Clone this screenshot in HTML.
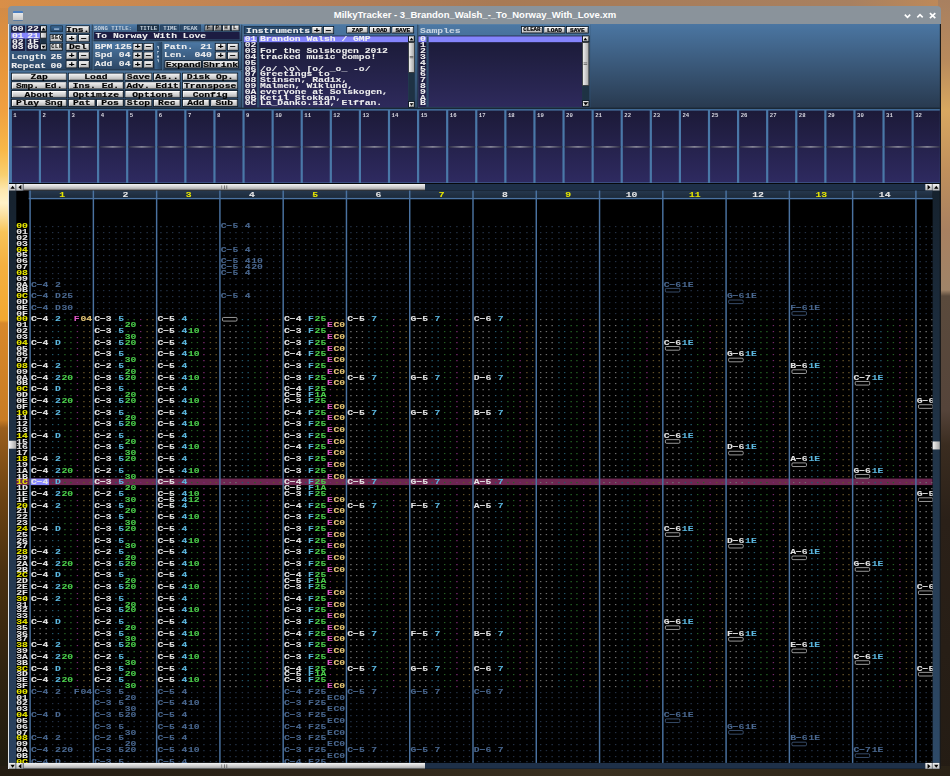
<!DOCTYPE html><html><head><meta charset="utf-8"><style>
*{margin:0;padding:0;box-sizing:border-box}
html,body{width:950px;height:776px;overflow:hidden;background:#2a2118}
#bg{position:absolute;left:0;top:0;width:950px;height:776px}
#app{filter:opacity(0.999);position:absolute;left:9.3px;top:23.5px;width:1280px;height:1024px;transform:scale(0.7272727272727273);transform-origin:0 0;overflow:hidden;background:#000}
.a{position:absolute}
.t{position:absolute;white-space:pre;font-family:"Liberation Mono",monospace;font-weight:bold;font-size:11px;line-height:8px;transform-origin:0 0;transform:scaleX(1.2121);-webkit-text-stroke-width:0.1px}
.sm{position:absolute;white-space:pre;font-family:"Liberation Mono",monospace;font-weight:bold;font-size:6.6px;line-height:6px;transform-origin:0 0;transform:scaleX(1.2)}
.btn{position:absolute;background:linear-gradient(#f4f4f4,#d8d8d8 45%,#b4b4b4);border:1px solid #0c141c;box-shadow:inset 1px 1px 0 #fff, inset -1px -1px 0 #8a8a8a}
.bt{position:absolute;left:0;right:0;text-align:center;white-space:pre;font-family:"Liberation Mono",monospace;font-weight:bold;font-size:11px;line-height:10px;color:#000;-webkit-text-stroke-width:0.25px;transform:scaleX(1.2121)}
.cn{color:#e6e6e6}.ci{color:#5cb8e0}.cv{color:#4cd04c}.ct{color:#e058c8}.cp{color:#e8c878}
i{font-style:normal}
.pn{color:#4a6890}
.cn,.ci,.cv,.ct,.cp,.pn{position:relative;left:-0.7px}
.dn,.di,.dv,.dt,.dp,.dx{-webkit-text-stroke-width:0;position:relative;top:0.9px}
.dn{color:#707070}.di{color:#24586c}.dv{color:#246224}.dt{color:#7a2870}.dp{color:#64522a}
.dx{color:#243246}
.ko{position:absolute;border:1.6px solid #d0d0d0;border-radius:2px}
.kx{border-color:#4a6890}
</style></head><body>
<div id="bg">
<div class="a" style="left:0px;top:0px;width:10px;height:776px;background:linear-gradient(#cf8a4a 0px,#e49238 50px,#f0a040 110px,#f8b848 150px,#f8d070 175px,#fde8b0 190px,#fff2c8 203px,#fbe0a0 215px,#f8c458 232px,#f4b040 265px,#f2a830 320px,#d8882a 323px,#c87c24 420px,#9a5e1c 428px,#6a4212 500px,#4a3010 570px,#2e2210 680px,#1e1a10 776px)"></div>
<div class="a" style="left:0px;top:0px;width:950px;height:8px;background:linear-gradient(90deg,#d98f48 0px,#b88058 300px,#a87a55 500px,#a88060 850px,#c08a58 950px)"></div>
<div class="a" style="left:938px;top:0px;width:12px;height:776px;background:linear-gradient(#a88060 0px,#b88a5c 60px,#d8a860 110px,#c0905c 170px,#a88060 230px,#a08468 290px,#5a4a3c 296px,#55443a 410px,#3a2c20 445px,#2a2018 520px,#241c14 776px)"></div>
<div class="a" style="left:0px;top:766px;width:950px;height:10px;background:linear-gradient(90deg,#241c12,#2c2418 300px,#3a3020 600px,#2a2216 950px)"></div>
</div>
<div class="a" style="left:8px;top:6px;width:932.5px;height:18px;background:#8a939b;border-radius:4px 4px 0 0"></div>
<div class="a" style="left:13px;top:11px;width:10px;height:9.5px;border-radius:1px;background:linear-gradient(#4a7ec0 0,#4a7ec0 22%,#e8e8e8 22%,#c8c8c8 90%,#5a7aa0 90%)"></div>
<div class="a" style="left:0;width:950px;top:7.5px;text-align:center;font-family:'Liberation Sans', sans-serif;font-weight:bold;font-size:9.5px;line-height:14px;color:#fff;letter-spacing:0px">MilkyTracker - 3_Brandon_Walsh_-_To_Norway_With_Love.xm</div>
<svg class="a" style="left:895px;top:4px" width="50" height="20" viewBox="0 0 50 20"><path d="M9.8 10.6 L12.5 13.4 L15.2 10.6" stroke="#fff" stroke-width="1.6" fill="none"/><path d="M22.3 13.4 L25 10.6 L27.7 13.4" stroke="#fff" stroke-width="1.6" fill="none"/><path d="M34.9 9.2 L40.3 14.2 M40.3 9.2 L34.9 14.2" stroke="#fff" stroke-width="1.7" fill="none"/></svg>
<div class="a" style="left:8.3px;top:23.5px;width:1.3px;height:745px;background:#dfe4ea"></div>
<div class="a" style="left:939.9px;top:23.5px;width:0.8px;height:745px;background:#1a1a1a"></div>
<div id="app">
<div class="a" style="left:0px;top:0px;width:1280px;height:118px;background:#1c2c3c"></div>
<div class="a" style="left:0px;top:0px;width:115px;height:64px;background:linear-gradient(#4c78a4,#2c4664);border-top:1px solid #6a98c4;border-left:1px solid #6a98c4;border-right:1px solid #14202c;border-bottom:1px solid #14202c"></div>
<div class="a" style="left:115px;top:0px;width:206px;height:24px;background:linear-gradient(#4c78a4,#2c4664);border-top:1px solid #6a98c4;border-left:1px solid #6a98c4;border-right:1px solid #14202c;border-bottom:1px solid #14202c"></div>
<div class="a" style="left:115px;top:24px;width:96px;height:40px;background:linear-gradient(#4c78a4,#2c4664);border-top:1px solid #6a98c4;border-left:1px solid #6a98c4;border-right:1px solid #14202c;border-bottom:1px solid #14202c"></div>
<div class="a" style="left:211px;top:24px;width:110px;height:40px;background:linear-gradient(#4c78a4,#2c4664);border-top:1px solid #6a98c4;border-left:1px solid #6a98c4;border-right:1px solid #14202c;border-bottom:1px solid #14202c"></div>
<div class="a" style="left:0px;top:64px;width:321px;height:54px;background:linear-gradient(#4c78a4,#2c4664);border-top:1px solid #6a98c4;border-left:1px solid #6a98c4;border-right:1px solid #14202c;border-bottom:1px solid #14202c"></div>
<div class="a" style="left:321px;top:0px;width:242px;height:117px;background:linear-gradient(#4c78a4,#2c4664);border-top:1px solid #6a98c4;border-left:1px solid #6a98c4;border-right:1px solid #14202c;border-bottom:1px solid #14202c"></div>
<div class="a" style="left:563px;top:0px;width:237px;height:117px;background:linear-gradient(#4c78a4,#2c4664);border-top:1px solid #6a98c4;border-left:1px solid #6a98c4;border-bottom:1px solid #14202c"></div>
<div class="a" style="left:800px;top:0px;width:480px;height:117px;background:linear-gradient(#4b76a2,#28394e)"></div>
<div class="a" style="left:3px;top:2px;width:19px;height:34.5px;background:#1c1c3e"></div>
<div class="a" style="left:24px;top:2px;width:19px;height:34.5px;background:#1c1c3e"></div>
<div class="a" style="left:3px;top:11.6px;width:40px;height:8.3px;background:#8484fc"></div>
<div class="t" style="left:3.5px;top:3.3px;color:#f0f0f0;">00</div>
<div class="t" style="left:25px;top:3.3px;color:#f0f0f0;">22</div>
<div class="t" style="left:3.5px;top:11.600000000000001px;color:#f0f0f0;">01</div>
<div class="t" style="left:25px;top:11.600000000000001px;color:#f0f0f0;">21</div>
<div class="t" style="left:3.5px;top:19.900000000000002px;color:#f0f0f0;">02</div>
<div class="t" style="left:25px;top:19.900000000000002px;color:#f0f0f0;">1F</div>
<div class="t" style="left:3.5px;top:28.200000000000003px;color:#f0f0f0;">03</div>
<div class="t" style="left:25px;top:28.200000000000003px;color:#f0f0f0;">00</div>
<div class="a" style="left:43px;top:2px;width:9px;height:34.5px;background:#1e3244"></div>
<div class="btn" style="left:43px;top:2px;width:9px;height:9.3px;">
<div class="bt" style="top:-0.8499999999999996px;"></div></div>
<svg class="a" style="left:43px;top:2px" width="9" height="9"><path d="M1.8 6.8 L4.5 2.8 L7.2 6.8 Z" fill="#000"/></svg>
<div class="a" style="left:43px;top:11.3px;width:9px;height:8.6px;background:linear-gradient(90deg,#f0f0f0,#b0b0b0);border:1px solid #333"></div>
<div class="btn" style="left:43px;top:27.3px;width:9px;height:9.2px;">
<div class="bt" style="top:-0.9000000000000004px;"></div></div>
<svg class="a" style="left:43px;top:27.3px" width="9" height="9"><path d="M1.8 2.8 L4.5 6.8 L7.2 2.8 Z" fill="#000"/></svg>
<div class="a" style="left:57px;top:2px;width:17px;height:9px;background:linear-gradient(#3a6a98,#24466a);border:1px solid #14283a"></div>
<div class="a" style="left:62px;top:5.5px;width:7px;height:2px;background:#9ab8d8"></div>
<div class="btn" style="left:56px;top:13.5px;width:18px;height:11px;">
<div class="bt" style="top:0.0px;"></div></div>
<div class="sm" style="left:58px;top:16.5px;color:#181818;font-size:6.2px;transform:scaleX(1.15);letter-spacing:0.9px;-webkit-text-stroke-width:0.2px">SEQ</div>
<div class="btn" style="left:56px;top:25.5px;width:18px;height:11.5px;">
<div class="bt" style="top:0.25px;"></div></div>
<div class="sm" style="left:58px;top:28.5px;color:#181818;font-size:6.2px;transform:scaleX(1.15);letter-spacing:0.9px;-webkit-text-stroke-width:0.2px">CLN</div>
<div class="btn" style="left:78px;top:2px;width:33px;height:11px;">
<div class="bt" style="top:0.0px;">Ins.</div></div>
<div class="btn" style="left:78px;top:14px;width:16px;height:11px;">
<div class="bt" style="top:0.0px;">+</div></div>
<div class="btn" style="left:95px;top:14px;width:16px;height:11px;">
<div class="bt" style="top:0.0px;">−</div></div>
<div class="btn" style="left:78px;top:26px;width:33px;height:11px;">
<div class="bt" style="top:0.0px;">Del</div></div>
<div class="t" style="left:3px;top:40.5px;color:#f0f0f0;">Length</div>
<div class="t" style="left:57px;top:40.5px;color:#f0f0f0;">25</div>
<div class="btn" style="left:78px;top:38px;width:16px;height:11px;">
<div class="bt" style="top:0.0px;">+</div></div>
<div class="btn" style="left:95px;top:38px;width:16px;height:11px;">
<div class="bt" style="top:0.0px;">−</div></div>
<div class="t" style="left:3px;top:52.5px;color:#f0f0f0;">Repeat</div>
<div class="t" style="left:57px;top:52.5px;color:#f0f0f0;">00</div>
<div class="btn" style="left:78px;top:50px;width:16px;height:11px;">
<div class="bt" style="top:0.0px;">+</div></div>
<div class="btn" style="left:95px;top:50px;width:16px;height:11px;">
<div class="bt" style="top:0.0px;">−</div></div>
<div class="sm" style="left:117px;top:3.5px;color:#c8d4e0;">SONG TITLE:</div>
<div class="a" style="left:175.5px;top:1px;width:30px;height:9px;background:#22384e;border:1px solid #1a2a3a"></div>
<div class="sm" style="left:179.5px;top:3.5px;color:#c8d4e0;">TITLE</div>
<div class="a" style="left:208px;top:1px;width:26px;height:9px;background:#2c4a6a;border:1px solid #24405c"></div>
<div class="sm" style="left:212px;top:3.5px;color:#c8d4e0;">TIME</div>
<div class="a" style="left:235px;top:1px;width:29px;height:9px;background:#2c4a6a;border:1px solid #24405c"></div>
<div class="sm" style="left:240px;top:3.5px;color:#c8d4e0;">PEAK</div>
<div class="btn" style="left:269px;top:1px;width:11.5px;height:8.5px;background:linear-gradient(#a0a0a0,#6c6c6c)">
<div class="bt" style="top:-1.25px;"></div></div>
<div class="sm" style="left:272.3px;top:3.3px;color:#101010;">F</div>
<div class="btn" style="left:281px;top:1px;width:11.5px;height:8.5px;background:linear-gradient(#a0a0a0,#6c6c6c)">
<div class="bt" style="top:-1.25px;"></div></div>
<div class="sm" style="left:284.3px;top:3.3px;color:#101010;">P</div>
<div class="btn" style="left:293px;top:1px;width:11.5px;height:8.5px;background:linear-gradient(#ececec,#b4b4b4)">
<div class="bt" style="top:-1.25px;"></div></div>
<div class="sm" style="left:296.3px;top:3.3px;color:#101010;">H</div>
<div class="btn" style="left:305px;top:1px;width:11.5px;height:8.5px;background:linear-gradient(#ececec,#b4b4b4)">
<div class="bt" style="top:-1.25px;"></div></div>
<div class="sm" style="left:308.3px;top:3.3px;color:#101010;">L</div>
<div class="a" style="left:117px;top:11px;width:200px;height:10px;background:#1c1c42"></div>
<div class="t" style="left:119px;top:12px;color:#f0f0f0;">To Norway With Love</div>
<div class="t" style="left:118px;top:27px;color:#f0f0f0;">BPM</div>
<div class="t" style="left:145px;top:27px;color:#f0f0f0;">125</div>
<div class="t" style="left:118px;top:39px;color:#f0f0f0;">Spd</div>
<div class="t" style="left:150.5px;top:39px;color:#f0f0f0;">04</div>
<div class="t" style="left:118px;top:51px;color:#f0f0f0;">Add</div>
<div class="t" style="left:150.5px;top:51px;color:#f0f0f0;">04</div>
<div class="btn" style="left:170px;top:26px;width:14px;height:11px;">
<div class="bt" style="top:0.0px;">+</div></div>
<div class="btn" style="left:185px;top:26px;width:14px;height:11px;">
<div class="bt" style="top:0.0px;">−</div></div>
<div class="btn" style="left:170px;top:38px;width:14px;height:11px;">
<div class="bt" style="top:0.0px;">+</div></div>
<div class="btn" style="left:185px;top:38px;width:14px;height:11px;">
<div class="bt" style="top:0.0px;">−</div></div>
<div class="btn" style="left:170px;top:50px;width:14px;height:11px;">
<div class="bt" style="top:0.0px;">+</div></div>
<div class="btn" style="left:185px;top:50px;width:14px;height:11px;">
<div class="bt" style="top:0.0px;">−</div></div>
<div class="a" style="left:201px;top:25px;width:9px;height:37px;background:linear-gradient(90deg,#3e6a94,#24405e)"></div>
<div class="sm" style="left:207.5px;top:30px;color:#c8d8e8;font-size:6px;transform:rotate(90deg) scaleX(1.45);letter-spacing:0.6px;-webkit-text-stroke-width:0">FLIP</div>
<div class="t" style="left:213px;top:27px;color:#f0f0f0;">Patn.</div>
<div class="t" style="left:262.5px;top:27px;color:#f0f0f0;">21</div>
<div class="t" style="left:213px;top:39px;color:#f0f0f0;">Len.</div>
<div class="t" style="left:254.5px;top:39px;color:#f0f0f0;">040</div>
<div class="btn" style="left:283px;top:26px;width:16px;height:11px;">
<div class="bt" style="top:0.0px;">+</div></div>
<div class="btn" style="left:300px;top:26px;width:16px;height:11px;">
<div class="bt" style="top:0.0px;">−</div></div>
<div class="btn" style="left:283px;top:38px;width:16px;height:11px;">
<div class="bt" style="top:0.0px;">+</div></div>
<div class="btn" style="left:300px;top:38px;width:16px;height:11px;">
<div class="bt" style="top:0.0px;">−</div></div>
<div class="btn" style="left:214px;top:50px;width:51px;height:11px;">
<div class="bt" style="top:0.0px;">Expand</div></div>
<div class="btn" style="left:266px;top:50px;width:50px;height:11px;">
<div class="bt" style="top:0.0px;">Shrink</div></div>
<div class="btn" style="left:3px;top:67px;width:77px;height:11px;">
<div class="bt" style="top:0.0px;">Zap</div></div>
<div class="btn" style="left:81px;top:67px;width:77px;height:11px;">
<div class="bt" style="top:0.0px;">Load</div></div>
<div class="btn" style="left:159px;top:67px;width:38px;height:11px;">
<div class="bt" style="top:0.0px;">Save</div></div>
<div class="btn" style="left:198px;top:67px;width:38px;height:11px;">
<div class="bt" style="top:0.0px;">As..</div></div>
<div class="btn" style="left:238px;top:67px;width:77px;height:11px;">
<div class="bt" style="top:0.0px;">Disk Op.</div></div>
<div class="btn" style="left:3px;top:79px;width:77px;height:11px;">
<div class="bt" style="top:0.0px;">Smp. Ed.</div></div>
<div class="btn" style="left:81px;top:79px;width:77px;height:11px;">
<div class="bt" style="top:0.0px;">Ins. Ed.</div></div>
<div class="btn" style="left:159px;top:79px;width:77px;height:11px;">
<div class="bt" style="top:0.0px;">Adv. Edit</div></div>
<div class="btn" style="left:238px;top:79px;width:77px;height:11px;">
<div class="bt" style="top:0.0px;">Transpose</div></div>
<div class="btn" style="left:3px;top:91px;width:77px;height:11px;">
<div class="bt" style="top:0.0px;">About</div></div>
<div class="btn" style="left:81px;top:91px;width:77px;height:11px;">
<div class="bt" style="top:0.0px;">Optimize</div></div>
<div class="btn" style="left:159px;top:91px;width:77px;height:11px;">
<div class="bt" style="top:0.0px;">Options</div></div>
<div class="btn" style="left:238px;top:91px;width:77px;height:11px;">
<div class="bt" style="top:0.0px;">Config</div></div>
<div class="btn" style="left:3px;top:103px;width:77px;height:11px;">
<div class="bt" style="top:0.0px;">Play Sng</div></div>
<div class="btn" style="left:81px;top:103px;width:38px;height:11px;">
<div class="bt" style="top:0.0px;">Pat</div></div>
<div class="btn" style="left:120px;top:103px;width:38px;height:11px;">
<div class="bt" style="top:0.0px;">Pos</div></div>
<div class="btn" style="left:159px;top:103px;width:38px;height:11px;">
<div class="bt" style="top:0.0px;">Stop</div></div>
<div class="btn" style="left:198px;top:103px;width:38px;height:11px;">
<div class="bt" style="top:0.0px;">Rec</div></div>
<div class="btn" style="left:238px;top:103px;width:38px;height:11px;">
<div class="bt" style="top:0.0px;">Add</div></div>
<div class="btn" style="left:277px;top:103px;width:38px;height:11px;">
<div class="bt" style="top:0.0px;">Sub</div></div>
<div class="a" style="left:323px;top:3px;width:92px;height:11px;background:#2a4a6c;border:1px solid #1c3048"></div>
<div class="t" style="left:326px;top:5px;color:#f0f0f0;">Instruments</div>
<div class="btn" style="left:416px;top:3px;width:15px;height:11px;">
<div class="bt" style="top:0.0px;">+</div></div>
<div class="btn" style="left:432px;top:3px;width:15px;height:11px;">
<div class="bt" style="top:0.0px;">−</div></div>
<div class="btn" style="left:464px;top:3px;width:30px;height:10px;">
<div class="bt" style="top:-0.5px;font-size:7px;">ZAP</div></div>
<div class="btn" style="left:495px;top:3px;width:30px;height:10px;">
<div class="bt" style="top:-0.5px;font-size:7px;">LOAD</div></div>
<div class="btn" style="left:526px;top:3px;width:31px;height:10px;">
<div class="bt" style="top:-0.5px;font-size:7px;">SAVE</div></div>
<div class="a" style="left:323px;top:16px;width:226px;height:99px;background:linear-gradient(#1a1a36,#2e2a5c)"></div>
<div class="a" style="left:323px;top:16px;width:18px;height:99px;background:linear-gradient(#181834,#26244e)"></div>
<div class="a" style="left:341px;top:16px;width:3px;height:99px;background:#2c4c6c"></div>
<div class="a" style="left:323px;top:17px;width:226px;height:8px;background:#8484fc"></div>
<div class="a" style="left:341px;top:17px;width:3px;height:8px;background:#2c4c6c"></div>
<div class="t" style="left:324px;top:16.6px;color:#f0f0f0;">01</div>
<div class="t" style="left:345px;top:16.6px;color:#f0f0f0;">Brandon Walsh / GMP</div>
<div class="t" style="left:324px;top:24.6px;color:#f0f0f0;">02</div>
<div class="t" style="left:345px;top:24.6px;color:#f0f0f0;"></div>
<div class="t" style="left:324px;top:32.6px;color:#f0f0f0;">03</div>
<div class="t" style="left:345px;top:32.6px;color:#f0f0f0;">For the Solskogen 2012</div>
<div class="t" style="left:324px;top:40.6px;color:#f0f0f0;">04</div>
<div class="t" style="left:345px;top:40.6px;color:#f0f0f0;">tracked music compo!</div>
<div class="t" style="left:324px;top:48.6px;color:#f0f0f0;">05</div>
<div class="t" style="left:345px;top:48.6px;color:#f0f0f0;"></div>
<div class="t" style="left:324px;top:56.6px;color:#f0f0f0;">06</div>
<div class="t" style="left:345px;top:56.6px;color:#f0f0f0;">/o/ \o\ [o/ _o_ -o/</div>
<div class="t" style="left:324px;top:64.6px;color:#f0f0f0;">07</div>
<div class="t" style="left:345px;top:64.6px;color:#f0f0f0;">Greetings to</div>
<div class="t" style="left:324px;top:72.6px;color:#f0f0f0;">08</div>
<div class="t" style="left:345px;top:72.6px;color:#f0f0f0;">Stinsen, Radix,</div>
<div class="t" style="left:324px;top:80.6px;color:#f0f0f0;">09</div>
<div class="t" style="left:345px;top:80.6px;color:#f0f0f0;">Malmen, Wiklund,</div>
<div class="t" style="left:324px;top:88.6px;color:#f0f0f0;">0A</div>
<div class="t" style="left:345px;top:88.6px;color:#f0f0f0;">everyone at Solskogen,</div>
<div class="t" style="left:324px;top:96.6px;color:#f0f0f0;">0B</div>
<div class="t" style="left:345px;top:96.6px;color:#f0f0f0;">Ketil Stokkan,</div>
<div class="t" style="left:324px;top:104.6px;color:#f0f0f0;">0C</div>
<div class="t" style="left:345px;top:104.6px;color:#f0f0f0;">La_Danko.sid, Elffan.</div>
<div class="a" style="left:549px;top:16px;width:9px;height:99px;background:#1e3244"></div>
<div class="btn" style="left:549px;top:16px;width:9px;height:9px;">
<div class="bt" style="top:-1.0px;"></div></div>
<svg class="a" style="left:549px;top:16px" width="9" height="9"><path d="M2 6.5 L4.5 3 L7 6.5 Z" fill="#000"/></svg>
<div class="a" style="left:549px;top:25px;width:9px;height:42px;background:linear-gradient(90deg,#f0f0f0,#a8a8a8);border:1px solid #444"></div>
<div class="a" style="left:551px;top:44px;width:5px;height:1px;background:#555"></div>
<div class="a" style="left:551px;top:46px;width:5px;height:1px;background:#555"></div>
<div class="btn" style="left:549px;top:106px;width:9px;height:9px;">
<div class="bt" style="top:-1.0px;"></div></div>
<svg class="a" style="left:549px;top:106px" width="9" height="9"><path d="M2 3 L4.5 6.5 L7 3 Z" fill="#000"/></svg>
<div class="t" style="left:565px;top:5px;color:#c8d4e0;">Samples</div>
<div class="btn" style="left:704px;top:3px;width:30px;height:10px;">
<div class="bt" style="top:-0.5px;font-size:6.5px;">CLEAR</div></div>
<div class="btn" style="left:735px;top:3px;width:30px;height:10px;">
<div class="bt" style="top:-0.5px;font-size:7px;">LOAD</div></div>
<div class="btn" style="left:766px;top:3px;width:31px;height:10px;">
<div class="bt" style="top:-0.5px;font-size:7px;">SAVE</div></div>
<div class="a" style="left:563px;top:16px;width:224.5px;height:98px;background:linear-gradient(#1a1a36,#2e2a5c)"></div>
<div class="a" style="left:563px;top:16px;width:11px;height:98px;background:linear-gradient(#181834,#26244e)"></div>
<div class="a" style="left:574px;top:16px;width:3px;height:98px;background:#2c4c6c"></div>
<div class="a" style="left:563px;top:17px;width:225px;height:8px;background:#8484fc"></div>
<div class="a" style="left:574px;top:17px;width:3px;height:8px;background:#2c4c6c"></div>
<div class="t" style="left:564.5px;top:16.6px;color:#f0f0f0;">0</div>
<div class="t" style="left:564.5px;top:24.6px;color:#f0f0f0;">1</div>
<div class="t" style="left:564.5px;top:32.6px;color:#f0f0f0;">2</div>
<div class="t" style="left:564.5px;top:40.6px;color:#f0f0f0;">3</div>
<div class="t" style="left:564.5px;top:48.6px;color:#f0f0f0;">4</div>
<div class="t" style="left:564.5px;top:56.6px;color:#f0f0f0;">5</div>
<div class="t" style="left:564.5px;top:64.6px;color:#f0f0f0;">6</div>
<div class="t" style="left:564.5px;top:72.6px;color:#f0f0f0;">7</div>
<div class="t" style="left:564.5px;top:80.6px;color:#f0f0f0;">8</div>
<div class="t" style="left:564.5px;top:88.6px;color:#f0f0f0;">9</div>
<div class="t" style="left:564.5px;top:96.6px;color:#f0f0f0;">A</div>
<div class="t" style="left:564.5px;top:104.6px;color:#f0f0f0;">B</div>
<div class="a" style="left:787.5px;top:16px;width:10.5px;height:98px;background:#1e3244"></div>
<div class="btn" style="left:787.5px;top:16px;width:10.5px;height:9px;">
<div class="bt" style="top:-1.0px;"></div></div>
<svg class="a" style="left:788px;top:16px" width="9" height="9"><path d="M2 6.5 L4.5 3 L7 6.5 Z" fill="#000"/></svg>
<div class="a" style="left:787.5px;top:25px;width:10.5px;height:60px;background:linear-gradient(90deg,#f0f0f0,#a8a8a8);border:1px solid #444"></div>
<div class="a" style="left:790px;top:53px;width:5px;height:1px;background:#555"></div>
<div class="a" style="left:790px;top:55px;width:5px;height:1px;background:#555"></div>
<div class="btn" style="left:787.5px;top:104.5px;width:10.5px;height:9.5px;">
<div class="bt" style="top:-0.75px;"></div></div>
<svg class="a" style="left:788px;top:105px" width="9" height="9"><path d="M1.5 2.5 L5 6.8 L8.5 2.5 Z" fill="#000"/></svg>
<div class="a" style="left:0px;top:116.5px;width:1280px;height:102.5px;background:#4a78a8"></div>
<div class="a" style="left:0px;top:115px;width:1280px;height:1.5px;background:#1a2836"></div>
<div class="a" style="left:3.5px;top:119px;width:37.6px;height:98.5px;background:linear-gradient(#1c1a38,#2e2a60)"></div>
<div class="a" style="left:3.5px;top:167.5px;width:37.6px;height:2px;background:linear-gradient(90deg,#2a2a40,#9a9aa6 50%,#2a2a40)"></div>
<div class="sm" style="left:5.5px;top:124px;color:#d8d8e0;font-size:6.5px">1</div>
<div class="a" style="left:43.5px;top:119px;width:37.6px;height:98.5px;background:linear-gradient(#1c1a38,#2e2a60)"></div>
<div class="a" style="left:43.5px;top:167.5px;width:37.6px;height:2px;background:linear-gradient(90deg,#2a2a40,#9a9aa6 50%,#2a2a40)"></div>
<div class="sm" style="left:45.5px;top:124px;color:#d8d8e0;font-size:6.5px">2</div>
<div class="a" style="left:83.5px;top:119px;width:37.6px;height:98.5px;background:linear-gradient(#1c1a38,#2e2a60)"></div>
<div class="a" style="left:83.5px;top:167.5px;width:37.6px;height:2px;background:linear-gradient(90deg,#2a2a40,#9a9aa6 50%,#2a2a40)"></div>
<div class="sm" style="left:85.5px;top:124px;color:#d8d8e0;font-size:6.5px">3</div>
<div class="a" style="left:123.5px;top:119px;width:37.6px;height:98.5px;background:linear-gradient(#1c1a38,#2e2a60)"></div>
<div class="a" style="left:123.5px;top:167.5px;width:37.6px;height:2px;background:linear-gradient(90deg,#2a2a40,#9a9aa6 50%,#2a2a40)"></div>
<div class="sm" style="left:125.5px;top:124px;color:#d8d8e0;font-size:6.5px">4</div>
<div class="a" style="left:163.5px;top:119px;width:37.6px;height:98.5px;background:linear-gradient(#1c1a38,#2e2a60)"></div>
<div class="a" style="left:163.5px;top:167.5px;width:37.6px;height:2px;background:linear-gradient(90deg,#2a2a40,#9a9aa6 50%,#2a2a40)"></div>
<div class="sm" style="left:165.5px;top:124px;color:#d8d8e0;font-size:6.5px">5</div>
<div class="a" style="left:203.5px;top:119px;width:37.6px;height:98.5px;background:linear-gradient(#1c1a38,#2e2a60)"></div>
<div class="a" style="left:203.5px;top:167.5px;width:37.6px;height:2px;background:linear-gradient(90deg,#2a2a40,#9a9aa6 50%,#2a2a40)"></div>
<div class="sm" style="left:205.5px;top:124px;color:#d8d8e0;font-size:6.5px">6</div>
<div class="a" style="left:243.5px;top:119px;width:37.6px;height:98.5px;background:linear-gradient(#1c1a38,#2e2a60)"></div>
<div class="a" style="left:243.5px;top:167.5px;width:37.6px;height:2px;background:linear-gradient(90deg,#2a2a40,#9a9aa6 50%,#2a2a40)"></div>
<div class="sm" style="left:245.5px;top:124px;color:#d8d8e0;font-size:6.5px">7</div>
<div class="a" style="left:283.5px;top:119px;width:37.6px;height:98.5px;background:linear-gradient(#1c1a38,#2e2a60)"></div>
<div class="a" style="left:283.5px;top:167.5px;width:37.6px;height:2px;background:linear-gradient(90deg,#2a2a40,#9a9aa6 50%,#2a2a40)"></div>
<div class="sm" style="left:285.5px;top:124px;color:#d8d8e0;font-size:6.5px">8</div>
<div class="a" style="left:323.5px;top:119px;width:37.6px;height:98.5px;background:linear-gradient(#1c1a38,#2e2a60)"></div>
<div class="a" style="left:323.5px;top:167.5px;width:37.6px;height:2px;background:linear-gradient(90deg,#2a2a40,#9a9aa6 50%,#2a2a40)"></div>
<div class="sm" style="left:325.5px;top:124px;color:#d8d8e0;font-size:6.5px">9</div>
<div class="a" style="left:363.5px;top:119px;width:37.6px;height:98.5px;background:linear-gradient(#1c1a38,#2e2a60)"></div>
<div class="a" style="left:363.5px;top:167.5px;width:37.6px;height:2px;background:linear-gradient(90deg,#2a2a40,#9a9aa6 50%,#2a2a40)"></div>
<div class="sm" style="left:365.5px;top:124px;color:#d8d8e0;font-size:6.5px">10</div>
<div class="a" style="left:403.5px;top:119px;width:37.6px;height:98.5px;background:linear-gradient(#1c1a38,#2e2a60)"></div>
<div class="a" style="left:403.5px;top:167.5px;width:37.6px;height:2px;background:linear-gradient(90deg,#2a2a40,#9a9aa6 50%,#2a2a40)"></div>
<div class="sm" style="left:405.5px;top:124px;color:#d8d8e0;font-size:6.5px">11</div>
<div class="a" style="left:443.5px;top:119px;width:37.6px;height:98.5px;background:linear-gradient(#1c1a38,#2e2a60)"></div>
<div class="a" style="left:443.5px;top:167.5px;width:37.6px;height:2px;background:linear-gradient(90deg,#2a2a40,#9a9aa6 50%,#2a2a40)"></div>
<div class="sm" style="left:445.5px;top:124px;color:#d8d8e0;font-size:6.5px">12</div>
<div class="a" style="left:483.5px;top:119px;width:37.6px;height:98.5px;background:linear-gradient(#1c1a38,#2e2a60)"></div>
<div class="a" style="left:483.5px;top:167.5px;width:37.6px;height:2px;background:linear-gradient(90deg,#2a2a40,#9a9aa6 50%,#2a2a40)"></div>
<div class="sm" style="left:485.5px;top:124px;color:#d8d8e0;font-size:6.5px">13</div>
<div class="a" style="left:523.5px;top:119px;width:37.6px;height:98.5px;background:linear-gradient(#1c1a38,#2e2a60)"></div>
<div class="a" style="left:523.5px;top:167.5px;width:37.6px;height:2px;background:linear-gradient(90deg,#2a2a40,#9a9aa6 50%,#2a2a40)"></div>
<div class="sm" style="left:525.5px;top:124px;color:#d8d8e0;font-size:6.5px">14</div>
<div class="a" style="left:563.5px;top:119px;width:37.6px;height:98.5px;background:linear-gradient(#1c1a38,#2e2a60)"></div>
<div class="a" style="left:563.5px;top:167.5px;width:37.6px;height:2px;background:linear-gradient(90deg,#2a2a40,#9a9aa6 50%,#2a2a40)"></div>
<div class="sm" style="left:565.5px;top:124px;color:#d8d8e0;font-size:6.5px">15</div>
<div class="a" style="left:603.5px;top:119px;width:37.6px;height:98.5px;background:linear-gradient(#1c1a38,#2e2a60)"></div>
<div class="a" style="left:603.5px;top:167.5px;width:37.6px;height:2px;background:linear-gradient(90deg,#2a2a40,#9a9aa6 50%,#2a2a40)"></div>
<div class="sm" style="left:605.5px;top:124px;color:#d8d8e0;font-size:6.5px">16</div>
<div class="a" style="left:643.5px;top:119px;width:37.6px;height:98.5px;background:linear-gradient(#1c1a38,#2e2a60)"></div>
<div class="a" style="left:643.5px;top:167.5px;width:37.6px;height:2px;background:linear-gradient(90deg,#2a2a40,#9a9aa6 50%,#2a2a40)"></div>
<div class="sm" style="left:645.5px;top:124px;color:#d8d8e0;font-size:6.5px">17</div>
<div class="a" style="left:683.5px;top:119px;width:37.6px;height:98.5px;background:linear-gradient(#1c1a38,#2e2a60)"></div>
<div class="a" style="left:683.5px;top:167.5px;width:37.6px;height:2px;background:linear-gradient(90deg,#2a2a40,#9a9aa6 50%,#2a2a40)"></div>
<div class="sm" style="left:685.5px;top:124px;color:#d8d8e0;font-size:6.5px">18</div>
<div class="a" style="left:723.5px;top:119px;width:37.6px;height:98.5px;background:linear-gradient(#1c1a38,#2e2a60)"></div>
<div class="a" style="left:723.5px;top:167.5px;width:37.6px;height:2px;background:linear-gradient(90deg,#2a2a40,#9a9aa6 50%,#2a2a40)"></div>
<div class="sm" style="left:725.5px;top:124px;color:#d8d8e0;font-size:6.5px">19</div>
<div class="a" style="left:763.5px;top:119px;width:37.6px;height:98.5px;background:linear-gradient(#1c1a38,#2e2a60)"></div>
<div class="a" style="left:763.5px;top:167.5px;width:37.6px;height:2px;background:linear-gradient(90deg,#2a2a40,#9a9aa6 50%,#2a2a40)"></div>
<div class="sm" style="left:765.5px;top:124px;color:#d8d8e0;font-size:6.5px">20</div>
<div class="a" style="left:803.5px;top:119px;width:37.6px;height:98.5px;background:linear-gradient(#1c1a38,#2e2a60)"></div>
<div class="a" style="left:803.5px;top:167.5px;width:37.6px;height:2px;background:linear-gradient(90deg,#2a2a40,#9a9aa6 50%,#2a2a40)"></div>
<div class="sm" style="left:805.5px;top:124px;color:#d8d8e0;font-size:6.5px">21</div>
<div class="a" style="left:843.5px;top:119px;width:37.6px;height:98.5px;background:linear-gradient(#1c1a38,#2e2a60)"></div>
<div class="a" style="left:843.5px;top:167.5px;width:37.6px;height:2px;background:linear-gradient(90deg,#2a2a40,#9a9aa6 50%,#2a2a40)"></div>
<div class="sm" style="left:845.5px;top:124px;color:#d8d8e0;font-size:6.5px">22</div>
<div class="a" style="left:883.5px;top:119px;width:37.6px;height:98.5px;background:linear-gradient(#1c1a38,#2e2a60)"></div>
<div class="a" style="left:883.5px;top:167.5px;width:37.6px;height:2px;background:linear-gradient(90deg,#2a2a40,#9a9aa6 50%,#2a2a40)"></div>
<div class="sm" style="left:885.5px;top:124px;color:#d8d8e0;font-size:6.5px">23</div>
<div class="a" style="left:923.5px;top:119px;width:37.6px;height:98.5px;background:linear-gradient(#1c1a38,#2e2a60)"></div>
<div class="a" style="left:923.5px;top:167.5px;width:37.6px;height:2px;background:linear-gradient(90deg,#2a2a40,#9a9aa6 50%,#2a2a40)"></div>
<div class="sm" style="left:925.5px;top:124px;color:#d8d8e0;font-size:6.5px">24</div>
<div class="a" style="left:963.5px;top:119px;width:37.6px;height:98.5px;background:linear-gradient(#1c1a38,#2e2a60)"></div>
<div class="a" style="left:963.5px;top:167.5px;width:37.6px;height:2px;background:linear-gradient(90deg,#2a2a40,#9a9aa6 50%,#2a2a40)"></div>
<div class="sm" style="left:965.5px;top:124px;color:#d8d8e0;font-size:6.5px">25</div>
<div class="a" style="left:1003.5px;top:119px;width:37.6px;height:98.5px;background:linear-gradient(#1c1a38,#2e2a60)"></div>
<div class="a" style="left:1003.5px;top:167.5px;width:37.6px;height:2px;background:linear-gradient(90deg,#2a2a40,#9a9aa6 50%,#2a2a40)"></div>
<div class="sm" style="left:1005.5px;top:124px;color:#d8d8e0;font-size:6.5px">26</div>
<div class="a" style="left:1043.5px;top:119px;width:37.6px;height:98.5px;background:linear-gradient(#1c1a38,#2e2a60)"></div>
<div class="a" style="left:1043.5px;top:167.5px;width:37.6px;height:2px;background:linear-gradient(90deg,#2a2a40,#9a9aa6 50%,#2a2a40)"></div>
<div class="sm" style="left:1045.5px;top:124px;color:#d8d8e0;font-size:6.5px">27</div>
<div class="a" style="left:1083.5px;top:119px;width:37.6px;height:98.5px;background:linear-gradient(#1c1a38,#2e2a60)"></div>
<div class="a" style="left:1083.5px;top:167.5px;width:37.6px;height:2px;background:linear-gradient(90deg,#2a2a40,#9a9aa6 50%,#2a2a40)"></div>
<div class="sm" style="left:1085.5px;top:124px;color:#d8d8e0;font-size:6.5px">28</div>
<div class="a" style="left:1123.5px;top:119px;width:37.6px;height:98.5px;background:linear-gradient(#1c1a38,#2e2a60)"></div>
<div class="a" style="left:1123.5px;top:167.5px;width:37.6px;height:2px;background:linear-gradient(90deg,#2a2a40,#9a9aa6 50%,#2a2a40)"></div>
<div class="sm" style="left:1125.5px;top:124px;color:#d8d8e0;font-size:6.5px">29</div>
<div class="a" style="left:1163.5px;top:119px;width:37.6px;height:98.5px;background:linear-gradient(#1c1a38,#2e2a60)"></div>
<div class="a" style="left:1163.5px;top:167.5px;width:37.6px;height:2px;background:linear-gradient(90deg,#2a2a40,#9a9aa6 50%,#2a2a40)"></div>
<div class="sm" style="left:1165.5px;top:124px;color:#d8d8e0;font-size:6.5px">30</div>
<div class="a" style="left:1203.5px;top:119px;width:37.6px;height:98.5px;background:linear-gradient(#1c1a38,#2e2a60)"></div>
<div class="a" style="left:1203.5px;top:167.5px;width:37.6px;height:2px;background:linear-gradient(90deg,#2a2a40,#9a9aa6 50%,#2a2a40)"></div>
<div class="sm" style="left:1205.5px;top:124px;color:#d8d8e0;font-size:6.5px">31</div>
<div class="a" style="left:1243.5px;top:119px;width:37.6px;height:98.5px;background:linear-gradient(#1c1a38,#2e2a60)"></div>
<div class="a" style="left:1243.5px;top:167.5px;width:37.6px;height:2px;background:linear-gradient(90deg,#2a2a40,#9a9aa6 50%,#2a2a40)"></div>
<div class="sm" style="left:1245.5px;top:124px;color:#d8d8e0;font-size:6.5px">32</div>
<div class="a" style="left:0px;top:219px;width:1280px;height:805px;background:#000"></div>
<div class="a" style="left:0px;top:229px;width:10px;height:787px;background:linear-gradient(#16222e,#2a4260)"></div>
<div class="a" style="left:1270px;top:229px;width:10px;height:787px;background:linear-gradient(#16222e,#2e4a68)"></div>
<div class="a" style="left:0px;top:573px;width:10px;height:11px;background:linear-gradient(90deg,#f4f4f4,#a8a8a8)"></div>
<div class="a" style="left:1270px;top:574px;width:10px;height:11px;background:linear-gradient(90deg,#f4f4f4,#a8a8a8)"></div>
<div class="a" style="left:0px;top:220px;width:1280px;height:9px;background:#1e3048"></div>
<div class="a" style="left:20px;top:220px;width:552px;height:9px;background:linear-gradient(#f4f4f4,#d0d0d0 50%,#a0a0a0);border-bottom:1px solid #504030"></div>
<div class="a" style="left:292px;top:222px;width:1.3px;height:5px;background:#777"></div>
<div class="a" style="left:295.5px;top:222px;width:1.3px;height:5px;background:#555"></div>
<div class="a" style="left:299px;top:222px;width:1.3px;height:5px;background:#555"></div>
<div class="a" style="left:0px;top:1016px;width:1280px;height:9px;background:#1e3048"></div>
<div class="a" style="left:20px;top:1016px;width:552px;height:9px;background:linear-gradient(#f4f4f4,#d0d0d0 50%,#a0a0a0);border-bottom:1px solid #504030"></div>
<div class="a" style="left:292px;top:1018px;width:1.3px;height:5px;background:#777"></div>
<div class="a" style="left:295.5px;top:1018px;width:1.3px;height:5px;background:#555"></div>
<div class="a" style="left:299px;top:1018px;width:1.3px;height:5px;background:#555"></div>
<div class="a" style="left:0px;top:220px;width:10px;height:9px;background:linear-gradient(#f4f4f4,#b8b8b8);border-right:1px solid #888"></div>
<svg class="a" style="left:0px;top:220px" width="10" height="9"><path d="M2 6.5 L5 2.5 L8 6.5 Z" fill="#000"/></svg>
<div class="a" style="left:10px;top:220px;width:10px;height:9px;background:linear-gradient(#f4f4f4,#b8b8b8);border-right:1px solid #888"></div>
<svg class="a" style="left:10px;top:220px" width="10" height="9"><path d="M3 4.5 L7 1 L7 8 Z" fill="#000"/></svg>
<div class="a" style="left:1260px;top:220px;width:10px;height:9px;background:linear-gradient(#f4f4f4,#b8b8b8);border-right:1px solid #888"></div>
<svg class="a" style="left:1260px;top:220px" width="10" height="9"><path d="M3 1 L7 4.5 L3 8 Z" fill="#000"/></svg>
<div class="a" style="left:1270px;top:220px;width:10px;height:9px;background:linear-gradient(#f4f4f4,#b8b8b8);border-right:1px solid #888"></div>
<svg class="a" style="left:1270px;top:220px" width="10" height="9"><path d="M2 6.5 L5 2.5 L8 6.5 Z" fill="#000"/></svg>
<div class="a" style="left:0px;top:1016px;width:10px;height:9px;background:linear-gradient(#f4f4f4,#b8b8b8);border-right:1px solid #888"></div>
<svg class="a" style="left:0px;top:1016px" width="10" height="9"><path d="M2 2.5 L5 6.5 L8 2.5 Z" fill="#000"/></svg>
<div class="a" style="left:10px;top:1016px;width:10px;height:9px;background:linear-gradient(#f4f4f4,#b8b8b8);border-right:1px solid #888"></div>
<svg class="a" style="left:10px;top:1016px" width="10" height="9"><path d="M3 4.5 L7 1 L7 8 Z" fill="#000"/></svg>
<div class="a" style="left:1260px;top:1016px;width:10px;height:9px;background:linear-gradient(#f4f4f4,#b8b8b8);border-right:1px solid #888"></div>
<svg class="a" style="left:1260px;top:1016px" width="10" height="9"><path d="M3 1 L7 4.5 L3 8 Z" fill="#000"/></svg>
<div class="a" style="left:1270px;top:1016px;width:10px;height:9px;background:linear-gradient(#f4f4f4,#b8b8b8);border-right:1px solid #888"></div>
<svg class="a" style="left:1270px;top:1016px" width="10" height="9"><path d="M2 2.5 L5 6.5 L8 2.5 Z" fill="#000"/></svg>
<div class="a" style="left:27px;top:229px;width:1243px;height:9.5px;background:linear-gradient(#26384e,#1c2a3a)"></div>
<div class="a" style="left:27px;top:238.5px;width:1243px;height:2.5px;background:#4a72a0"></div>
<div class="t" style="left:68.5px;top:230.5px;color:#e8e800">1</div>
<div class="t" style="left:155.5px;top:230.5px;color:#e8e8e8">2</div>
<div class="t" style="left:242.5px;top:230.5px;color:#e8e800">3</div>
<div class="t" style="left:329.5px;top:230.5px;color:#e8e8e8">4</div>
<div class="t" style="left:416.5px;top:230.5px;color:#e8e800">5</div>
<div class="t" style="left:503.5px;top:230.5px;color:#e8e8e8">6</div>
<div class="t" style="left:590.5px;top:230.5px;color:#e8e800">7</div>
<div class="t" style="left:677.5px;top:230.5px;color:#e8e8e8">8</div>
<div class="t" style="left:764.5px;top:230.5px;color:#e8e800">9</div>
<div class="t" style="left:847.5px;top:230.5px;color:#e8e8e8">10</div>
<div class="t" style="left:934.5px;top:230.5px;color:#e8e800">11</div>
<div class="t" style="left:1021.5px;top:230.5px;color:#e8e8e8">12</div>
<div class="t" style="left:1108.5px;top:230.5px;color:#e8e800">13</div>
<div class="t" style="left:1195.5px;top:230.5px;color:#e8e8e8">14</div>
<div class="a" style="left:0;top:0;width:1270px;height:1016px;overflow:hidden">
<div class="a" style="left:10px;top:625.0px;width:1260px;height:9px;background:#6c2650"></div>
<div class="t" style="left:10px;top:242.1px;color:#e8e8e8">



<span style="color:#e8e800">00</span>
01
02
03
<span style="color:#e8e800">04</span>
05
06
07
<span style="color:#e8e800">08</span>
09
0A
0B
<span style="color:#e8e800">0C</span>
0D
0E
0F
<span style="color:#e8e800">00</span>
01
02
03
<span style="color:#e8e800">04</span>
05
06
07
<span style="color:#e8e800">08</span>
09
0A
0B
<span style="color:#e8e800">0C</span>
0D
0E
0F
<span style="color:#e8e800">10</span>
11
12
13
<span style="color:#e8e800">14</span>
15
16
17
<span style="color:#e8e800">18</span>
19
1A
1B
<span style="color:#e8e800">1C</span>
1D
1E
1F
<span style="color:#e8e800">20</span>
21
22
23
<span style="color:#e8e800">24</span>
25
26
27
<span style="color:#e8e800">28</span>
29
2A
2B
<span style="color:#e8e800">2C</span>
2D
2E
2F
<span style="color:#e8e800">30</span>
31
32
33
<span style="color:#e8e800">34</span>
35
36
37
<span style="color:#e8e800">38</span>
39
3A
3B
<span style="color:#e8e800">3C</span>
3D
3E
3F
<span style="color:#e8e800">00</span>
01
02
03
<span style="color:#e8e800">04</span>
05
06
07
<span style="color:#e8e800">08</span>
09
0A
0B
<span style="color:#e8e800">0C</span></div>
<div class="a" style="left:30px;top:625.0px;width:25px;height:9px;background:#8888ff"></div>
<div class="t" style="left:30.5px;top:242.1px">



<i class="dx">···</i>
<i class="dx">···</i>
<i class="dx">···</i>
<i class="dx">···</i>
<i class="dx">···</i>
<i class="dx">···</i>
<i class="dx">···</i>
<i class="dx">···</i>
<i class="dx">···</i>
<i class="dx">···</i>
<i class="pn">C−4</i>
<i class="dx">···</i>
<i class="pn">C−4</i>
<i class="dx">···</i>
<i class="pn">C−4</i>
<i class="dx">···</i>
<i class="cn">C−4</i>
<i class="dn">···</i>
<i class="dn">···</i>
<i class="dn">···</i>
<i class="cn">C−4</i>
<i class="dn">···</i>
<i class="dn">···</i>
<i class="dn">···</i>
<i class="cn">C−4</i>
<i class="dn">···</i>
<i class="cn">C−4</i>
<i class="dn">···</i>
<i class="cn">C−4</i>
<i class="dn">···</i>
<i class="cn">C−4</i>
<i class="dn">···</i>
<i class="cn">C−4</i>
<i class="dn">···</i>
<i class="dn">···</i>
<i class="dn">···</i>
<i class="cn">C−4</i>
<i class="dn">···</i>
<i class="dn">···</i>
<i class="dn">···</i>
<i class="cn">C−4</i>
<i class="dn">···</i>
<i class="cn">C−4</i>
<i class="dn">···</i>
<i class="cn">C−4</i>
<i class="dn">···</i>
<i class="cn">C−4</i>
<i class="dn">···</i>
<i class="cn">C−4</i>
<i class="dn">···</i>
<i class="dn">···</i>
<i class="dn">···</i>
<i class="cn">C−4</i>
<i class="dn">···</i>
<i class="dn">···</i>
<i class="dn">···</i>
<i class="cn">C−4</i>
<i class="dn">···</i>
<i class="cn">C−4</i>
<i class="dn">···</i>
<i class="cn">C−4</i>
<i class="dn">···</i>
<i class="cn">C−4</i>
<i class="dn">···</i>
<i class="cn">C−4</i>
<i class="dn">···</i>
<i class="dn">···</i>
<i class="dn">···</i>
<i class="cn">C−4</i>
<i class="dn">···</i>
<i class="dn">···</i>
<i class="dn">···</i>
<i class="cn">C−4</i>
<i class="dn">···</i>
<i class="cn">C−4</i>
<i class="dn">···</i>
<i class="cn">C−4</i>
<i class="dn">···</i>
<i class="cn">C−4</i>
<i class="dn">···</i>
<i class="pn">C−4</i>
<i class="dx">···</i>
<i class="dx">···</i>
<i class="dx">···</i>
<i class="pn">C−4</i>
<i class="dx">···</i>
<i class="dx">···</i>
<i class="dx">···</i>
<i class="pn">C−4</i>
<i class="dx">···</i>
<i class="pn">C−4</i>
<i class="dx">···</i>
<i class="pn">C−4</i></div>
<div class="t" style="left:55.5px;top:242.1px">



<i class="dx">··</i>
<i class="dx">··</i>
<i class="dx">··</i>
<i class="dx">··</i>
<i class="dx">··</i>
<i class="dx">··</i>
<i class="dx">··</i>
<i class="dx">··</i>
<i class="dx">··</i>
<i class="dx">··</i>
<i class="dx">·</i><i class="pn">2</i>
<i class="dx">··</i>
<i class="dx">·</i><i class="pn">D</i>
<i class="dx">··</i>
<i class="dx">·</i><i class="pn">D</i>
<i class="dx">··</i>
<i class="di">·</i><i class="ci">2</i>
<i class="di">··</i>
<i class="di">··</i>
<i class="di">··</i>
<i class="di">·</i><i class="ci">D</i>
<i class="di">··</i>
<i class="di">··</i>
<i class="di">··</i>
<i class="di">·</i><i class="ci">2</i>
<i class="di">··</i>
<i class="di">·</i><i class="ci">2</i>
<i class="di">··</i>
<i class="di">·</i><i class="ci">D</i>
<i class="di">··</i>
<i class="di">·</i><i class="ci">2</i>
<i class="di">··</i>
<i class="di">·</i><i class="ci">2</i>
<i class="di">··</i>
<i class="di">··</i>
<i class="di">··</i>
<i class="di">·</i><i class="ci">D</i>
<i class="di">··</i>
<i class="di">··</i>
<i class="di">··</i>
<i class="di">·</i><i class="ci">2</i>
<i class="di">··</i>
<i class="di">·</i><i class="ci">2</i>
<i class="di">··</i>
<i class="di">·</i><i class="ci">D</i>
<i class="di">··</i>
<i class="di">·</i><i class="ci">2</i>
<i class="di">··</i>
<i class="di">·</i><i class="ci">2</i>
<i class="di">··</i>
<i class="di">··</i>
<i class="di">··</i>
<i class="di">·</i><i class="ci">D</i>
<i class="di">··</i>
<i class="di">··</i>
<i class="di">··</i>
<i class="di">·</i><i class="ci">2</i>
<i class="di">··</i>
<i class="di">·</i><i class="ci">2</i>
<i class="di">··</i>
<i class="di">·</i><i class="ci">D</i>
<i class="di">··</i>
<i class="di">·</i><i class="ci">2</i>
<i class="di">··</i>
<i class="di">·</i><i class="ci">2</i>
<i class="di">··</i>
<i class="di">··</i>
<i class="di">··</i>
<i class="di">·</i><i class="ci">D</i>
<i class="di">··</i>
<i class="di">··</i>
<i class="di">··</i>
<i class="di">·</i><i class="ci">2</i>
<i class="di">··</i>
<i class="di">·</i><i class="ci">2</i>
<i class="di">··</i>
<i class="di">·</i><i class="ci">D</i>
<i class="di">··</i>
<i class="di">·</i><i class="ci">2</i>
<i class="di">··</i>
<i class="dx">·</i><i class="pn">2</i>
<i class="dx">··</i>
<i class="dx">··</i>
<i class="dx">··</i>
<i class="dx">·</i><i class="pn">D</i>
<i class="dx">··</i>
<i class="dx">··</i>
<i class="dx">··</i>
<i class="dx">·</i><i class="pn">2</i>
<i class="dx">··</i>
<i class="dx">·</i><i class="pn">2</i>
<i class="dx">··</i>
<i class="dx">·</i><i class="pn">D</i></div>
<div class="t" style="left:72.5px;top:242.1px">



<i class="dx">··</i>
<i class="dx">··</i>
<i class="dx">··</i>
<i class="dx">··</i>
<i class="dx">··</i>
<i class="dx">··</i>
<i class="dx">··</i>
<i class="dx">··</i>
<i class="dx">··</i>
<i class="dx">··</i>
<i class="dx">··</i>
<i class="dx">··</i>
<i class="pn">25</i>
<i class="dx">··</i>
<i class="pn">30</i>
<i class="dx">··</i>
<i class="dv">··</i>
<i class="dv">··</i>
<i class="dv">··</i>
<i class="dv">··</i>
<i class="dv">··</i>
<i class="dv">··</i>
<i class="dv">··</i>
<i class="dv">··</i>
<i class="dv">··</i>
<i class="dv">··</i>
<i class="cv">20</i>
<i class="dv">··</i>
<i class="dv">··</i>
<i class="dv">··</i>
<i class="cv">20</i>
<i class="dv">··</i>
<i class="dv">··</i>
<i class="dv">··</i>
<i class="dv">··</i>
<i class="dv">··</i>
<i class="dv">··</i>
<i class="dv">··</i>
<i class="dv">··</i>
<i class="dv">··</i>
<i class="dv">··</i>
<i class="dv">··</i>
<i class="cv">20</i>
<i class="dv">··</i>
<i class="dv">··</i>
<i class="dv">··</i>
<i class="cv">20</i>
<i class="dv">··</i>
<i class="dv">··</i>
<i class="dv">··</i>
<i class="dv">··</i>
<i class="dv">··</i>
<i class="dv">··</i>
<i class="dv">··</i>
<i class="dv">··</i>
<i class="dv">··</i>
<i class="dv">··</i>
<i class="dv">··</i>
<i class="cv">20</i>
<i class="dv">··</i>
<i class="dv">··</i>
<i class="dv">··</i>
<i class="cv">20</i>
<i class="dv">··</i>
<i class="dv">··</i>
<i class="dv">··</i>
<i class="dv">··</i>
<i class="dv">··</i>
<i class="dv">··</i>
<i class="dv">··</i>
<i class="dv">··</i>
<i class="dv">··</i>
<i class="dv">··</i>
<i class="dv">··</i>
<i class="cv">20</i>
<i class="dv">··</i>
<i class="dv">··</i>
<i class="dv">··</i>
<i class="cv">20</i>
<i class="dv">··</i>
<i class="dx">··</i>
<i class="dx">··</i>
<i class="dx">··</i>
<i class="dx">··</i>
<i class="dx">··</i>
<i class="dx">··</i>
<i class="dx">··</i>
<i class="dx">··</i>
<i class="dx">··</i>
<i class="dx">··</i>
<i class="pn">20</i>
<i class="dx">··</i>
<i class="dx">··</i></div>
<div class="t" style="left:89.5px;top:242.1px">



<i class="dx">·</i>
<i class="dx">·</i>
<i class="dx">·</i>
<i class="dx">·</i>
<i class="dx">·</i>
<i class="dx">·</i>
<i class="dx">·</i>
<i class="dx">·</i>
<i class="dx">·</i>
<i class="dx">·</i>
<i class="dx">·</i>
<i class="dx">·</i>
<i class="dx">·</i>
<i class="dx">·</i>
<i class="dx">·</i>
<i class="dx">·</i>
<i class="ct">F</i>
<i class="dt">·</i>
<i class="dt">·</i>
<i class="dt">·</i>
<i class="dt">·</i>
<i class="dt">·</i>
<i class="dt">·</i>
<i class="dt">·</i>
<i class="dt">·</i>
<i class="dt">·</i>
<i class="dt">·</i>
<i class="dt">·</i>
<i class="dt">·</i>
<i class="dt">·</i>
<i class="dt">·</i>
<i class="dt">·</i>
<i class="dt">·</i>
<i class="dt">·</i>
<i class="dt">·</i>
<i class="dt">·</i>
<i class="dt">·</i>
<i class="dt">·</i>
<i class="dt">·</i>
<i class="dt">·</i>
<i class="dt">·</i>
<i class="dt">·</i>
<i class="dt">·</i>
<i class="dt">·</i>
<i class="dt">·</i>
<i class="dt">·</i>
<i class="dt">·</i>
<i class="dt">·</i>
<i class="dt">·</i>
<i class="dt">·</i>
<i class="dt">·</i>
<i class="dt">·</i>
<i class="dt">·</i>
<i class="dt">·</i>
<i class="dt">·</i>
<i class="dt">·</i>
<i class="dt">·</i>
<i class="dt">·</i>
<i class="dt">·</i>
<i class="dt">·</i>
<i class="dt">·</i>
<i class="dt">·</i>
<i class="dt">·</i>
<i class="dt">·</i>
<i class="dt">·</i>
<i class="dt">·</i>
<i class="dt">·</i>
<i class="dt">·</i>
<i class="dt">·</i>
<i class="dt">·</i>
<i class="dt">·</i>
<i class="dt">·</i>
<i class="dt">·</i>
<i class="dt">·</i>
<i class="dt">·</i>
<i class="dt">·</i>
<i class="dt">·</i>
<i class="dt">·</i>
<i class="dt">·</i>
<i class="dt">·</i>
<i class="pn">F</i>
<i class="dx">·</i>
<i class="dx">·</i>
<i class="dx">·</i>
<i class="dx">·</i>
<i class="dx">·</i>
<i class="dx">·</i>
<i class="dx">·</i>
<i class="dx">·</i>
<i class="dx">·</i>
<i class="dx">·</i>
<i class="dx">·</i>
<i class="dx">·</i></div>
<div class="t" style="left:98.7px;top:242.1px">



<i class="dx">··</i>
<i class="dx">··</i>
<i class="dx">··</i>
<i class="dx">··</i>
<i class="dx">··</i>
<i class="dx">··</i>
<i class="dx">··</i>
<i class="dx">··</i>
<i class="dx">··</i>
<i class="dx">··</i>
<i class="dx">··</i>
<i class="dx">··</i>
<i class="dx">··</i>
<i class="dx">··</i>
<i class="dx">··</i>
<i class="dx">··</i>
<i class="cp">04</i>
<i class="dp">··</i>
<i class="dp">··</i>
<i class="dp">··</i>
<i class="dp">··</i>
<i class="dp">··</i>
<i class="dp">··</i>
<i class="dp">··</i>
<i class="dp">··</i>
<i class="dp">··</i>
<i class="dp">··</i>
<i class="dp">··</i>
<i class="dp">··</i>
<i class="dp">··</i>
<i class="dp">··</i>
<i class="dp">··</i>
<i class="dp">··</i>
<i class="dp">··</i>
<i class="dp">··</i>
<i class="dp">··</i>
<i class="dp">··</i>
<i class="dp">··</i>
<i class="dp">··</i>
<i class="dp">··</i>
<i class="dp">··</i>
<i class="dp">··</i>
<i class="dp">··</i>
<i class="dp">··</i>
<i class="dp">··</i>
<i class="dp">··</i>
<i class="dp">··</i>
<i class="dp">··</i>
<i class="dp">··</i>
<i class="dp">··</i>
<i class="dp">··</i>
<i class="dp">··</i>
<i class="dp">··</i>
<i class="dp">··</i>
<i class="dp">··</i>
<i class="dp">··</i>
<i class="dp">··</i>
<i class="dp">··</i>
<i class="dp">··</i>
<i class="dp">··</i>
<i class="dp">··</i>
<i class="dp">··</i>
<i class="dp">··</i>
<i class="dp">··</i>
<i class="dp">··</i>
<i class="dp">··</i>
<i class="dp">··</i>
<i class="dp">··</i>
<i class="dp">··</i>
<i class="dp">··</i>
<i class="dp">··</i>
<i class="dp">··</i>
<i class="dp">··</i>
<i class="dp">··</i>
<i class="dp">··</i>
<i class="dp">··</i>
<i class="dp">··</i>
<i class="dp">··</i>
<i class="dp">··</i>
<i class="dp">··</i>
<i class="pn">04</i>
<i class="dx">··</i>
<i class="dx">··</i>
<i class="dx">··</i>
<i class="dx">··</i>
<i class="dx">··</i>
<i class="dx">··</i>
<i class="dx">··</i>
<i class="dx">··</i>
<i class="dx">··</i>
<i class="dx">··</i>
<i class="dx">··</i>
<i class="dx">··</i></div>
<div class="t" style="left:117.5px;top:242.1px">



<i class="dx">···</i>
<i class="dx">···</i>
<i class="dx">···</i>
<i class="dx">···</i>
<i class="dx">···</i>
<i class="dx">···</i>
<i class="dx">···</i>
<i class="dx">···</i>
<i class="dx">···</i>
<i class="dx">···</i>
<i class="dx">···</i>
<i class="dx">···</i>
<i class="dx">···</i>
<i class="dx">···</i>
<i class="dx">···</i>
<i class="dx">···</i>
<i class="cn">C−3</i>
<i class="dn">···</i>
<i class="cn">C−3</i>
<i class="dn">···</i>
<i class="cn">C−3</i>
<i class="dn">···</i>
<i class="cn">C−3</i>
<i class="dn">···</i>
<i class="cn">C−2</i>
<i class="dn">···</i>
<i class="cn">C−3</i>
<i class="dn">···</i>
<i class="cn">C−3</i>
<i class="dn">···</i>
<i class="cn">C−3</i>
<i class="dn">···</i>
<i class="cn">C−3</i>
<i class="dn">···</i>
<i class="cn">C−3</i>
<i class="dn">···</i>
<i class="cn">C−2</i>
<i class="dn">···</i>
<i class="cn">C−3</i>
<i class="dn">···</i>
<i class="cn">C−3</i>
<i class="dn">···</i>
<i class="cn">C−2</i>
<i class="dn">···</i>
<i class="cn">C−3</i>
<i class="dn">···</i>
<i class="cn">C−2</i>
<i class="dn">···</i>
<i class="cn">C−3</i>
<i class="dn">···</i>
<i class="cn">C−3</i>
<i class="dn">···</i>
<i class="cn">C−3</i>
<i class="dn">···</i>
<i class="cn">C−3</i>
<i class="dn">···</i>
<i class="cn">C−2</i>
<i class="dn">···</i>
<i class="cn">C−3</i>
<i class="dn">···</i>
<i class="cn">C−3</i>
<i class="dn">···</i>
<i class="cn">C−3</i>
<i class="dn">···</i>
<i class="cn">C−3</i>
<i class="dn">···</i>
<i class="cn">C−3</i>
<i class="dn">···</i>
<i class="cn">C−2</i>
<i class="dn">···</i>
<i class="cn">C−3</i>
<i class="dn">···</i>
<i class="cn">C−3</i>
<i class="dn">···</i>
<i class="cn">C−2</i>
<i class="dn">···</i>
<i class="cn">C−3</i>
<i class="dn">···</i>
<i class="cn">C−2</i>
<i class="dn">···</i>
<i class="pn">C−3</i>
<i class="dx">···</i>
<i class="pn">C−3</i>
<i class="dx">···</i>
<i class="pn">C−3</i>
<i class="dx">···</i>
<i class="pn">C−3</i>
<i class="dx">···</i>
<i class="pn">C−2</i>
<i class="dx">···</i>
<i class="pn">C−3</i>
<i class="dx">···</i>
<i class="pn">C−3</i></div>
<div class="t" style="left:142.5px;top:242.1px">



<i class="dx">··</i>
<i class="dx">··</i>
<i class="dx">··</i>
<i class="dx">··</i>
<i class="dx">··</i>
<i class="dx">··</i>
<i class="dx">··</i>
<i class="dx">··</i>
<i class="dx">··</i>
<i class="dx">··</i>
<i class="dx">··</i>
<i class="dx">··</i>
<i class="dx">··</i>
<i class="dx">··</i>
<i class="dx">··</i>
<i class="dx">··</i>
<i class="di">·</i><i class="ci">5</i>
<i class="di">··</i>
<i class="di">·</i><i class="ci">5</i>
<i class="di">··</i>
<i class="di">·</i><i class="ci">5</i>
<i class="di">··</i>
<i class="di">·</i><i class="ci">5</i>
<i class="di">··</i>
<i class="di">·</i><i class="ci">5</i>
<i class="di">··</i>
<i class="di">·</i><i class="ci">5</i>
<i class="di">··</i>
<i class="di">·</i><i class="ci">5</i>
<i class="di">··</i>
<i class="di">·</i><i class="ci">5</i>
<i class="di">··</i>
<i class="di">·</i><i class="ci">5</i>
<i class="di">··</i>
<i class="di">·</i><i class="ci">5</i>
<i class="di">··</i>
<i class="di">·</i><i class="ci">5</i>
<i class="di">··</i>
<i class="di">·</i><i class="ci">5</i>
<i class="di">··</i>
<i class="di">·</i><i class="ci">5</i>
<i class="di">··</i>
<i class="di">·</i><i class="ci">5</i>
<i class="di">··</i>
<i class="di">·</i><i class="ci">5</i>
<i class="di">··</i>
<i class="di">·</i><i class="ci">5</i>
<i class="di">··</i>
<i class="di">·</i><i class="ci">5</i>
<i class="di">··</i>
<i class="di">·</i><i class="ci">5</i>
<i class="di">··</i>
<i class="di">·</i><i class="ci">5</i>
<i class="di">··</i>
<i class="di">·</i><i class="ci">5</i>
<i class="di">··</i>
<i class="di">·</i><i class="ci">5</i>
<i class="di">··</i>
<i class="di">·</i><i class="ci">5</i>
<i class="di">··</i>
<i class="di">·</i><i class="ci">5</i>
<i class="di">··</i>
<i class="di">·</i><i class="ci">5</i>
<i class="di">··</i>
<i class="di">·</i><i class="ci">5</i>
<i class="di">··</i>
<i class="di">·</i><i class="ci">5</i>
<i class="di">··</i>
<i class="di">·</i><i class="ci">5</i>
<i class="di">··</i>
<i class="di">·</i><i class="ci">5</i>
<i class="di">··</i>
<i class="di">·</i><i class="ci">5</i>
<i class="di">··</i>
<i class="di">·</i><i class="ci">5</i>
<i class="di">··</i>
<i class="di">·</i><i class="ci">5</i>
<i class="di">··</i>
<i class="di">·</i><i class="ci">5</i>
<i class="di">··</i>
<i class="dx">·</i><i class="pn">5</i>
<i class="dx">··</i>
<i class="dx">·</i><i class="pn">5</i>
<i class="dx">··</i>
<i class="dx">·</i><i class="pn">5</i>
<i class="dx">··</i>
<i class="dx">·</i><i class="pn">5</i>
<i class="dx">··</i>
<i class="dx">·</i><i class="pn">5</i>
<i class="dx">··</i>
<i class="dx">·</i><i class="pn">5</i>
<i class="dx">··</i>
<i class="dx">·</i><i class="pn">5</i></div>
<div class="t" style="left:159.5px;top:242.1px">



<i class="dx">··</i>
<i class="dx">··</i>
<i class="dx">··</i>
<i class="dx">··</i>
<i class="dx">··</i>
<i class="dx">··</i>
<i class="dx">··</i>
<i class="dx">··</i>
<i class="dx">··</i>
<i class="dx">··</i>
<i class="dx">··</i>
<i class="dx">··</i>
<i class="dx">··</i>
<i class="dx">··</i>
<i class="dx">··</i>
<i class="dx">··</i>
<i class="dv">··</i>
<i class="cv">20</i>
<i class="dv">··</i>
<i class="cv">30</i>
<i class="cv">20</i>
<i class="dv">··</i>
<i class="dv">··</i>
<i class="cv">30</i>
<i class="dv">··</i>
<i class="cv">20</i>
<i class="cv">20</i>
<i class="dv">··</i>
<i class="dv">··</i>
<i class="cv">20</i>
<i class="cv">20</i>
<i class="dv">··</i>
<i class="dv">··</i>
<i class="cv">20</i>
<i class="cv">20</i>
<i class="dv">··</i>
<i class="dv">··</i>
<i class="cv">20</i>
<i class="dv">··</i>
<i class="cv">30</i>
<i class="cv">20</i>
<i class="dv">··</i>
<i class="dv">··</i>
<i class="cv">30</i>
<i class="dv">··</i>
<i class="cv">20</i>
<i class="dv">··</i>
<i class="cv">30</i>
<i class="dv">··</i>
<i class="cv">20</i>
<i class="dv">··</i>
<i class="cv">30</i>
<i class="cv">20</i>
<i class="dv">··</i>
<i class="dv">··</i>
<i class="cv">30</i>
<i class="dv">··</i>
<i class="cv">20</i>
<i class="cv">20</i>
<i class="dv">··</i>
<i class="dv">··</i>
<i class="cv">20</i>
<i class="cv">20</i>
<i class="dv">··</i>
<i class="dv">··</i>
<i class="cv">20</i>
<i class="cv">20</i>
<i class="dv">··</i>
<i class="dv">··</i>
<i class="cv">20</i>
<i class="dv">··</i>
<i class="cv">30</i>
<i class="cv">20</i>
<i class="dv">··</i>
<i class="dv">··</i>
<i class="cv">30</i>
<i class="dv">··</i>
<i class="cv">20</i>
<i class="dv">··</i>
<i class="cv">30</i>
<i class="dx">··</i>
<i class="pn">20</i>
<i class="dx">··</i>
<i class="pn">30</i>
<i class="pn">20</i>
<i class="dx">··</i>
<i class="dx">··</i>
<i class="pn">30</i>
<i class="dx">··</i>
<i class="pn">20</i>
<i class="pn">20</i>
<i class="dx">··</i>
<i class="dx">··</i></div>
<div class="t" style="left:176.5px;top:242.1px">



<i class="dx">·</i>
<i class="dx">·</i>
<i class="dx">·</i>
<i class="dx">·</i>
<i class="dx">·</i>
<i class="dx">·</i>
<i class="dx">·</i>
<i class="dx">·</i>
<i class="dx">·</i>
<i class="dx">·</i>
<i class="dx">·</i>
<i class="dx">·</i>
<i class="dx">·</i>
<i class="dx">·</i>
<i class="dx">·</i>
<i class="dx">·</i>
<i class="dt">·</i>
<i class="dt">·</i>
<i class="dt">·</i>
<i class="dt">·</i>
<i class="dt">·</i>
<i class="dt">·</i>
<i class="dt">·</i>
<i class="dt">·</i>
<i class="dt">·</i>
<i class="dt">·</i>
<i class="dt">·</i>
<i class="dt">·</i>
<i class="dt">·</i>
<i class="dt">·</i>
<i class="dt">·</i>
<i class="dt">·</i>
<i class="dt">·</i>
<i class="dt">·</i>
<i class="dt">·</i>
<i class="dt">·</i>
<i class="dt">·</i>
<i class="dt">·</i>
<i class="dt">·</i>
<i class="dt">·</i>
<i class="dt">·</i>
<i class="dt">·</i>
<i class="dt">·</i>
<i class="dt">·</i>
<i class="dt">·</i>
<i class="dt">·</i>
<i class="dt">·</i>
<i class="dt">·</i>
<i class="dt">·</i>
<i class="dt">·</i>
<i class="dt">·</i>
<i class="dt">·</i>
<i class="dt">·</i>
<i class="dt">·</i>
<i class="dt">·</i>
<i class="dt">·</i>
<i class="dt">·</i>
<i class="dt">·</i>
<i class="dt">·</i>
<i class="dt">·</i>
<i class="dt">·</i>
<i class="dt">·</i>
<i class="dt">·</i>
<i class="dt">·</i>
<i class="dt">·</i>
<i class="dt">·</i>
<i class="dt">·</i>
<i class="dt">·</i>
<i class="dt">·</i>
<i class="dt">·</i>
<i class="dt">·</i>
<i class="dt">·</i>
<i class="dt">·</i>
<i class="dt">·</i>
<i class="dt">·</i>
<i class="dt">·</i>
<i class="dt">·</i>
<i class="dt">·</i>
<i class="dt">·</i>
<i class="dt">·</i>
<i class="dx">·</i>
<i class="dx">·</i>
<i class="dx">·</i>
<i class="dx">·</i>
<i class="dx">·</i>
<i class="dx">·</i>
<i class="dx">·</i>
<i class="dx">·</i>
<i class="dx">·</i>
<i class="dx">·</i>
<i class="dx">·</i>
<i class="dx">·</i>
<i class="dx">·</i></div>
<div class="t" style="left:185.7px;top:242.1px">



<i class="dx">··</i>
<i class="dx">··</i>
<i class="dx">··</i>
<i class="dx">··</i>
<i class="dx">··</i>
<i class="dx">··</i>
<i class="dx">··</i>
<i class="dx">··</i>
<i class="dx">··</i>
<i class="dx">··</i>
<i class="dx">··</i>
<i class="dx">··</i>
<i class="dx">··</i>
<i class="dx">··</i>
<i class="dx">··</i>
<i class="dx">··</i>
<i class="dp">··</i>
<i class="dp">··</i>
<i class="dp">··</i>
<i class="dp">··</i>
<i class="dp">··</i>
<i class="dp">··</i>
<i class="dp">··</i>
<i class="dp">··</i>
<i class="dp">··</i>
<i class="dp">··</i>
<i class="dp">··</i>
<i class="dp">··</i>
<i class="dp">··</i>
<i class="dp">··</i>
<i class="dp">··</i>
<i class="dp">··</i>
<i class="dp">··</i>
<i class="dp">··</i>
<i class="dp">··</i>
<i class="dp">··</i>
<i class="dp">··</i>
<i class="dp">··</i>
<i class="dp">··</i>
<i class="dp">··</i>
<i class="dp">··</i>
<i class="dp">··</i>
<i class="dp">··</i>
<i class="dp">··</i>
<i class="dp">··</i>
<i class="dp">··</i>
<i class="dp">··</i>
<i class="dp">··</i>
<i class="dp">··</i>
<i class="dp">··</i>
<i class="dp">··</i>
<i class="dp">··</i>
<i class="dp">··</i>
<i class="dp">··</i>
<i class="dp">··</i>
<i class="dp">··</i>
<i class="dp">··</i>
<i class="dp">··</i>
<i class="dp">··</i>
<i class="dp">··</i>
<i class="dp">··</i>
<i class="dp">··</i>
<i class="dp">··</i>
<i class="dp">··</i>
<i class="dp">··</i>
<i class="dp">··</i>
<i class="dp">··</i>
<i class="dp">··</i>
<i class="dp">··</i>
<i class="dp">··</i>
<i class="dp">··</i>
<i class="dp">··</i>
<i class="dp">··</i>
<i class="dp">··</i>
<i class="dp">··</i>
<i class="dp">··</i>
<i class="dp">··</i>
<i class="dp">··</i>
<i class="dp">··</i>
<i class="dp">··</i>
<i class="dx">··</i>
<i class="dx">··</i>
<i class="dx">··</i>
<i class="dx">··</i>
<i class="dx">··</i>
<i class="dx">··</i>
<i class="dx">··</i>
<i class="dx">··</i>
<i class="dx">··</i>
<i class="dx">··</i>
<i class="dx">··</i>
<i class="dx">··</i>
<i class="dx">··</i></div>
<div class="t" style="left:204.5px;top:242.1px">



<i class="dx">···</i>
<i class="dx">···</i>
<i class="dx">···</i>
<i class="dx">···</i>
<i class="dx">···</i>
<i class="dx">···</i>
<i class="dx">···</i>
<i class="dx">···</i>
<i class="dx">···</i>
<i class="dx">···</i>
<i class="dx">···</i>
<i class="dx">···</i>
<i class="dx">···</i>
<i class="dx">···</i>
<i class="dx">···</i>
<i class="dx">···</i>
<i class="cn">C−5</i>
<i class="dn">···</i>
<i class="cn">C−5</i>
<i class="dn">···</i>
<i class="cn">C−5</i>
<i class="dn">···</i>
<i class="cn">C−5</i>
<i class="dn">···</i>
<i class="cn">C−5</i>
<i class="dn">···</i>
<i class="cn">C−5</i>
<i class="dn">···</i>
<i class="cn">C−5</i>
<i class="dn">···</i>
<i class="cn">C−5</i>
<i class="dn">···</i>
<i class="cn">C−5</i>
<i class="dn">···</i>
<i class="cn">C−5</i>
<i class="dn">···</i>
<i class="cn">C−5</i>
<i class="dn">···</i>
<i class="cn">C−5</i>
<i class="dn">···</i>
<i class="cn">C−5</i>
<i class="dn">···</i>
<i class="cn">C−5</i>
<i class="dn">···</i>
<i class="cn">C−5</i>
<i class="dn">···</i>
<i class="cn">C−5</i>
<i class="cn">C−5</i>
<i class="cn">C−5</i>
<i class="dn">···</i>
<i class="cn">C−5</i>
<i class="dn">···</i>
<i class="cn">C−5</i>
<i class="dn">···</i>
<i class="cn">C−5</i>
<i class="dn">···</i>
<i class="cn">C−5</i>
<i class="dn">···</i>
<i class="cn">C−5</i>
<i class="dn">···</i>
<i class="cn">C−5</i>
<i class="dn">···</i>
<i class="cn">C−5</i>
<i class="dn">···</i>
<i class="cn">C−5</i>
<i class="dn">···</i>
<i class="cn">C−5</i>
<i class="dn">···</i>
<i class="cn">C−5</i>
<i class="dn">···</i>
<i class="cn">C−5</i>
<i class="dn">···</i>
<i class="cn">C−5</i>
<i class="dn">···</i>
<i class="cn">C−5</i>
<i class="dn">···</i>
<i class="cn">C−5</i>
<i class="dn">···</i>
<i class="cn">C−5</i>
<i class="dn">···</i>
<i class="pn">C−5</i>
<i class="dx">···</i>
<i class="pn">C−5</i>
<i class="dx">···</i>
<i class="pn">C−5</i>
<i class="dx">···</i>
<i class="pn">C−5</i>
<i class="dx">···</i>
<i class="pn">C−5</i>
<i class="dx">···</i>
<i class="pn">C−5</i>
<i class="dx">···</i>
<i class="pn">C−5</i></div>
<div class="t" style="left:229.5px;top:242.1px">



<i class="dx">··</i>
<i class="dx">··</i>
<i class="dx">··</i>
<i class="dx">··</i>
<i class="dx">··</i>
<i class="dx">··</i>
<i class="dx">··</i>
<i class="dx">··</i>
<i class="dx">··</i>
<i class="dx">··</i>
<i class="dx">··</i>
<i class="dx">··</i>
<i class="dx">··</i>
<i class="dx">··</i>
<i class="dx">··</i>
<i class="dx">··</i>
<i class="di">·</i><i class="ci">4</i>
<i class="di">··</i>
<i class="di">·</i><i class="ci">4</i>
<i class="di">··</i>
<i class="di">·</i><i class="ci">4</i>
<i class="di">··</i>
<i class="di">·</i><i class="ci">4</i>
<i class="di">··</i>
<i class="di">·</i><i class="ci">4</i>
<i class="di">··</i>
<i class="di">·</i><i class="ci">4</i>
<i class="di">··</i>
<i class="di">·</i><i class="ci">4</i>
<i class="di">··</i>
<i class="di">·</i><i class="ci">4</i>
<i class="di">··</i>
<i class="di">·</i><i class="ci">4</i>
<i class="di">··</i>
<i class="di">·</i><i class="ci">4</i>
<i class="di">··</i>
<i class="di">·</i><i class="ci">4</i>
<i class="di">··</i>
<i class="di">·</i><i class="ci">4</i>
<i class="di">··</i>
<i class="di">·</i><i class="ci">4</i>
<i class="di">··</i>
<i class="di">·</i><i class="ci">4</i>
<i class="di">··</i>
<i class="di">·</i><i class="ci">4</i>
<i class="di">··</i>
<i class="di">·</i><i class="ci">4</i>
<i class="di">·</i><i class="ci">4</i>
<i class="di">·</i><i class="ci">4</i>
<i class="di">··</i>
<i class="di">·</i><i class="ci">4</i>
<i class="di">··</i>
<i class="di">·</i><i class="ci">4</i>
<i class="di">··</i>
<i class="di">·</i><i class="ci">4</i>
<i class="di">··</i>
<i class="di">·</i><i class="ci">4</i>
<i class="di">··</i>
<i class="di">·</i><i class="ci">4</i>
<i class="di">··</i>
<i class="di">·</i><i class="ci">4</i>
<i class="di">··</i>
<i class="di">·</i><i class="ci">4</i>
<i class="di">··</i>
<i class="di">·</i><i class="ci">4</i>
<i class="di">··</i>
<i class="di">·</i><i class="ci">4</i>
<i class="di">··</i>
<i class="di">·</i><i class="ci">4</i>
<i class="di">··</i>
<i class="di">·</i><i class="ci">4</i>
<i class="di">··</i>
<i class="di">·</i><i class="ci">4</i>
<i class="di">··</i>
<i class="di">·</i><i class="ci">4</i>
<i class="di">··</i>
<i class="di">·</i><i class="ci">4</i>
<i class="di">··</i>
<i class="di">·</i><i class="ci">4</i>
<i class="di">··</i>
<i class="dx">·</i><i class="pn">4</i>
<i class="dx">··</i>
<i class="dx">·</i><i class="pn">4</i>
<i class="dx">··</i>
<i class="dx">·</i><i class="pn">4</i>
<i class="dx">··</i>
<i class="dx">·</i><i class="pn">4</i>
<i class="dx">··</i>
<i class="dx">·</i><i class="pn">4</i>
<i class="dx">··</i>
<i class="dx">·</i><i class="pn">4</i>
<i class="dx">··</i>
<i class="dx">·</i><i class="pn">4</i></div>
<div class="t" style="left:246.5px;top:242.1px">



<i class="dx">··</i>
<i class="dx">··</i>
<i class="dx">··</i>
<i class="dx">··</i>
<i class="dx">··</i>
<i class="dx">··</i>
<i class="dx">··</i>
<i class="dx">··</i>
<i class="dx">··</i>
<i class="dx">··</i>
<i class="dx">··</i>
<i class="dx">··</i>
<i class="dx">··</i>
<i class="dx">··</i>
<i class="dx">··</i>
<i class="dx">··</i>
<i class="dv">··</i>
<i class="dv">··</i>
<i class="cv">10</i>
<i class="dv">··</i>
<i class="dv">··</i>
<i class="dv">··</i>
<i class="cv">10</i>
<i class="dv">··</i>
<i class="dv">··</i>
<i class="dv">··</i>
<i class="cv">10</i>
<i class="dv">··</i>
<i class="dv">··</i>
<i class="dv">··</i>
<i class="cv">10</i>
<i class="dv">··</i>
<i class="dv">··</i>
<i class="dv">··</i>
<i class="cv">10</i>
<i class="dv">··</i>
<i class="dv">··</i>
<i class="dv">··</i>
<i class="cv">10</i>
<i class="dv">··</i>
<i class="dv">··</i>
<i class="dv">··</i>
<i class="cv">10</i>
<i class="dv">··</i>
<i class="dv">··</i>
<i class="dv">··</i>
<i class="cv">10</i>
<i class="cv">12</i>
<i class="dv">··</i>
<i class="dv">··</i>
<i class="cv">10</i>
<i class="dv">··</i>
<i class="dv">··</i>
<i class="dv">··</i>
<i class="cv">10</i>
<i class="dv">··</i>
<i class="dv">··</i>
<i class="dv">··</i>
<i class="cv">10</i>
<i class="dv">··</i>
<i class="dv">··</i>
<i class="dv">··</i>
<i class="cv">10</i>
<i class="dv">··</i>
<i class="dv">··</i>
<i class="dv">··</i>
<i class="cv">10</i>
<i class="dv">··</i>
<i class="dv">··</i>
<i class="dv">··</i>
<i class="cv">10</i>
<i class="dv">··</i>
<i class="dv">··</i>
<i class="dv">··</i>
<i class="cv">10</i>
<i class="dv">··</i>
<i class="dv">··</i>
<i class="dv">··</i>
<i class="cv">10</i>
<i class="dv">··</i>
<i class="dx">··</i>
<i class="dx">··</i>
<i class="pn">10</i>
<i class="dx">··</i>
<i class="dx">··</i>
<i class="dx">··</i>
<i class="pn">10</i>
<i class="dx">··</i>
<i class="dx">··</i>
<i class="dx">··</i>
<i class="pn">10</i>
<i class="dx">··</i>
<i class="dx">··</i></div>
<div class="t" style="left:263.5px;top:242.1px">



<i class="dx">·</i>
<i class="dx">·</i>
<i class="dx">·</i>
<i class="dx">·</i>
<i class="dx">·</i>
<i class="dx">·</i>
<i class="dx">·</i>
<i class="dx">·</i>
<i class="dx">·</i>
<i class="dx">·</i>
<i class="dx">·</i>
<i class="dx">·</i>
<i class="dx">·</i>
<i class="dx">·</i>
<i class="dx">·</i>
<i class="dx">·</i>
<i class="dt">·</i>
<i class="dt">·</i>
<i class="dt">·</i>
<i class="dt">·</i>
<i class="dt">·</i>
<i class="dt">·</i>
<i class="dt">·</i>
<i class="dt">·</i>
<i class="dt">·</i>
<i class="dt">·</i>
<i class="dt">·</i>
<i class="dt">·</i>
<i class="dt">·</i>
<i class="dt">·</i>
<i class="dt">·</i>
<i class="dt">·</i>
<i class="dt">·</i>
<i class="dt">·</i>
<i class="dt">·</i>
<i class="dt">·</i>
<i class="dt">·</i>
<i class="dt">·</i>
<i class="dt">·</i>
<i class="dt">·</i>
<i class="dt">·</i>
<i class="dt">·</i>
<i class="dt">·</i>
<i class="dt">·</i>
<i class="dt">·</i>
<i class="dt">·</i>
<i class="dt">·</i>
<i class="dt">·</i>
<i class="dt">·</i>
<i class="dt">·</i>
<i class="dt">·</i>
<i class="dt">·</i>
<i class="dt">·</i>
<i class="dt">·</i>
<i class="dt">·</i>
<i class="dt">·</i>
<i class="dt">·</i>
<i class="dt">·</i>
<i class="dt">·</i>
<i class="dt">·</i>
<i class="dt">·</i>
<i class="dt">·</i>
<i class="dt">·</i>
<i class="dt">·</i>
<i class="dt">·</i>
<i class="dt">·</i>
<i class="dt">·</i>
<i class="dt">·</i>
<i class="dt">·</i>
<i class="dt">·</i>
<i class="dt">·</i>
<i class="dt">·</i>
<i class="dt">·</i>
<i class="dt">·</i>
<i class="dt">·</i>
<i class="dt">·</i>
<i class="dt">·</i>
<i class="dt">·</i>
<i class="dt">·</i>
<i class="dt">·</i>
<i class="dx">·</i>
<i class="dx">·</i>
<i class="dx">·</i>
<i class="dx">·</i>
<i class="dx">·</i>
<i class="dx">·</i>
<i class="dx">·</i>
<i class="dx">·</i>
<i class="dx">·</i>
<i class="dx">·</i>
<i class="dx">·</i>
<i class="dx">·</i>
<i class="dx">·</i></div>
<div class="t" style="left:272.7px;top:242.1px">



<i class="dx">··</i>
<i class="dx">··</i>
<i class="dx">··</i>
<i class="dx">··</i>
<i class="dx">··</i>
<i class="dx">··</i>
<i class="dx">··</i>
<i class="dx">··</i>
<i class="dx">··</i>
<i class="dx">··</i>
<i class="dx">··</i>
<i class="dx">··</i>
<i class="dx">··</i>
<i class="dx">··</i>
<i class="dx">··</i>
<i class="dx">··</i>
<i class="dp">··</i>
<i class="dp">··</i>
<i class="dp">··</i>
<i class="dp">··</i>
<i class="dp">··</i>
<i class="dp">··</i>
<i class="dp">··</i>
<i class="dp">··</i>
<i class="dp">··</i>
<i class="dp">··</i>
<i class="dp">··</i>
<i class="dp">··</i>
<i class="dp">··</i>
<i class="dp">··</i>
<i class="dp">··</i>
<i class="dp">··</i>
<i class="dp">··</i>
<i class="dp">··</i>
<i class="dp">··</i>
<i class="dp">··</i>
<i class="dp">··</i>
<i class="dp">··</i>
<i class="dp">··</i>
<i class="dp">··</i>
<i class="dp">··</i>
<i class="dp">··</i>
<i class="dp">··</i>
<i class="dp">··</i>
<i class="dp">··</i>
<i class="dp">··</i>
<i class="dp">··</i>
<i class="dp">··</i>
<i class="dp">··</i>
<i class="dp">··</i>
<i class="dp">··</i>
<i class="dp">··</i>
<i class="dp">··</i>
<i class="dp">··</i>
<i class="dp">··</i>
<i class="dp">··</i>
<i class="dp">··</i>
<i class="dp">··</i>
<i class="dp">··</i>
<i class="dp">··</i>
<i class="dp">··</i>
<i class="dp">··</i>
<i class="dp">··</i>
<i class="dp">··</i>
<i class="dp">··</i>
<i class="dp">··</i>
<i class="dp">··</i>
<i class="dp">··</i>
<i class="dp">··</i>
<i class="dp">··</i>
<i class="dp">··</i>
<i class="dp">··</i>
<i class="dp">··</i>
<i class="dp">··</i>
<i class="dp">··</i>
<i class="dp">··</i>
<i class="dp">··</i>
<i class="dp">··</i>
<i class="dp">··</i>
<i class="dp">··</i>
<i class="dx">··</i>
<i class="dx">··</i>
<i class="dx">··</i>
<i class="dx">··</i>
<i class="dx">··</i>
<i class="dx">··</i>
<i class="dx">··</i>
<i class="dx">··</i>
<i class="dx">··</i>
<i class="dx">··</i>
<i class="dx">··</i>
<i class="dx">··</i>
<i class="dx">··</i></div>
<div class="t" style="left:291.5px;top:242.1px">



<i class="pn">C−5</i>
<i class="dx">···</i>
<i class="dx">···</i>
<i class="dx">···</i>
<i class="pn">C−5</i>
<i class="dx">···</i>
<i class="pn">C−5</i>
<i class="pn">C−5</i>
<i class="pn">C−5</i>
<i class="dx">···</i>
<i class="dx">···</i>
<i class="dx">···</i>
<i class="pn">C−5</i>
<i class="dx">···</i>
<i class="dx">···</i>
<i class="dx">···</i>

<i class="dn">···</i>
<i class="dn">···</i>
<i class="dn">···</i>
<i class="dn">···</i>
<i class="dn">···</i>
<i class="dn">···</i>
<i class="dn">···</i>
<i class="dn">···</i>
<i class="dn">···</i>
<i class="dn">···</i>
<i class="dn">···</i>
<i class="dn">···</i>
<i class="dn">···</i>
<i class="dn">···</i>
<i class="dn">···</i>
<i class="dn">···</i>
<i class="dn">···</i>
<i class="dn">···</i>
<i class="dn">···</i>
<i class="dn">···</i>
<i class="dn">···</i>
<i class="dn">···</i>
<i class="dn">···</i>
<i class="dn">···</i>
<i class="dn">···</i>
<i class="dn">···</i>
<i class="dn">···</i>
<i class="dn">···</i>
<i class="dn">···</i>
<i class="dn">···</i>
<i class="dn">···</i>
<i class="dn">···</i>
<i class="dn">···</i>
<i class="dn">···</i>
<i class="dn">···</i>
<i class="dn">···</i>
<i class="dn">···</i>
<i class="dn">···</i>
<i class="dn">···</i>
<i class="dn">···</i>
<i class="dn">···</i>
<i class="dn">···</i>
<i class="dn">···</i>
<i class="dn">···</i>
<i class="dn">···</i>
<i class="dn">···</i>
<i class="dn">···</i>
<i class="dn">···</i>
<i class="dn">···</i>
<i class="dn">···</i>
<i class="dn">···</i>
<i class="dn">···</i>
<i class="dn">···</i>
<i class="dn">···</i>
<i class="dn">···</i>
<i class="dn">···</i>
<i class="dn">···</i>
<i class="dn">···</i>
<i class="dn">···</i>
<i class="dn">···</i>
<i class="dn">···</i>
<i class="dn">···</i>
<i class="dn">···</i>
<i class="dx">···</i>
<i class="dx">···</i>
<i class="dx">···</i>
<i class="dx">···</i>
<i class="dx">···</i>
<i class="dx">···</i>
<i class="dx">···</i>
<i class="dx">···</i>
<i class="dx">···</i>
<i class="dx">···</i>
<i class="dx">···</i>
<i class="dx">···</i>
<i class="dx">···</i></div>
<div class="t" style="left:316.5px;top:242.1px">



<i class="dx">·</i><i class="pn">4</i>
<i class="dx">··</i>
<i class="dx">··</i>
<i class="dx">··</i>
<i class="dx">·</i><i class="pn">4</i>
<i class="dx">··</i>
<i class="dx">·</i><i class="pn">4</i>
<i class="dx">·</i><i class="pn">4</i>
<i class="dx">·</i><i class="pn">4</i>
<i class="dx">··</i>
<i class="dx">··</i>
<i class="dx">··</i>
<i class="dx">·</i><i class="pn">4</i>
<i class="dx">··</i>
<i class="dx">··</i>
<i class="dx">··</i>
<i class="di">··</i>
<i class="di">··</i>
<i class="di">··</i>
<i class="di">··</i>
<i class="di">··</i>
<i class="di">··</i>
<i class="di">··</i>
<i class="di">··</i>
<i class="di">··</i>
<i class="di">··</i>
<i class="di">··</i>
<i class="di">··</i>
<i class="di">··</i>
<i class="di">··</i>
<i class="di">··</i>
<i class="di">··</i>
<i class="di">··</i>
<i class="di">··</i>
<i class="di">··</i>
<i class="di">··</i>
<i class="di">··</i>
<i class="di">··</i>
<i class="di">··</i>
<i class="di">··</i>
<i class="di">··</i>
<i class="di">··</i>
<i class="di">··</i>
<i class="di">··</i>
<i class="di">··</i>
<i class="di">··</i>
<i class="di">··</i>
<i class="di">··</i>
<i class="di">··</i>
<i class="di">··</i>
<i class="di">··</i>
<i class="di">··</i>
<i class="di">··</i>
<i class="di">··</i>
<i class="di">··</i>
<i class="di">··</i>
<i class="di">··</i>
<i class="di">··</i>
<i class="di">··</i>
<i class="di">··</i>
<i class="di">··</i>
<i class="di">··</i>
<i class="di">··</i>
<i class="di">··</i>
<i class="di">··</i>
<i class="di">··</i>
<i class="di">··</i>
<i class="di">··</i>
<i class="di">··</i>
<i class="di">··</i>
<i class="di">··</i>
<i class="di">··</i>
<i class="di">··</i>
<i class="di">··</i>
<i class="di">··</i>
<i class="di">··</i>
<i class="di">··</i>
<i class="di">··</i>
<i class="di">··</i>
<i class="di">··</i>
<i class="dx">··</i>
<i class="dx">··</i>
<i class="dx">··</i>
<i class="dx">··</i>
<i class="dx">··</i>
<i class="dx">··</i>
<i class="dx">··</i>
<i class="dx">··</i>
<i class="dx">··</i>
<i class="dx">··</i>
<i class="dx">··</i>
<i class="dx">··</i>
<i class="dx">··</i></div>
<div class="t" style="left:333.5px;top:242.1px">



<i class="dx">··</i>
<i class="dx">··</i>
<i class="dx">··</i>
<i class="dx">··</i>
<i class="dx">··</i>
<i class="dx">··</i>
<i class="pn">10</i>
<i class="pn">20</i>
<i class="dx">··</i>
<i class="dx">··</i>
<i class="dx">··</i>
<i class="dx">··</i>
<i class="dx">··</i>
<i class="dx">··</i>
<i class="dx">··</i>
<i class="dx">··</i>
<i class="dv">··</i>
<i class="dv">··</i>
<i class="dv">··</i>
<i class="dv">··</i>
<i class="dv">··</i>
<i class="dv">··</i>
<i class="dv">··</i>
<i class="dv">··</i>
<i class="dv">··</i>
<i class="dv">··</i>
<i class="dv">··</i>
<i class="dv">··</i>
<i class="dv">··</i>
<i class="dv">··</i>
<i class="dv">··</i>
<i class="dv">··</i>
<i class="dv">··</i>
<i class="dv">··</i>
<i class="dv">··</i>
<i class="dv">··</i>
<i class="dv">··</i>
<i class="dv">··</i>
<i class="dv">··</i>
<i class="dv">··</i>
<i class="dv">··</i>
<i class="dv">··</i>
<i class="dv">··</i>
<i class="dv">··</i>
<i class="dv">··</i>
<i class="dv">··</i>
<i class="dv">··</i>
<i class="dv">··</i>
<i class="dv">··</i>
<i class="dv">··</i>
<i class="dv">··</i>
<i class="dv">··</i>
<i class="dv">··</i>
<i class="dv">··</i>
<i class="dv">··</i>
<i class="dv">··</i>
<i class="dv">··</i>
<i class="dv">··</i>
<i class="dv">··</i>
<i class="dv">··</i>
<i class="dv">··</i>
<i class="dv">··</i>
<i class="dv">··</i>
<i class="dv">··</i>
<i class="dv">··</i>
<i class="dv">··</i>
<i class="dv">··</i>
<i class="dv">··</i>
<i class="dv">··</i>
<i class="dv">··</i>
<i class="dv">··</i>
<i class="dv">··</i>
<i class="dv">··</i>
<i class="dv">··</i>
<i class="dv">··</i>
<i class="dv">··</i>
<i class="dv">··</i>
<i class="dv">··</i>
<i class="dv">··</i>
<i class="dv">··</i>
<i class="dx">··</i>
<i class="dx">··</i>
<i class="dx">··</i>
<i class="dx">··</i>
<i class="dx">··</i>
<i class="dx">··</i>
<i class="dx">··</i>
<i class="dx">··</i>
<i class="dx">··</i>
<i class="dx">··</i>
<i class="dx">··</i>
<i class="dx">··</i>
<i class="dx">··</i></div>
<div class="t" style="left:350.5px;top:242.1px">



<i class="dx">·</i>
<i class="dx">·</i>
<i class="dx">·</i>
<i class="dx">·</i>
<i class="dx">·</i>
<i class="dx">·</i>
<i class="dx">·</i>
<i class="dx">·</i>
<i class="dx">·</i>
<i class="dx">·</i>
<i class="dx">·</i>
<i class="dx">·</i>
<i class="dx">·</i>
<i class="dx">·</i>
<i class="dx">·</i>
<i class="dx">·</i>
<i class="dt">·</i>
<i class="dt">·</i>
<i class="dt">·</i>
<i class="dt">·</i>
<i class="dt">·</i>
<i class="dt">·</i>
<i class="dt">·</i>
<i class="dt">·</i>
<i class="dt">·</i>
<i class="dt">·</i>
<i class="dt">·</i>
<i class="dt">·</i>
<i class="dt">·</i>
<i class="dt">·</i>
<i class="dt">·</i>
<i class="dt">·</i>
<i class="dt">·</i>
<i class="dt">·</i>
<i class="dt">·</i>
<i class="dt">·</i>
<i class="dt">·</i>
<i class="dt">·</i>
<i class="dt">·</i>
<i class="dt">·</i>
<i class="dt">·</i>
<i class="dt">·</i>
<i class="dt">·</i>
<i class="dt">·</i>
<i class="dt">·</i>
<i class="dt">·</i>
<i class="dt">·</i>
<i class="dt">·</i>
<i class="dt">·</i>
<i class="dt">·</i>
<i class="dt">·</i>
<i class="dt">·</i>
<i class="dt">·</i>
<i class="dt">·</i>
<i class="dt">·</i>
<i class="dt">·</i>
<i class="dt">·</i>
<i class="dt">·</i>
<i class="dt">·</i>
<i class="dt">·</i>
<i class="dt">·</i>
<i class="dt">·</i>
<i class="dt">·</i>
<i class="dt">·</i>
<i class="dt">·</i>
<i class="dt">·</i>
<i class="dt">·</i>
<i class="dt">·</i>
<i class="dt">·</i>
<i class="dt">·</i>
<i class="dt">·</i>
<i class="dt">·</i>
<i class="dt">·</i>
<i class="dt">·</i>
<i class="dt">·</i>
<i class="dt">·</i>
<i class="dt">·</i>
<i class="dt">·</i>
<i class="dt">·</i>
<i class="dt">·</i>
<i class="dx">·</i>
<i class="dx">·</i>
<i class="dx">·</i>
<i class="dx">·</i>
<i class="dx">·</i>
<i class="dx">·</i>
<i class="dx">·</i>
<i class="dx">·</i>
<i class="dx">·</i>
<i class="dx">·</i>
<i class="dx">·</i>
<i class="dx">·</i>
<i class="dx">·</i></div>
<div class="t" style="left:359.7px;top:242.1px">



<i class="dx">··</i>
<i class="dx">··</i>
<i class="dx">··</i>
<i class="dx">··</i>
<i class="dx">··</i>
<i class="dx">··</i>
<i class="dx">··</i>
<i class="dx">··</i>
<i class="dx">··</i>
<i class="dx">··</i>
<i class="dx">··</i>
<i class="dx">··</i>
<i class="dx">··</i>
<i class="dx">··</i>
<i class="dx">··</i>
<i class="dx">··</i>
<i class="dp">··</i>
<i class="dp">··</i>
<i class="dp">··</i>
<i class="dp">··</i>
<i class="dp">··</i>
<i class="dp">··</i>
<i class="dp">··</i>
<i class="dp">··</i>
<i class="dp">··</i>
<i class="dp">··</i>
<i class="dp">··</i>
<i class="dp">··</i>
<i class="dp">··</i>
<i class="dp">··</i>
<i class="dp">··</i>
<i class="dp">··</i>
<i class="dp">··</i>
<i class="dp">··</i>
<i class="dp">··</i>
<i class="dp">··</i>
<i class="dp">··</i>
<i class="dp">··</i>
<i class="dp">··</i>
<i class="dp">··</i>
<i class="dp">··</i>
<i class="dp">··</i>
<i class="dp">··</i>
<i class="dp">··</i>
<i class="dp">··</i>
<i class="dp">··</i>
<i class="dp">··</i>
<i class="dp">··</i>
<i class="dp">··</i>
<i class="dp">··</i>
<i class="dp">··</i>
<i class="dp">··</i>
<i class="dp">··</i>
<i class="dp">··</i>
<i class="dp">··</i>
<i class="dp">··</i>
<i class="dp">··</i>
<i class="dp">··</i>
<i class="dp">··</i>
<i class="dp">··</i>
<i class="dp">··</i>
<i class="dp">··</i>
<i class="dp">··</i>
<i class="dp">··</i>
<i class="dp">··</i>
<i class="dp">··</i>
<i class="dp">··</i>
<i class="dp">··</i>
<i class="dp">··</i>
<i class="dp">··</i>
<i class="dp">··</i>
<i class="dp">··</i>
<i class="dp">··</i>
<i class="dp">··</i>
<i class="dp">··</i>
<i class="dp">··</i>
<i class="dp">··</i>
<i class="dp">··</i>
<i class="dp">··</i>
<i class="dp">··</i>
<i class="dx">··</i>
<i class="dx">··</i>
<i class="dx">··</i>
<i class="dx">··</i>
<i class="dx">··</i>
<i class="dx">··</i>
<i class="dx">··</i>
<i class="dx">··</i>
<i class="dx">··</i>
<i class="dx">··</i>
<i class="dx">··</i>
<i class="dx">··</i>
<i class="dx">··</i></div>
<div class="t" style="left:378.5px;top:242.1px">



<i class="dx">···</i>
<i class="dx">···</i>
<i class="dx">···</i>
<i class="dx">···</i>
<i class="dx">···</i>
<i class="dx">···</i>
<i class="dx">···</i>
<i class="dx">···</i>
<i class="dx">···</i>
<i class="dx">···</i>
<i class="dx">···</i>
<i class="dx">···</i>
<i class="dx">···</i>
<i class="dx">···</i>
<i class="dx">···</i>
<i class="dx">···</i>
<i class="cn">C−4</i>
<i class="dn">···</i>
<i class="cn">C−3</i>
<i class="dn">···</i>
<i class="cn">C−3</i>
<i class="dn">···</i>
<i class="cn">C−4</i>
<i class="dn">···</i>
<i class="cn">C−3</i>
<i class="dn">···</i>
<i class="cn">C−3</i>
<i class="dn">···</i>
<i class="cn">C−4</i>
<i class="cn">C−5</i>
<i class="cn">C−3</i>
<i class="dn">···</i>
<i class="cn">C−4</i>
<i class="dn">···</i>
<i class="cn">C−3</i>
<i class="dn">···</i>
<i class="cn">C−3</i>
<i class="dn">···</i>
<i class="cn">C−4</i>
<i class="dn">···</i>
<i class="cn">C−3</i>
<i class="dn">···</i>
<i class="cn">C−3</i>
<i class="dn">···</i>
<i class="cn">C−4</i>
<i class="cn">C−5</i>
<i class="cn">C−3</i>
<i class="dn">···</i>
<i class="cn">C−4</i>
<i class="dn">···</i>
<i class="cn">C−3</i>
<i class="dn">···</i>
<i class="cn">C−3</i>
<i class="dn">···</i>
<i class="cn">C−4</i>
<i class="dn">···</i>
<i class="cn">C−3</i>
<i class="dn">···</i>
<i class="cn">C−3</i>
<i class="dn">···</i>
<i class="cn">C−4</i>
<i class="cn">C−5</i>
<i class="cn">C−3</i>
<i class="dn">···</i>
<i class="cn">C−4</i>
<i class="dn">···</i>
<i class="cn">C−3</i>
<i class="dn">···</i>
<i class="cn">C−3</i>
<i class="dn">···</i>
<i class="cn">C−4</i>
<i class="dn">···</i>
<i class="cn">C−3</i>
<i class="dn">···</i>
<i class="cn">C−3</i>
<i class="dn">···</i>
<i class="cn">C−4</i>
<i class="cn">C−5</i>
<i class="cn">C−3</i>
<i class="dn">···</i>
<i class="pn">C−4</i>
<i class="dx">···</i>
<i class="pn">C−3</i>
<i class="dx">···</i>
<i class="pn">C−3</i>
<i class="dx">···</i>
<i class="pn">C−4</i>
<i class="dx">···</i>
<i class="pn">C−3</i>
<i class="dx">···</i>
<i class="pn">C−3</i>
<i class="dx">···</i>
<i class="pn">C−4</i></div>
<div class="t" style="left:403.5px;top:242.1px">



<i class="dx">··</i>
<i class="dx">··</i>
<i class="dx">··</i>
<i class="dx">··</i>
<i class="dx">··</i>
<i class="dx">··</i>
<i class="dx">··</i>
<i class="dx">··</i>
<i class="dx">··</i>
<i class="dx">··</i>
<i class="dx">··</i>
<i class="dx">··</i>
<i class="dx">··</i>
<i class="dx">··</i>
<i class="dx">··</i>
<i class="dx">··</i>
<i class="di">·</i><i class="ci">F</i>
<i class="di">··</i>
<i class="di">·</i><i class="ci">F</i>
<i class="di">··</i>
<i class="di">·</i><i class="ci">F</i>
<i class="di">··</i>
<i class="di">·</i><i class="ci">F</i>
<i class="di">··</i>
<i class="di">·</i><i class="ci">F</i>
<i class="di">··</i>
<i class="di">·</i><i class="ci">F</i>
<i class="di">··</i>
<i class="di">·</i><i class="ci">F</i>
<i class="di">·</i><i class="ci">F</i>
<i class="di">·</i><i class="ci">F</i>
<i class="di">··</i>
<i class="di">·</i><i class="ci">F</i>
<i class="di">··</i>
<i class="di">·</i><i class="ci">F</i>
<i class="di">··</i>
<i class="di">·</i><i class="ci">F</i>
<i class="di">··</i>
<i class="di">·</i><i class="ci">F</i>
<i class="di">··</i>
<i class="di">·</i><i class="ci">F</i>
<i class="di">··</i>
<i class="di">·</i><i class="ci">F</i>
<i class="di">··</i>
<i class="di">·</i><i class="ci">F</i>
<i class="di">·</i><i class="ci">F</i>
<i class="di">·</i><i class="ci">F</i>
<i class="di">··</i>
<i class="di">·</i><i class="ci">F</i>
<i class="di">··</i>
<i class="di">·</i><i class="ci">F</i>
<i class="di">··</i>
<i class="di">·</i><i class="ci">F</i>
<i class="di">··</i>
<i class="di">·</i><i class="ci">F</i>
<i class="di">··</i>
<i class="di">·</i><i class="ci">F</i>
<i class="di">··</i>
<i class="di">·</i><i class="ci">F</i>
<i class="di">··</i>
<i class="di">·</i><i class="ci">F</i>
<i class="di">·</i><i class="ci">F</i>
<i class="di">·</i><i class="ci">F</i>
<i class="di">··</i>
<i class="di">·</i><i class="ci">F</i>
<i class="di">··</i>
<i class="di">·</i><i class="ci">F</i>
<i class="di">··</i>
<i class="di">·</i><i class="ci">F</i>
<i class="di">··</i>
<i class="di">·</i><i class="ci">F</i>
<i class="di">··</i>
<i class="di">·</i><i class="ci">F</i>
<i class="di">··</i>
<i class="di">·</i><i class="ci">F</i>
<i class="di">··</i>
<i class="di">·</i><i class="ci">F</i>
<i class="di">·</i><i class="ci">F</i>
<i class="di">·</i><i class="ci">F</i>
<i class="di">··</i>
<i class="dx">·</i><i class="pn">F</i>
<i class="dx">··</i>
<i class="dx">·</i><i class="pn">F</i>
<i class="dx">··</i>
<i class="dx">·</i><i class="pn">F</i>
<i class="dx">··</i>
<i class="dx">·</i><i class="pn">F</i>
<i class="dx">··</i>
<i class="dx">·</i><i class="pn">F</i>
<i class="dx">··</i>
<i class="dx">·</i><i class="pn">F</i>
<i class="dx">··</i>
<i class="dx">·</i><i class="pn">F</i></div>
<div class="t" style="left:420.5px;top:242.1px">



<i class="dx">··</i>
<i class="dx">··</i>
<i class="dx">··</i>
<i class="dx">··</i>
<i class="dx">··</i>
<i class="dx">··</i>
<i class="dx">··</i>
<i class="dx">··</i>
<i class="dx">··</i>
<i class="dx">··</i>
<i class="dx">··</i>
<i class="dx">··</i>
<i class="dx">··</i>
<i class="dx">··</i>
<i class="dx">··</i>
<i class="dx">··</i>
<i class="cv">25</i>
<i class="dv">··</i>
<i class="cv">25</i>
<i class="dv">··</i>
<i class="cv">25</i>
<i class="dv">··</i>
<i class="cv">25</i>
<i class="dv">··</i>
<i class="cv">25</i>
<i class="dv">··</i>
<i class="cv">25</i>
<i class="dv">··</i>
<i class="cv">25</i>
<i class="cv">1A</i>
<i class="cv">25</i>
<i class="dv">··</i>
<i class="cv">25</i>
<i class="dv">··</i>
<i class="cv">25</i>
<i class="dv">··</i>
<i class="cv">25</i>
<i class="dv">··</i>
<i class="cv">25</i>
<i class="dv">··</i>
<i class="cv">25</i>
<i class="dv">··</i>
<i class="cv">25</i>
<i class="dv">··</i>
<i class="cv">25</i>
<i class="cv">1A</i>
<i class="cv">25</i>
<i class="dv">··</i>
<i class="cv">25</i>
<i class="dv">··</i>
<i class="cv">25</i>
<i class="dv">··</i>
<i class="cv">25</i>
<i class="dv">··</i>
<i class="cv">25</i>
<i class="dv">··</i>
<i class="cv">25</i>
<i class="dv">··</i>
<i class="cv">25</i>
<i class="dv">··</i>
<i class="cv">25</i>
<i class="cv">1A</i>
<i class="cv">25</i>
<i class="dv">··</i>
<i class="cv">25</i>
<i class="dv">··</i>
<i class="cv">25</i>
<i class="dv">··</i>
<i class="cv">25</i>
<i class="dv">··</i>
<i class="cv">25</i>
<i class="dv">··</i>
<i class="cv">25</i>
<i class="dv">··</i>
<i class="cv">25</i>
<i class="dv">··</i>
<i class="cv">25</i>
<i class="cv">1A</i>
<i class="cv">25</i>
<i class="dv">··</i>
<i class="pn">25</i>
<i class="dx">··</i>
<i class="pn">25</i>
<i class="dx">··</i>
<i class="pn">25</i>
<i class="dx">··</i>
<i class="pn">25</i>
<i class="dx">··</i>
<i class="pn">25</i>
<i class="dx">··</i>
<i class="pn">25</i>
<i class="dx">··</i>
<i class="pn">25</i></div>
<div class="t" style="left:437.5px;top:242.1px">



<i class="dx">·</i>
<i class="dx">·</i>
<i class="dx">·</i>
<i class="dx">·</i>
<i class="dx">·</i>
<i class="dx">·</i>
<i class="dx">·</i>
<i class="dx">·</i>
<i class="dx">·</i>
<i class="dx">·</i>
<i class="dx">·</i>
<i class="dx">·</i>
<i class="dx">·</i>
<i class="dx">·</i>
<i class="dx">·</i>
<i class="dx">·</i>
<i class="dt">·</i>
<i class="ct">E</i>
<i class="dt">·</i>
<i class="ct">E</i>
<i class="dt">·</i>
<i class="ct">E</i>
<i class="dt">·</i>
<i class="ct">E</i>
<i class="dt">·</i>
<i class="ct">E</i>
<i class="dt">·</i>
<i class="ct">E</i>
<i class="dt">·</i>
<i class="dt">·</i>
<i class="dt">·</i>
<i class="ct">E</i>
<i class="dt">·</i>
<i class="ct">E</i>
<i class="dt">·</i>
<i class="ct">E</i>
<i class="dt">·</i>
<i class="ct">E</i>
<i class="dt">·</i>
<i class="ct">E</i>
<i class="dt">·</i>
<i class="ct">E</i>
<i class="dt">·</i>
<i class="ct">E</i>
<i class="dt">·</i>
<i class="dt">·</i>
<i class="dt">·</i>
<i class="ct">E</i>
<i class="dt">·</i>
<i class="ct">E</i>
<i class="dt">·</i>
<i class="ct">E</i>
<i class="dt">·</i>
<i class="ct">E</i>
<i class="dt">·</i>
<i class="ct">E</i>
<i class="dt">·</i>
<i class="ct">E</i>
<i class="dt">·</i>
<i class="ct">E</i>
<i class="dt">·</i>
<i class="dt">·</i>
<i class="dt">·</i>
<i class="ct">E</i>
<i class="dt">·</i>
<i class="ct">E</i>
<i class="dt">·</i>
<i class="ct">E</i>
<i class="dt">·</i>
<i class="ct">E</i>
<i class="dt">·</i>
<i class="ct">E</i>
<i class="dt">·</i>
<i class="ct">E</i>
<i class="dt">·</i>
<i class="ct">E</i>
<i class="dt">·</i>
<i class="dt">·</i>
<i class="dt">·</i>
<i class="ct">E</i>
<i class="dx">·</i>
<i class="pn">E</i>
<i class="dx">·</i>
<i class="pn">E</i>
<i class="dx">·</i>
<i class="pn">E</i>
<i class="dx">·</i>
<i class="pn">E</i>
<i class="dx">·</i>
<i class="pn">E</i>
<i class="dx">·</i>
<i class="pn">E</i>
<i class="dx">·</i></div>
<div class="t" style="left:446.7px;top:242.1px">



<i class="dx">··</i>
<i class="dx">··</i>
<i class="dx">··</i>
<i class="dx">··</i>
<i class="dx">··</i>
<i class="dx">··</i>
<i class="dx">··</i>
<i class="dx">··</i>
<i class="dx">··</i>
<i class="dx">··</i>
<i class="dx">··</i>
<i class="dx">··</i>
<i class="dx">··</i>
<i class="dx">··</i>
<i class="dx">··</i>
<i class="dx">··</i>
<i class="dp">··</i>
<i class="cp">C0</i>
<i class="dp">··</i>
<i class="cp">C0</i>
<i class="dp">··</i>
<i class="cp">C0</i>
<i class="dp">··</i>
<i class="cp">C0</i>
<i class="dp">··</i>
<i class="cp">C0</i>
<i class="dp">··</i>
<i class="cp">C0</i>
<i class="dp">··</i>
<i class="dp">··</i>
<i class="dp">··</i>
<i class="cp">C0</i>
<i class="dp">··</i>
<i class="cp">C0</i>
<i class="dp">··</i>
<i class="cp">C0</i>
<i class="dp">··</i>
<i class="cp">C0</i>
<i class="dp">··</i>
<i class="cp">C0</i>
<i class="dp">··</i>
<i class="cp">C0</i>
<i class="dp">··</i>
<i class="cp">C0</i>
<i class="dp">··</i>
<i class="dp">··</i>
<i class="dp">··</i>
<i class="cp">C0</i>
<i class="dp">··</i>
<i class="cp">C0</i>
<i class="dp">··</i>
<i class="cp">C0</i>
<i class="dp">··</i>
<i class="cp">C0</i>
<i class="dp">··</i>
<i class="cp">C0</i>
<i class="dp">··</i>
<i class="cp">C0</i>
<i class="dp">··</i>
<i class="cp">C0</i>
<i class="dp">··</i>
<i class="dp">··</i>
<i class="dp">··</i>
<i class="cp">C0</i>
<i class="dp">··</i>
<i class="cp">C0</i>
<i class="dp">··</i>
<i class="cp">C0</i>
<i class="dp">··</i>
<i class="cp">C0</i>
<i class="dp">··</i>
<i class="cp">C0</i>
<i class="dp">··</i>
<i class="cp">C0</i>
<i class="dp">··</i>
<i class="cp">C0</i>
<i class="dp">··</i>
<i class="dp">··</i>
<i class="dp">··</i>
<i class="cp">C0</i>
<i class="dx">··</i>
<i class="pn">C0</i>
<i class="dx">··</i>
<i class="pn">C0</i>
<i class="dx">··</i>
<i class="pn">C0</i>
<i class="dx">··</i>
<i class="pn">C0</i>
<i class="dx">··</i>
<i class="pn">C0</i>
<i class="dx">··</i>
<i class="pn">C0</i>
<i class="dx">··</i></div>
<div class="t" style="left:465.5px;top:242.1px">



<i class="dx">···</i>
<i class="dx">···</i>
<i class="dx">···</i>
<i class="dx">···</i>
<i class="dx">···</i>
<i class="dx">···</i>
<i class="dx">···</i>
<i class="dx">···</i>
<i class="dx">···</i>
<i class="dx">···</i>
<i class="dx">···</i>
<i class="dx">···</i>
<i class="dx">···</i>
<i class="dx">···</i>
<i class="dx">···</i>
<i class="dx">···</i>
<i class="cn">C−5</i>
<i class="dn">···</i>
<i class="dn">···</i>
<i class="dn">···</i>
<i class="dn">···</i>
<i class="dn">···</i>
<i class="dn">···</i>
<i class="dn">···</i>
<i class="dn">···</i>
<i class="dn">···</i>
<i class="cn">C−5</i>
<i class="dn">···</i>
<i class="dn">···</i>
<i class="dn">···</i>
<i class="dn">···</i>
<i class="dn">···</i>
<i class="cn">C−5</i>
<i class="dn">···</i>
<i class="dn">···</i>
<i class="dn">···</i>
<i class="dn">···</i>
<i class="dn">···</i>
<i class="dn">···</i>
<i class="dn">···</i>
<i class="dn">···</i>
<i class="dn">···</i>
<i class="dn">···</i>
<i class="dn">···</i>
<i class="cn">C−5</i>
<i class="dn">···</i>
<i class="dn">···</i>
<i class="dn">···</i>
<i class="cn">C−5</i>
<i class="dn">···</i>
<i class="dn">···</i>
<i class="dn">···</i>
<i class="dn">···</i>
<i class="dn">···</i>
<i class="dn">···</i>
<i class="dn">···</i>
<i class="dn">···</i>
<i class="dn">···</i>
<i class="dn">···</i>
<i class="dn">···</i>
<i class="dn">···</i>
<i class="dn">···</i>
<i class="dn">···</i>
<i class="dn">···</i>
<i class="dn">···</i>
<i class="dn">···</i>
<i class="dn">···</i>
<i class="dn">···</i>
<i class="dn">···</i>
<i class="dn">···</i>
<i class="cn">C−5</i>
<i class="dn">···</i>
<i class="dn">···</i>
<i class="dn">···</i>
<i class="dn">···</i>
<i class="dn">···</i>
<i class="cn">C−5</i>
<i class="dn">···</i>
<i class="dn">···</i>
<i class="dn">···</i>
<i class="pn">C−5</i>
<i class="dx">···</i>
<i class="dx">···</i>
<i class="dx">···</i>
<i class="dx">···</i>
<i class="dx">···</i>
<i class="dx">···</i>
<i class="dx">···</i>
<i class="dx">···</i>
<i class="dx">···</i>
<i class="pn">C−5</i>
<i class="dx">···</i>
<i class="dx">···</i></div>
<div class="t" style="left:490.5px;top:242.1px">



<i class="dx">··</i>
<i class="dx">··</i>
<i class="dx">··</i>
<i class="dx">··</i>
<i class="dx">··</i>
<i class="dx">··</i>
<i class="dx">··</i>
<i class="dx">··</i>
<i class="dx">··</i>
<i class="dx">··</i>
<i class="dx">··</i>
<i class="dx">··</i>
<i class="dx">··</i>
<i class="dx">··</i>
<i class="dx">··</i>
<i class="dx">··</i>
<i class="di">·</i><i class="ci">7</i>
<i class="di">··</i>
<i class="di">··</i>
<i class="di">··</i>
<i class="di">··</i>
<i class="di">··</i>
<i class="di">··</i>
<i class="di">··</i>
<i class="di">··</i>
<i class="di">··</i>
<i class="di">·</i><i class="ci">7</i>
<i class="di">··</i>
<i class="di">··</i>
<i class="di">··</i>
<i class="di">··</i>
<i class="di">··</i>
<i class="di">·</i><i class="ci">7</i>
<i class="di">··</i>
<i class="di">··</i>
<i class="di">··</i>
<i class="di">··</i>
<i class="di">··</i>
<i class="di">··</i>
<i class="di">··</i>
<i class="di">··</i>
<i class="di">··</i>
<i class="di">··</i>
<i class="di">··</i>
<i class="di">·</i><i class="ci">7</i>
<i class="di">··</i>
<i class="di">··</i>
<i class="di">··</i>
<i class="di">·</i><i class="ci">7</i>
<i class="di">··</i>
<i class="di">··</i>
<i class="di">··</i>
<i class="di">··</i>
<i class="di">··</i>
<i class="di">··</i>
<i class="di">··</i>
<i class="di">··</i>
<i class="di">··</i>
<i class="di">··</i>
<i class="di">··</i>
<i class="di">··</i>
<i class="di">··</i>
<i class="di">··</i>
<i class="di">··</i>
<i class="di">··</i>
<i class="di">··</i>
<i class="di">··</i>
<i class="di">··</i>
<i class="di">··</i>
<i class="di">··</i>
<i class="di">·</i><i class="ci">7</i>
<i class="di">··</i>
<i class="di">··</i>
<i class="di">··</i>
<i class="di">··</i>
<i class="di">··</i>
<i class="di">·</i><i class="ci">7</i>
<i class="di">··</i>
<i class="di">··</i>
<i class="di">··</i>
<i class="dx">·</i><i class="pn">7</i>
<i class="dx">··</i>
<i class="dx">··</i>
<i class="dx">··</i>
<i class="dx">··</i>
<i class="dx">··</i>
<i class="dx">··</i>
<i class="dx">··</i>
<i class="dx">··</i>
<i class="dx">··</i>
<i class="dx">·</i><i class="pn">7</i>
<i class="dx">··</i>
<i class="dx">··</i></div>
<div class="t" style="left:507.5px;top:242.1px">



<i class="dx">··</i>
<i class="dx">··</i>
<i class="dx">··</i>
<i class="dx">··</i>
<i class="dx">··</i>
<i class="dx">··</i>
<i class="dx">··</i>
<i class="dx">··</i>
<i class="dx">··</i>
<i class="dx">··</i>
<i class="dx">··</i>
<i class="dx">··</i>
<i class="dx">··</i>
<i class="dx">··</i>
<i class="dx">··</i>
<i class="dx">··</i>
<i class="dv">··</i>
<i class="dv">··</i>
<i class="dv">··</i>
<i class="dv">··</i>
<i class="dv">··</i>
<i class="dv">··</i>
<i class="dv">··</i>
<i class="dv">··</i>
<i class="dv">··</i>
<i class="dv">··</i>
<i class="dv">··</i>
<i class="dv">··</i>
<i class="dv">··</i>
<i class="dv">··</i>
<i class="dv">··</i>
<i class="dv">··</i>
<i class="dv">··</i>
<i class="dv">··</i>
<i class="dv">··</i>
<i class="dv">··</i>
<i class="dv">··</i>
<i class="dv">··</i>
<i class="dv">··</i>
<i class="dv">··</i>
<i class="dv">··</i>
<i class="dv">··</i>
<i class="dv">··</i>
<i class="dv">··</i>
<i class="dv">··</i>
<i class="dv">··</i>
<i class="dv">··</i>
<i class="dv">··</i>
<i class="dv">··</i>
<i class="dv">··</i>
<i class="dv">··</i>
<i class="dv">··</i>
<i class="dv">··</i>
<i class="dv">··</i>
<i class="dv">··</i>
<i class="dv">··</i>
<i class="dv">··</i>
<i class="dv">··</i>
<i class="dv">··</i>
<i class="dv">··</i>
<i class="dv">··</i>
<i class="dv">··</i>
<i class="dv">··</i>
<i class="dv">··</i>
<i class="dv">··</i>
<i class="dv">··</i>
<i class="dv">··</i>
<i class="dv">··</i>
<i class="dv">··</i>
<i class="dv">··</i>
<i class="dv">··</i>
<i class="dv">··</i>
<i class="dv">··</i>
<i class="dv">··</i>
<i class="dv">··</i>
<i class="dv">··</i>
<i class="dv">··</i>
<i class="dv">··</i>
<i class="dv">··</i>
<i class="dv">··</i>
<i class="dx">··</i>
<i class="dx">··</i>
<i class="dx">··</i>
<i class="dx">··</i>
<i class="dx">··</i>
<i class="dx">··</i>
<i class="dx">··</i>
<i class="dx">··</i>
<i class="dx">··</i>
<i class="dx">··</i>
<i class="dx">··</i>
<i class="dx">··</i>
<i class="dx">··</i></div>
<div class="t" style="left:524.5px;top:242.1px">



<i class="dx">·</i>
<i class="dx">·</i>
<i class="dx">·</i>
<i class="dx">·</i>
<i class="dx">·</i>
<i class="dx">·</i>
<i class="dx">·</i>
<i class="dx">·</i>
<i class="dx">·</i>
<i class="dx">·</i>
<i class="dx">·</i>
<i class="dx">·</i>
<i class="dx">·</i>
<i class="dx">·</i>
<i class="dx">·</i>
<i class="dx">·</i>
<i class="dt">·</i>
<i class="dt">·</i>
<i class="dt">·</i>
<i class="dt">·</i>
<i class="dt">·</i>
<i class="dt">·</i>
<i class="dt">·</i>
<i class="dt">·</i>
<i class="dt">·</i>
<i class="dt">·</i>
<i class="dt">·</i>
<i class="dt">·</i>
<i class="dt">·</i>
<i class="dt">·</i>
<i class="dt">·</i>
<i class="dt">·</i>
<i class="dt">·</i>
<i class="dt">·</i>
<i class="dt">·</i>
<i class="dt">·</i>
<i class="dt">·</i>
<i class="dt">·</i>
<i class="dt">·</i>
<i class="dt">·</i>
<i class="dt">·</i>
<i class="dt">·</i>
<i class="dt">·</i>
<i class="dt">·</i>
<i class="dt">·</i>
<i class="dt">·</i>
<i class="dt">·</i>
<i class="dt">·</i>
<i class="dt">·</i>
<i class="dt">·</i>
<i class="dt">·</i>
<i class="dt">·</i>
<i class="dt">·</i>
<i class="dt">·</i>
<i class="dt">·</i>
<i class="dt">·</i>
<i class="dt">·</i>
<i class="dt">·</i>
<i class="dt">·</i>
<i class="dt">·</i>
<i class="dt">·</i>
<i class="dt">·</i>
<i class="dt">·</i>
<i class="dt">·</i>
<i class="dt">·</i>
<i class="dt">·</i>
<i class="dt">·</i>
<i class="dt">·</i>
<i class="dt">·</i>
<i class="dt">·</i>
<i class="dt">·</i>
<i class="dt">·</i>
<i class="dt">·</i>
<i class="dt">·</i>
<i class="dt">·</i>
<i class="dt">·</i>
<i class="dt">·</i>
<i class="dt">·</i>
<i class="dt">·</i>
<i class="dt">·</i>
<i class="dx">·</i>
<i class="dx">·</i>
<i class="dx">·</i>
<i class="dx">·</i>
<i class="dx">·</i>
<i class="dx">·</i>
<i class="dx">·</i>
<i class="dx">·</i>
<i class="dx">·</i>
<i class="dx">·</i>
<i class="dx">·</i>
<i class="dx">·</i>
<i class="dx">·</i></div>
<div class="t" style="left:533.7px;top:242.1px">



<i class="dx">··</i>
<i class="dx">··</i>
<i class="dx">··</i>
<i class="dx">··</i>
<i class="dx">··</i>
<i class="dx">··</i>
<i class="dx">··</i>
<i class="dx">··</i>
<i class="dx">··</i>
<i class="dx">··</i>
<i class="dx">··</i>
<i class="dx">··</i>
<i class="dx">··</i>
<i class="dx">··</i>
<i class="dx">··</i>
<i class="dx">··</i>
<i class="dp">··</i>
<i class="dp">··</i>
<i class="dp">··</i>
<i class="dp">··</i>
<i class="dp">··</i>
<i class="dp">··</i>
<i class="dp">··</i>
<i class="dp">··</i>
<i class="dp">··</i>
<i class="dp">··</i>
<i class="dp">··</i>
<i class="dp">··</i>
<i class="dp">··</i>
<i class="dp">··</i>
<i class="dp">··</i>
<i class="dp">··</i>
<i class="dp">··</i>
<i class="dp">··</i>
<i class="dp">··</i>
<i class="dp">··</i>
<i class="dp">··</i>
<i class="dp">··</i>
<i class="dp">··</i>
<i class="dp">··</i>
<i class="dp">··</i>
<i class="dp">··</i>
<i class="dp">··</i>
<i class="dp">··</i>
<i class="dp">··</i>
<i class="dp">··</i>
<i class="dp">··</i>
<i class="dp">··</i>
<i class="dp">··</i>
<i class="dp">··</i>
<i class="dp">··</i>
<i class="dp">··</i>
<i class="dp">··</i>
<i class="dp">··</i>
<i class="dp">··</i>
<i class="dp">··</i>
<i class="dp">··</i>
<i class="dp">··</i>
<i class="dp">··</i>
<i class="dp">··</i>
<i class="dp">··</i>
<i class="dp">··</i>
<i class="dp">··</i>
<i class="dp">··</i>
<i class="dp">··</i>
<i class="dp">··</i>
<i class="dp">··</i>
<i class="dp">··</i>
<i class="dp">··</i>
<i class="dp">··</i>
<i class="dp">··</i>
<i class="dp">··</i>
<i class="dp">··</i>
<i class="dp">··</i>
<i class="dp">··</i>
<i class="dp">··</i>
<i class="dp">··</i>
<i class="dp">··</i>
<i class="dp">··</i>
<i class="dp">··</i>
<i class="dx">··</i>
<i class="dx">··</i>
<i class="dx">··</i>
<i class="dx">··</i>
<i class="dx">··</i>
<i class="dx">··</i>
<i class="dx">··</i>
<i class="dx">··</i>
<i class="dx">··</i>
<i class="dx">··</i>
<i class="dx">··</i>
<i class="dx">··</i>
<i class="dx">··</i></div>
<div class="t" style="left:552.5px;top:242.1px">



<i class="dx">···</i>
<i class="dx">···</i>
<i class="dx">···</i>
<i class="dx">···</i>
<i class="dx">···</i>
<i class="dx">···</i>
<i class="dx">···</i>
<i class="dx">···</i>
<i class="dx">···</i>
<i class="dx">···</i>
<i class="dx">···</i>
<i class="dx">···</i>
<i class="dx">···</i>
<i class="dx">···</i>
<i class="dx">···</i>
<i class="dx">···</i>
<i class="cn">G−5</i>
<i class="dn">···</i>
<i class="dn">···</i>
<i class="dn">···</i>
<i class="dn">···</i>
<i class="dn">···</i>
<i class="dn">···</i>
<i class="dn">···</i>
<i class="dn">···</i>
<i class="dn">···</i>
<i class="cn">G−5</i>
<i class="dn">···</i>
<i class="dn">···</i>
<i class="dn">···</i>
<i class="dn">···</i>
<i class="dn">···</i>
<i class="cn">G−5</i>
<i class="dn">···</i>
<i class="dn">···</i>
<i class="dn">···</i>
<i class="dn">···</i>
<i class="dn">···</i>
<i class="dn">···</i>
<i class="dn">···</i>
<i class="dn">···</i>
<i class="dn">···</i>
<i class="dn">···</i>
<i class="dn">···</i>
<i class="cn">G−5</i>
<i class="dn">···</i>
<i class="dn">···</i>
<i class="dn">···</i>
<i class="cn">F−5</i>
<i class="dn">···</i>
<i class="dn">···</i>
<i class="dn">···</i>
<i class="dn">···</i>
<i class="dn">···</i>
<i class="dn">···</i>
<i class="dn">···</i>
<i class="dn">···</i>
<i class="dn">···</i>
<i class="dn">···</i>
<i class="dn">···</i>
<i class="dn">···</i>
<i class="dn">···</i>
<i class="dn">···</i>
<i class="dn">···</i>
<i class="dn">···</i>
<i class="dn">···</i>
<i class="dn">···</i>
<i class="dn">···</i>
<i class="dn">···</i>
<i class="dn">···</i>
<i class="cn">F−5</i>
<i class="dn">···</i>
<i class="dn">···</i>
<i class="dn">···</i>
<i class="dn">···</i>
<i class="dn">···</i>
<i class="cn">G−5</i>
<i class="dn">···</i>
<i class="dn">···</i>
<i class="dn">···</i>
<i class="pn">G−5</i>
<i class="dx">···</i>
<i class="dx">···</i>
<i class="dx">···</i>
<i class="dx">···</i>
<i class="dx">···</i>
<i class="dx">···</i>
<i class="dx">···</i>
<i class="dx">···</i>
<i class="dx">···</i>
<i class="pn">G−5</i>
<i class="dx">···</i>
<i class="dx">···</i></div>
<div class="t" style="left:577.5px;top:242.1px">



<i class="dx">··</i>
<i class="dx">··</i>
<i class="dx">··</i>
<i class="dx">··</i>
<i class="dx">··</i>
<i class="dx">··</i>
<i class="dx">··</i>
<i class="dx">··</i>
<i class="dx">··</i>
<i class="dx">··</i>
<i class="dx">··</i>
<i class="dx">··</i>
<i class="dx">··</i>
<i class="dx">··</i>
<i class="dx">··</i>
<i class="dx">··</i>
<i class="di">·</i><i class="ci">7</i>
<i class="di">··</i>
<i class="di">··</i>
<i class="di">··</i>
<i class="di">··</i>
<i class="di">··</i>
<i class="di">··</i>
<i class="di">··</i>
<i class="di">··</i>
<i class="di">··</i>
<i class="di">·</i><i class="ci">7</i>
<i class="di">··</i>
<i class="di">··</i>
<i class="di">··</i>
<i class="di">··</i>
<i class="di">··</i>
<i class="di">·</i><i class="ci">7</i>
<i class="di">··</i>
<i class="di">··</i>
<i class="di">··</i>
<i class="di">··</i>
<i class="di">··</i>
<i class="di">··</i>
<i class="di">··</i>
<i class="di">··</i>
<i class="di">··</i>
<i class="di">··</i>
<i class="di">··</i>
<i class="di">·</i><i class="ci">7</i>
<i class="di">··</i>
<i class="di">··</i>
<i class="di">··</i>
<i class="di">·</i><i class="ci">7</i>
<i class="di">··</i>
<i class="di">··</i>
<i class="di">··</i>
<i class="di">··</i>
<i class="di">··</i>
<i class="di">··</i>
<i class="di">··</i>
<i class="di">··</i>
<i class="di">··</i>
<i class="di">··</i>
<i class="di">··</i>
<i class="di">··</i>
<i class="di">··</i>
<i class="di">··</i>
<i class="di">··</i>
<i class="di">··</i>
<i class="di">··</i>
<i class="di">··</i>
<i class="di">··</i>
<i class="di">··</i>
<i class="di">··</i>
<i class="di">·</i><i class="ci">7</i>
<i class="di">··</i>
<i class="di">··</i>
<i class="di">··</i>
<i class="di">··</i>
<i class="di">··</i>
<i class="di">·</i><i class="ci">7</i>
<i class="di">··</i>
<i class="di">··</i>
<i class="di">··</i>
<i class="dx">·</i><i class="pn">7</i>
<i class="dx">··</i>
<i class="dx">··</i>
<i class="dx">··</i>
<i class="dx">··</i>
<i class="dx">··</i>
<i class="dx">··</i>
<i class="dx">··</i>
<i class="dx">··</i>
<i class="dx">··</i>
<i class="dx">·</i><i class="pn">7</i>
<i class="dx">··</i>
<i class="dx">··</i></div>
<div class="t" style="left:594.5px;top:242.1px">



<i class="dx">··</i>
<i class="dx">··</i>
<i class="dx">··</i>
<i class="dx">··</i>
<i class="dx">··</i>
<i class="dx">··</i>
<i class="dx">··</i>
<i class="dx">··</i>
<i class="dx">··</i>
<i class="dx">··</i>
<i class="dx">··</i>
<i class="dx">··</i>
<i class="dx">··</i>
<i class="dx">··</i>
<i class="dx">··</i>
<i class="dx">··</i>
<i class="dv">··</i>
<i class="dv">··</i>
<i class="dv">··</i>
<i class="dv">··</i>
<i class="dv">··</i>
<i class="dv">··</i>
<i class="dv">··</i>
<i class="dv">··</i>
<i class="dv">··</i>
<i class="dv">··</i>
<i class="dv">··</i>
<i class="dv">··</i>
<i class="dv">··</i>
<i class="dv">··</i>
<i class="dv">··</i>
<i class="dv">··</i>
<i class="dv">··</i>
<i class="dv">··</i>
<i class="dv">··</i>
<i class="dv">··</i>
<i class="dv">··</i>
<i class="dv">··</i>
<i class="dv">··</i>
<i class="dv">··</i>
<i class="dv">··</i>
<i class="dv">··</i>
<i class="dv">··</i>
<i class="dv">··</i>
<i class="dv">··</i>
<i class="dv">··</i>
<i class="dv">··</i>
<i class="dv">··</i>
<i class="dv">··</i>
<i class="dv">··</i>
<i class="dv">··</i>
<i class="dv">··</i>
<i class="dv">··</i>
<i class="dv">··</i>
<i class="dv">··</i>
<i class="dv">··</i>
<i class="dv">··</i>
<i class="dv">··</i>
<i class="dv">··</i>
<i class="dv">··</i>
<i class="dv">··</i>
<i class="dv">··</i>
<i class="dv">··</i>
<i class="dv">··</i>
<i class="dv">··</i>
<i class="dv">··</i>
<i class="dv">··</i>
<i class="dv">··</i>
<i class="dv">··</i>
<i class="dv">··</i>
<i class="dv">··</i>
<i class="dv">··</i>
<i class="dv">··</i>
<i class="dv">··</i>
<i class="dv">··</i>
<i class="dv">··</i>
<i class="dv">··</i>
<i class="dv">··</i>
<i class="dv">··</i>
<i class="dv">··</i>
<i class="dx">··</i>
<i class="dx">··</i>
<i class="dx">··</i>
<i class="dx">··</i>
<i class="dx">··</i>
<i class="dx">··</i>
<i class="dx">··</i>
<i class="dx">··</i>
<i class="dx">··</i>
<i class="dx">··</i>
<i class="dx">··</i>
<i class="dx">··</i>
<i class="dx">··</i></div>
<div class="t" style="left:611.5px;top:242.1px">



<i class="dx">·</i>
<i class="dx">·</i>
<i class="dx">·</i>
<i class="dx">·</i>
<i class="dx">·</i>
<i class="dx">·</i>
<i class="dx">·</i>
<i class="dx">·</i>
<i class="dx">·</i>
<i class="dx">·</i>
<i class="dx">·</i>
<i class="dx">·</i>
<i class="dx">·</i>
<i class="dx">·</i>
<i class="dx">·</i>
<i class="dx">·</i>
<i class="dt">·</i>
<i class="dt">·</i>
<i class="dt">·</i>
<i class="dt">·</i>
<i class="dt">·</i>
<i class="dt">·</i>
<i class="dt">·</i>
<i class="dt">·</i>
<i class="dt">·</i>
<i class="dt">·</i>
<i class="dt">·</i>
<i class="dt">·</i>
<i class="dt">·</i>
<i class="dt">·</i>
<i class="dt">·</i>
<i class="dt">·</i>
<i class="dt">·</i>
<i class="dt">·</i>
<i class="dt">·</i>
<i class="dt">·</i>
<i class="dt">·</i>
<i class="dt">·</i>
<i class="dt">·</i>
<i class="dt">·</i>
<i class="dt">·</i>
<i class="dt">·</i>
<i class="dt">·</i>
<i class="dt">·</i>
<i class="dt">·</i>
<i class="dt">·</i>
<i class="dt">·</i>
<i class="dt">·</i>
<i class="dt">·</i>
<i class="dt">·</i>
<i class="dt">·</i>
<i class="dt">·</i>
<i class="dt">·</i>
<i class="dt">·</i>
<i class="dt">·</i>
<i class="dt">·</i>
<i class="dt">·</i>
<i class="dt">·</i>
<i class="dt">·</i>
<i class="dt">·</i>
<i class="dt">·</i>
<i class="dt">·</i>
<i class="dt">·</i>
<i class="dt">·</i>
<i class="dt">·</i>
<i class="dt">·</i>
<i class="dt">·</i>
<i class="dt">·</i>
<i class="dt">·</i>
<i class="dt">·</i>
<i class="dt">·</i>
<i class="dt">·</i>
<i class="dt">·</i>
<i class="dt">·</i>
<i class="dt">·</i>
<i class="dt">·</i>
<i class="dt">·</i>
<i class="dt">·</i>
<i class="dt">·</i>
<i class="dt">·</i>
<i class="dx">·</i>
<i class="dx">·</i>
<i class="dx">·</i>
<i class="dx">·</i>
<i class="dx">·</i>
<i class="dx">·</i>
<i class="dx">·</i>
<i class="dx">·</i>
<i class="dx">·</i>
<i class="dx">·</i>
<i class="dx">·</i>
<i class="dx">·</i>
<i class="dx">·</i></div>
<div class="t" style="left:620.7px;top:242.1px">



<i class="dx">··</i>
<i class="dx">··</i>
<i class="dx">··</i>
<i class="dx">··</i>
<i class="dx">··</i>
<i class="dx">··</i>
<i class="dx">··</i>
<i class="dx">··</i>
<i class="dx">··</i>
<i class="dx">··</i>
<i class="dx">··</i>
<i class="dx">··</i>
<i class="dx">··</i>
<i class="dx">··</i>
<i class="dx">··</i>
<i class="dx">··</i>
<i class="dp">··</i>
<i class="dp">··</i>
<i class="dp">··</i>
<i class="dp">··</i>
<i class="dp">··</i>
<i class="dp">··</i>
<i class="dp">··</i>
<i class="dp">··</i>
<i class="dp">··</i>
<i class="dp">··</i>
<i class="dp">··</i>
<i class="dp">··</i>
<i class="dp">··</i>
<i class="dp">··</i>
<i class="dp">··</i>
<i class="dp">··</i>
<i class="dp">··</i>
<i class="dp">··</i>
<i class="dp">··</i>
<i class="dp">··</i>
<i class="dp">··</i>
<i class="dp">··</i>
<i class="dp">··</i>
<i class="dp">··</i>
<i class="dp">··</i>
<i class="dp">··</i>
<i class="dp">··</i>
<i class="dp">··</i>
<i class="dp">··</i>
<i class="dp">··</i>
<i class="dp">··</i>
<i class="dp">··</i>
<i class="dp">··</i>
<i class="dp">··</i>
<i class="dp">··</i>
<i class="dp">··</i>
<i class="dp">··</i>
<i class="dp">··</i>
<i class="dp">··</i>
<i class="dp">··</i>
<i class="dp">··</i>
<i class="dp">··</i>
<i class="dp">··</i>
<i class="dp">··</i>
<i class="dp">··</i>
<i class="dp">··</i>
<i class="dp">··</i>
<i class="dp">··</i>
<i class="dp">··</i>
<i class="dp">··</i>
<i class="dp">··</i>
<i class="dp">··</i>
<i class="dp">··</i>
<i class="dp">··</i>
<i class="dp">··</i>
<i class="dp">··</i>
<i class="dp">··</i>
<i class="dp">··</i>
<i class="dp">··</i>
<i class="dp">··</i>
<i class="dp">··</i>
<i class="dp">··</i>
<i class="dp">··</i>
<i class="dp">··</i>
<i class="dx">··</i>
<i class="dx">··</i>
<i class="dx">··</i>
<i class="dx">··</i>
<i class="dx">··</i>
<i class="dx">··</i>
<i class="dx">··</i>
<i class="dx">··</i>
<i class="dx">··</i>
<i class="dx">··</i>
<i class="dx">··</i>
<i class="dx">··</i>
<i class="dx">··</i></div>
<div class="t" style="left:639.5px;top:242.1px">



<i class="dx">···</i>
<i class="dx">···</i>
<i class="dx">···</i>
<i class="dx">···</i>
<i class="dx">···</i>
<i class="dx">···</i>
<i class="dx">···</i>
<i class="dx">···</i>
<i class="dx">···</i>
<i class="dx">···</i>
<i class="dx">···</i>
<i class="dx">···</i>
<i class="dx">···</i>
<i class="dx">···</i>
<i class="dx">···</i>
<i class="dx">···</i>
<i class="cn">C−6</i>
<i class="dn">···</i>
<i class="dn">···</i>
<i class="dn">···</i>
<i class="dn">···</i>
<i class="dn">···</i>
<i class="dn">···</i>
<i class="dn">···</i>
<i class="dn">···</i>
<i class="dn">···</i>
<i class="cn">D−6</i>
<i class="dn">···</i>
<i class="dn">···</i>
<i class="dn">···</i>
<i class="dn">···</i>
<i class="dn">···</i>
<i class="cn">B−5</i>
<i class="dn">···</i>
<i class="dn">···</i>
<i class="dn">···</i>
<i class="dn">···</i>
<i class="dn">···</i>
<i class="dn">···</i>
<i class="dn">···</i>
<i class="dn">···</i>
<i class="dn">···</i>
<i class="dn">···</i>
<i class="dn">···</i>
<i class="cn">A−5</i>
<i class="dn">···</i>
<i class="dn">···</i>
<i class="dn">···</i>
<i class="cn">A−5</i>
<i class="dn">···</i>
<i class="dn">···</i>
<i class="dn">···</i>
<i class="dn">···</i>
<i class="dn">···</i>
<i class="dn">···</i>
<i class="dn">···</i>
<i class="dn">···</i>
<i class="dn">···</i>
<i class="dn">···</i>
<i class="dn">···</i>
<i class="dn">···</i>
<i class="dn">···</i>
<i class="dn">···</i>
<i class="dn">···</i>
<i class="dn">···</i>
<i class="dn">···</i>
<i class="dn">···</i>
<i class="dn">···</i>
<i class="dn">···</i>
<i class="dn">···</i>
<i class="cn">B−5</i>
<i class="dn">···</i>
<i class="dn">···</i>
<i class="dn">···</i>
<i class="dn">···</i>
<i class="dn">···</i>
<i class="cn">C−6</i>
<i class="dn">···</i>
<i class="dn">···</i>
<i class="dn">···</i>
<i class="pn">C−6</i>
<i class="dx">···</i>
<i class="dx">···</i>
<i class="dx">···</i>
<i class="dx">···</i>
<i class="dx">···</i>
<i class="dx">···</i>
<i class="dx">···</i>
<i class="dx">···</i>
<i class="dx">···</i>
<i class="pn">D−6</i>
<i class="dx">···</i>
<i class="dx">···</i></div>
<div class="t" style="left:664.5px;top:242.1px">



<i class="dx">··</i>
<i class="dx">··</i>
<i class="dx">··</i>
<i class="dx">··</i>
<i class="dx">··</i>
<i class="dx">··</i>
<i class="dx">··</i>
<i class="dx">··</i>
<i class="dx">··</i>
<i class="dx">··</i>
<i class="dx">··</i>
<i class="dx">··</i>
<i class="dx">··</i>
<i class="dx">··</i>
<i class="dx">··</i>
<i class="dx">··</i>
<i class="di">·</i><i class="ci">7</i>
<i class="di">··</i>
<i class="di">··</i>
<i class="di">··</i>
<i class="di">··</i>
<i class="di">··</i>
<i class="di">··</i>
<i class="di">··</i>
<i class="di">··</i>
<i class="di">··</i>
<i class="di">·</i><i class="ci">7</i>
<i class="di">··</i>
<i class="di">··</i>
<i class="di">··</i>
<i class="di">··</i>
<i class="di">··</i>
<i class="di">·</i><i class="ci">7</i>
<i class="di">··</i>
<i class="di">··</i>
<i class="di">··</i>
<i class="di">··</i>
<i class="di">··</i>
<i class="di">··</i>
<i class="di">··</i>
<i class="di">··</i>
<i class="di">··</i>
<i class="di">··</i>
<i class="di">··</i>
<i class="di">·</i><i class="ci">7</i>
<i class="di">··</i>
<i class="di">··</i>
<i class="di">··</i>
<i class="di">·</i><i class="ci">7</i>
<i class="di">··</i>
<i class="di">··</i>
<i class="di">··</i>
<i class="di">··</i>
<i class="di">··</i>
<i class="di">··</i>
<i class="di">··</i>
<i class="di">··</i>
<i class="di">··</i>
<i class="di">··</i>
<i class="di">··</i>
<i class="di">··</i>
<i class="di">··</i>
<i class="di">··</i>
<i class="di">··</i>
<i class="di">··</i>
<i class="di">··</i>
<i class="di">··</i>
<i class="di">··</i>
<i class="di">··</i>
<i class="di">··</i>
<i class="di">·</i><i class="ci">7</i>
<i class="di">··</i>
<i class="di">··</i>
<i class="di">··</i>
<i class="di">··</i>
<i class="di">··</i>
<i class="di">·</i><i class="ci">7</i>
<i class="di">··</i>
<i class="di">··</i>
<i class="di">··</i>
<i class="dx">·</i><i class="pn">7</i>
<i class="dx">··</i>
<i class="dx">··</i>
<i class="dx">··</i>
<i class="dx">··</i>
<i class="dx">··</i>
<i class="dx">··</i>
<i class="dx">··</i>
<i class="dx">··</i>
<i class="dx">··</i>
<i class="dx">·</i><i class="pn">7</i>
<i class="dx">··</i>
<i class="dx">··</i></div>
<div class="t" style="left:681.5px;top:242.1px">



<i class="dx">··</i>
<i class="dx">··</i>
<i class="dx">··</i>
<i class="dx">··</i>
<i class="dx">··</i>
<i class="dx">··</i>
<i class="dx">··</i>
<i class="dx">··</i>
<i class="dx">··</i>
<i class="dx">··</i>
<i class="dx">··</i>
<i class="dx">··</i>
<i class="dx">··</i>
<i class="dx">··</i>
<i class="dx">··</i>
<i class="dx">··</i>
<i class="dv">··</i>
<i class="dv">··</i>
<i class="dv">··</i>
<i class="dv">··</i>
<i class="dv">··</i>
<i class="dv">··</i>
<i class="dv">··</i>
<i class="dv">··</i>
<i class="dv">··</i>
<i class="dv">··</i>
<i class="dv">··</i>
<i class="dv">··</i>
<i class="dv">··</i>
<i class="dv">··</i>
<i class="dv">··</i>
<i class="dv">··</i>
<i class="dv">··</i>
<i class="dv">··</i>
<i class="dv">··</i>
<i class="dv">··</i>
<i class="dv">··</i>
<i class="dv">··</i>
<i class="dv">··</i>
<i class="dv">··</i>
<i class="dv">··</i>
<i class="dv">··</i>
<i class="dv">··</i>
<i class="dv">··</i>
<i class="dv">··</i>
<i class="dv">··</i>
<i class="dv">··</i>
<i class="dv">··</i>
<i class="dv">··</i>
<i class="dv">··</i>
<i class="dv">··</i>
<i class="dv">··</i>
<i class="dv">··</i>
<i class="dv">··</i>
<i class="dv">··</i>
<i class="dv">··</i>
<i class="dv">··</i>
<i class="dv">··</i>
<i class="dv">··</i>
<i class="dv">··</i>
<i class="dv">··</i>
<i class="dv">··</i>
<i class="dv">··</i>
<i class="dv">··</i>
<i class="dv">··</i>
<i class="dv">··</i>
<i class="dv">··</i>
<i class="dv">··</i>
<i class="dv">··</i>
<i class="dv">··</i>
<i class="dv">··</i>
<i class="dv">··</i>
<i class="dv">··</i>
<i class="dv">··</i>
<i class="dv">··</i>
<i class="dv">··</i>
<i class="dv">··</i>
<i class="dv">··</i>
<i class="dv">··</i>
<i class="dv">··</i>
<i class="dx">··</i>
<i class="dx">··</i>
<i class="dx">··</i>
<i class="dx">··</i>
<i class="dx">··</i>
<i class="dx">··</i>
<i class="dx">··</i>
<i class="dx">··</i>
<i class="dx">··</i>
<i class="dx">··</i>
<i class="dx">··</i>
<i class="dx">··</i>
<i class="dx">··</i></div>
<div class="t" style="left:698.5px;top:242.1px">



<i class="dx">·</i>
<i class="dx">·</i>
<i class="dx">·</i>
<i class="dx">·</i>
<i class="dx">·</i>
<i class="dx">·</i>
<i class="dx">·</i>
<i class="dx">·</i>
<i class="dx">·</i>
<i class="dx">·</i>
<i class="dx">·</i>
<i class="dx">·</i>
<i class="dx">·</i>
<i class="dx">·</i>
<i class="dx">·</i>
<i class="dx">·</i>
<i class="dt">·</i>
<i class="dt">·</i>
<i class="dt">·</i>
<i class="dt">·</i>
<i class="dt">·</i>
<i class="dt">·</i>
<i class="dt">·</i>
<i class="dt">·</i>
<i class="dt">·</i>
<i class="dt">·</i>
<i class="dt">·</i>
<i class="dt">·</i>
<i class="dt">·</i>
<i class="dt">·</i>
<i class="dt">·</i>
<i class="dt">·</i>
<i class="dt">·</i>
<i class="dt">·</i>
<i class="dt">·</i>
<i class="dt">·</i>
<i class="dt">·</i>
<i class="dt">·</i>
<i class="dt">·</i>
<i class="dt">·</i>
<i class="dt">·</i>
<i class="dt">·</i>
<i class="dt">·</i>
<i class="dt">·</i>
<i class="dt">·</i>
<i class="dt">·</i>
<i class="dt">·</i>
<i class="dt">·</i>
<i class="dt">·</i>
<i class="dt">·</i>
<i class="dt">·</i>
<i class="dt">·</i>
<i class="dt">·</i>
<i class="dt">·</i>
<i class="dt">·</i>
<i class="dt">·</i>
<i class="dt">·</i>
<i class="dt">·</i>
<i class="dt">·</i>
<i class="dt">·</i>
<i class="dt">·</i>
<i class="dt">·</i>
<i class="dt">·</i>
<i class="dt">·</i>
<i class="dt">·</i>
<i class="dt">·</i>
<i class="dt">·</i>
<i class="dt">·</i>
<i class="dt">·</i>
<i class="dt">·</i>
<i class="dt">·</i>
<i class="dt">·</i>
<i class="dt">·</i>
<i class="dt">·</i>
<i class="dt">·</i>
<i class="dt">·</i>
<i class="dt">·</i>
<i class="dt">·</i>
<i class="dt">·</i>
<i class="dt">·</i>
<i class="dx">·</i>
<i class="dx">·</i>
<i class="dx">·</i>
<i class="dx">·</i>
<i class="dx">·</i>
<i class="dx">·</i>
<i class="dx">·</i>
<i class="dx">·</i>
<i class="dx">·</i>
<i class="dx">·</i>
<i class="dx">·</i>
<i class="dx">·</i>
<i class="dx">·</i></div>
<div class="t" style="left:707.7px;top:242.1px">



<i class="dx">··</i>
<i class="dx">··</i>
<i class="dx">··</i>
<i class="dx">··</i>
<i class="dx">··</i>
<i class="dx">··</i>
<i class="dx">··</i>
<i class="dx">··</i>
<i class="dx">··</i>
<i class="dx">··</i>
<i class="dx">··</i>
<i class="dx">··</i>
<i class="dx">··</i>
<i class="dx">··</i>
<i class="dx">··</i>
<i class="dx">··</i>
<i class="dp">··</i>
<i class="dp">··</i>
<i class="dp">··</i>
<i class="dp">··</i>
<i class="dp">··</i>
<i class="dp">··</i>
<i class="dp">··</i>
<i class="dp">··</i>
<i class="dp">··</i>
<i class="dp">··</i>
<i class="dp">··</i>
<i class="dp">··</i>
<i class="dp">··</i>
<i class="dp">··</i>
<i class="dp">··</i>
<i class="dp">··</i>
<i class="dp">··</i>
<i class="dp">··</i>
<i class="dp">··</i>
<i class="dp">··</i>
<i class="dp">··</i>
<i class="dp">··</i>
<i class="dp">··</i>
<i class="dp">··</i>
<i class="dp">··</i>
<i class="dp">··</i>
<i class="dp">··</i>
<i class="dp">··</i>
<i class="dp">··</i>
<i class="dp">··</i>
<i class="dp">··</i>
<i class="dp">··</i>
<i class="dp">··</i>
<i class="dp">··</i>
<i class="dp">··</i>
<i class="dp">··</i>
<i class="dp">··</i>
<i class="dp">··</i>
<i class="dp">··</i>
<i class="dp">··</i>
<i class="dp">··</i>
<i class="dp">··</i>
<i class="dp">··</i>
<i class="dp">··</i>
<i class="dp">··</i>
<i class="dp">··</i>
<i class="dp">··</i>
<i class="dp">··</i>
<i class="dp">··</i>
<i class="dp">··</i>
<i class="dp">··</i>
<i class="dp">··</i>
<i class="dp">··</i>
<i class="dp">··</i>
<i class="dp">··</i>
<i class="dp">··</i>
<i class="dp">··</i>
<i class="dp">··</i>
<i class="dp">··</i>
<i class="dp">··</i>
<i class="dp">··</i>
<i class="dp">··</i>
<i class="dp">··</i>
<i class="dp">··</i>
<i class="dx">··</i>
<i class="dx">··</i>
<i class="dx">··</i>
<i class="dx">··</i>
<i class="dx">··</i>
<i class="dx">··</i>
<i class="dx">··</i>
<i class="dx">··</i>
<i class="dx">··</i>
<i class="dx">··</i>
<i class="dx">··</i>
<i class="dx">··</i>
<i class="dx">··</i></div>
<div class="t" style="left:726.5px;top:242.1px">



<i class="dx">···</i>
<i class="dx">···</i>
<i class="dx">···</i>
<i class="dx">···</i>
<i class="dx">···</i>
<i class="dx">···</i>
<i class="dx">···</i>
<i class="dx">···</i>
<i class="dx">···</i>
<i class="dx">···</i>
<i class="dx">···</i>
<i class="dx">···</i>
<i class="dx">···</i>
<i class="dx">···</i>
<i class="dx">···</i>
<i class="dx">···</i>
<i class="dn">···</i>
<i class="dn">···</i>
<i class="dn">···</i>
<i class="dn">···</i>
<i class="dn">···</i>
<i class="dn">···</i>
<i class="dn">···</i>
<i class="dn">···</i>
<i class="dn">···</i>
<i class="dn">···</i>
<i class="dn">···</i>
<i class="dn">···</i>
<i class="dn">···</i>
<i class="dn">···</i>
<i class="dn">···</i>
<i class="dn">···</i>
<i class="dn">···</i>
<i class="dn">···</i>
<i class="dn">···</i>
<i class="dn">···</i>
<i class="dn">···</i>
<i class="dn">···</i>
<i class="dn">···</i>
<i class="dn">···</i>
<i class="dn">···</i>
<i class="dn">···</i>
<i class="dn">···</i>
<i class="dn">···</i>
<i class="dn">···</i>
<i class="dn">···</i>
<i class="dn">···</i>
<i class="dn">···</i>
<i class="dn">···</i>
<i class="dn">···</i>
<i class="dn">···</i>
<i class="dn">···</i>
<i class="dn">···</i>
<i class="dn">···</i>
<i class="dn">···</i>
<i class="dn">···</i>
<i class="dn">···</i>
<i class="dn">···</i>
<i class="dn">···</i>
<i class="dn">···</i>
<i class="dn">···</i>
<i class="dn">···</i>
<i class="dn">···</i>
<i class="dn">···</i>
<i class="dn">···</i>
<i class="dn">···</i>
<i class="dn">···</i>
<i class="dn">···</i>
<i class="dn">···</i>
<i class="dn">···</i>
<i class="dn">···</i>
<i class="dn">···</i>
<i class="dn">···</i>
<i class="dn">···</i>
<i class="dn">···</i>
<i class="dn">···</i>
<i class="dn">···</i>
<i class="dn">···</i>
<i class="dn">···</i>
<i class="dn">···</i>
<i class="dx">···</i>
<i class="dx">···</i>
<i class="dx">···</i>
<i class="dx">···</i>
<i class="dx">···</i>
<i class="dx">···</i>
<i class="dx">···</i>
<i class="dx">···</i>
<i class="dx">···</i>
<i class="dx">···</i>
<i class="dx">···</i>
<i class="dx">···</i>
<i class="dx">···</i></div>
<div class="t" style="left:751.5px;top:242.1px">



<i class="dx">··</i>
<i class="dx">··</i>
<i class="dx">··</i>
<i class="dx">··</i>
<i class="dx">··</i>
<i class="dx">··</i>
<i class="dx">··</i>
<i class="dx">··</i>
<i class="dx">··</i>
<i class="dx">··</i>
<i class="dx">··</i>
<i class="dx">··</i>
<i class="dx">··</i>
<i class="dx">··</i>
<i class="dx">··</i>
<i class="dx">··</i>
<i class="di">··</i>
<i class="di">··</i>
<i class="di">··</i>
<i class="di">··</i>
<i class="di">··</i>
<i class="di">··</i>
<i class="di">··</i>
<i class="di">··</i>
<i class="di">··</i>
<i class="di">··</i>
<i class="di">··</i>
<i class="di">··</i>
<i class="di">··</i>
<i class="di">··</i>
<i class="di">··</i>
<i class="di">··</i>
<i class="di">··</i>
<i class="di">··</i>
<i class="di">··</i>
<i class="di">··</i>
<i class="di">··</i>
<i class="di">··</i>
<i class="di">··</i>
<i class="di">··</i>
<i class="di">··</i>
<i class="di">··</i>
<i class="di">··</i>
<i class="di">··</i>
<i class="di">··</i>
<i class="di">··</i>
<i class="di">··</i>
<i class="di">··</i>
<i class="di">··</i>
<i class="di">··</i>
<i class="di">··</i>
<i class="di">··</i>
<i class="di">··</i>
<i class="di">··</i>
<i class="di">··</i>
<i class="di">··</i>
<i class="di">··</i>
<i class="di">··</i>
<i class="di">··</i>
<i class="di">··</i>
<i class="di">··</i>
<i class="di">··</i>
<i class="di">··</i>
<i class="di">··</i>
<i class="di">··</i>
<i class="di">··</i>
<i class="di">··</i>
<i class="di">··</i>
<i class="di">··</i>
<i class="di">··</i>
<i class="di">··</i>
<i class="di">··</i>
<i class="di">··</i>
<i class="di">··</i>
<i class="di">··</i>
<i class="di">··</i>
<i class="di">··</i>
<i class="di">··</i>
<i class="di">··</i>
<i class="di">··</i>
<i class="dx">··</i>
<i class="dx">··</i>
<i class="dx">··</i>
<i class="dx">··</i>
<i class="dx">··</i>
<i class="dx">··</i>
<i class="dx">··</i>
<i class="dx">··</i>
<i class="dx">··</i>
<i class="dx">··</i>
<i class="dx">··</i>
<i class="dx">··</i>
<i class="dx">··</i></div>
<div class="t" style="left:768.5px;top:242.1px">



<i class="dx">··</i>
<i class="dx">··</i>
<i class="dx">··</i>
<i class="dx">··</i>
<i class="dx">··</i>
<i class="dx">··</i>
<i class="dx">··</i>
<i class="dx">··</i>
<i class="dx">··</i>
<i class="dx">··</i>
<i class="dx">··</i>
<i class="dx">··</i>
<i class="dx">··</i>
<i class="dx">··</i>
<i class="dx">··</i>
<i class="dx">··</i>
<i class="dv">··</i>
<i class="dv">··</i>
<i class="dv">··</i>
<i class="dv">··</i>
<i class="dv">··</i>
<i class="dv">··</i>
<i class="dv">··</i>
<i class="dv">··</i>
<i class="dv">··</i>
<i class="dv">··</i>
<i class="dv">··</i>
<i class="dv">··</i>
<i class="dv">··</i>
<i class="dv">··</i>
<i class="dv">··</i>
<i class="dv">··</i>
<i class="dv">··</i>
<i class="dv">··</i>
<i class="dv">··</i>
<i class="dv">··</i>
<i class="dv">··</i>
<i class="dv">··</i>
<i class="dv">··</i>
<i class="dv">··</i>
<i class="dv">··</i>
<i class="dv">··</i>
<i class="dv">··</i>
<i class="dv">··</i>
<i class="dv">··</i>
<i class="dv">··</i>
<i class="dv">··</i>
<i class="dv">··</i>
<i class="dv">··</i>
<i class="dv">··</i>
<i class="dv">··</i>
<i class="dv">··</i>
<i class="dv">··</i>
<i class="dv">··</i>
<i class="dv">··</i>
<i class="dv">··</i>
<i class="dv">··</i>
<i class="dv">··</i>
<i class="dv">··</i>
<i class="dv">··</i>
<i class="dv">··</i>
<i class="dv">··</i>
<i class="dv">··</i>
<i class="dv">··</i>
<i class="dv">··</i>
<i class="dv">··</i>
<i class="dv">··</i>
<i class="dv">··</i>
<i class="dv">··</i>
<i class="dv">··</i>
<i class="dv">··</i>
<i class="dv">··</i>
<i class="dv">··</i>
<i class="dv">··</i>
<i class="dv">··</i>
<i class="dv">··</i>
<i class="dv">··</i>
<i class="dv">··</i>
<i class="dv">··</i>
<i class="dv">··</i>
<i class="dx">··</i>
<i class="dx">··</i>
<i class="dx">··</i>
<i class="dx">··</i>
<i class="dx">··</i>
<i class="dx">··</i>
<i class="dx">··</i>
<i class="dx">··</i>
<i class="dx">··</i>
<i class="dx">··</i>
<i class="dx">··</i>
<i class="dx">··</i>
<i class="dx">··</i></div>
<div class="t" style="left:785.5px;top:242.1px">



<i class="dx">·</i>
<i class="dx">·</i>
<i class="dx">·</i>
<i class="dx">·</i>
<i class="dx">·</i>
<i class="dx">·</i>
<i class="dx">·</i>
<i class="dx">·</i>
<i class="dx">·</i>
<i class="dx">·</i>
<i class="dx">·</i>
<i class="dx">·</i>
<i class="dx">·</i>
<i class="dx">·</i>
<i class="dx">·</i>
<i class="dx">·</i>
<i class="dt">·</i>
<i class="dt">·</i>
<i class="dt">·</i>
<i class="dt">·</i>
<i class="dt">·</i>
<i class="dt">·</i>
<i class="dt">·</i>
<i class="dt">·</i>
<i class="dt">·</i>
<i class="dt">·</i>
<i class="dt">·</i>
<i class="dt">·</i>
<i class="dt">·</i>
<i class="dt">·</i>
<i class="dt">·</i>
<i class="dt">·</i>
<i class="dt">·</i>
<i class="dt">·</i>
<i class="dt">·</i>
<i class="dt">·</i>
<i class="dt">·</i>
<i class="dt">·</i>
<i class="dt">·</i>
<i class="dt">·</i>
<i class="dt">·</i>
<i class="dt">·</i>
<i class="dt">·</i>
<i class="dt">·</i>
<i class="dt">·</i>
<i class="dt">·</i>
<i class="dt">·</i>
<i class="dt">·</i>
<i class="dt">·</i>
<i class="dt">·</i>
<i class="dt">·</i>
<i class="dt">·</i>
<i class="dt">·</i>
<i class="dt">·</i>
<i class="dt">·</i>
<i class="dt">·</i>
<i class="dt">·</i>
<i class="dt">·</i>
<i class="dt">·</i>
<i class="dt">·</i>
<i class="dt">·</i>
<i class="dt">·</i>
<i class="dt">·</i>
<i class="dt">·</i>
<i class="dt">·</i>
<i class="dt">·</i>
<i class="dt">·</i>
<i class="dt">·</i>
<i class="dt">·</i>
<i class="dt">·</i>
<i class="dt">·</i>
<i class="dt">·</i>
<i class="dt">·</i>
<i class="dt">·</i>
<i class="dt">·</i>
<i class="dt">·</i>
<i class="dt">·</i>
<i class="dt">·</i>
<i class="dt">·</i>
<i class="dt">·</i>
<i class="dx">·</i>
<i class="dx">·</i>
<i class="dx">·</i>
<i class="dx">·</i>
<i class="dx">·</i>
<i class="dx">·</i>
<i class="dx">·</i>
<i class="dx">·</i>
<i class="dx">·</i>
<i class="dx">·</i>
<i class="dx">·</i>
<i class="dx">·</i>
<i class="dx">·</i></div>
<div class="t" style="left:794.7px;top:242.1px">



<i class="dx">··</i>
<i class="dx">··</i>
<i class="dx">··</i>
<i class="dx">··</i>
<i class="dx">··</i>
<i class="dx">··</i>
<i class="dx">··</i>
<i class="dx">··</i>
<i class="dx">··</i>
<i class="dx">··</i>
<i class="dx">··</i>
<i class="dx">··</i>
<i class="dx">··</i>
<i class="dx">··</i>
<i class="dx">··</i>
<i class="dx">··</i>
<i class="dp">··</i>
<i class="dp">··</i>
<i class="dp">··</i>
<i class="dp">··</i>
<i class="dp">··</i>
<i class="dp">··</i>
<i class="dp">··</i>
<i class="dp">··</i>
<i class="dp">··</i>
<i class="dp">··</i>
<i class="dp">··</i>
<i class="dp">··</i>
<i class="dp">··</i>
<i class="dp">··</i>
<i class="dp">··</i>
<i class="dp">··</i>
<i class="dp">··</i>
<i class="dp">··</i>
<i class="dp">··</i>
<i class="dp">··</i>
<i class="dp">··</i>
<i class="dp">··</i>
<i class="dp">··</i>
<i class="dp">··</i>
<i class="dp">··</i>
<i class="dp">··</i>
<i class="dp">··</i>
<i class="dp">··</i>
<i class="dp">··</i>
<i class="dp">··</i>
<i class="dp">··</i>
<i class="dp">··</i>
<i class="dp">··</i>
<i class="dp">··</i>
<i class="dp">··</i>
<i class="dp">··</i>
<i class="dp">··</i>
<i class="dp">··</i>
<i class="dp">··</i>
<i class="dp">··</i>
<i class="dp">··</i>
<i class="dp">··</i>
<i class="dp">··</i>
<i class="dp">··</i>
<i class="dp">··</i>
<i class="dp">··</i>
<i class="dp">··</i>
<i class="dp">··</i>
<i class="dp">··</i>
<i class="dp">··</i>
<i class="dp">··</i>
<i class="dp">··</i>
<i class="dp">··</i>
<i class="dp">··</i>
<i class="dp">··</i>
<i class="dp">··</i>
<i class="dp">··</i>
<i class="dp">··</i>
<i class="dp">··</i>
<i class="dp">··</i>
<i class="dp">··</i>
<i class="dp">··</i>
<i class="dp">··</i>
<i class="dp">··</i>
<i class="dx">··</i>
<i class="dx">··</i>
<i class="dx">··</i>
<i class="dx">··</i>
<i class="dx">··</i>
<i class="dx">··</i>
<i class="dx">··</i>
<i class="dx">··</i>
<i class="dx">··</i>
<i class="dx">··</i>
<i class="dx">··</i>
<i class="dx">··</i>
<i class="dx">··</i></div>
<div class="t" style="left:813.5px;top:242.1px">



<i class="dx">···</i>
<i class="dx">···</i>
<i class="dx">···</i>
<i class="dx">···</i>
<i class="dx">···</i>
<i class="dx">···</i>
<i class="dx">···</i>
<i class="dx">···</i>
<i class="dx">···</i>
<i class="dx">···</i>
<i class="dx">···</i>
<i class="dx">···</i>
<i class="dx">···</i>
<i class="dx">···</i>
<i class="dx">···</i>
<i class="dx">···</i>
<i class="dn">···</i>
<i class="dn">···</i>
<i class="dn">···</i>
<i class="dn">···</i>
<i class="dn">···</i>
<i class="dn">···</i>
<i class="dn">···</i>
<i class="dn">···</i>
<i class="dn">···</i>
<i class="dn">···</i>
<i class="dn">···</i>
<i class="dn">···</i>
<i class="dn">···</i>
<i class="dn">···</i>
<i class="dn">···</i>
<i class="dn">···</i>
<i class="dn">···</i>
<i class="dn">···</i>
<i class="dn">···</i>
<i class="dn">···</i>
<i class="dn">···</i>
<i class="dn">···</i>
<i class="dn">···</i>
<i class="dn">···</i>
<i class="dn">···</i>
<i class="dn">···</i>
<i class="dn">···</i>
<i class="dn">···</i>
<i class="dn">···</i>
<i class="dn">···</i>
<i class="dn">···</i>
<i class="dn">···</i>
<i class="dn">···</i>
<i class="dn">···</i>
<i class="dn">···</i>
<i class="dn">···</i>
<i class="dn">···</i>
<i class="dn">···</i>
<i class="dn">···</i>
<i class="dn">···</i>
<i class="dn">···</i>
<i class="dn">···</i>
<i class="dn">···</i>
<i class="dn">···</i>
<i class="dn">···</i>
<i class="dn">···</i>
<i class="dn">···</i>
<i class="dn">···</i>
<i class="dn">···</i>
<i class="dn">···</i>
<i class="dn">···</i>
<i class="dn">···</i>
<i class="dn">···</i>
<i class="dn">···</i>
<i class="dn">···</i>
<i class="dn">···</i>
<i class="dn">···</i>
<i class="dn">···</i>
<i class="dn">···</i>
<i class="dn">···</i>
<i class="dn">···</i>
<i class="dn">···</i>
<i class="dn">···</i>
<i class="dn">···</i>
<i class="dx">···</i>
<i class="dx">···</i>
<i class="dx">···</i>
<i class="dx">···</i>
<i class="dx">···</i>
<i class="dx">···</i>
<i class="dx">···</i>
<i class="dx">···</i>
<i class="dx">···</i>
<i class="dx">···</i>
<i class="dx">···</i>
<i class="dx">···</i>
<i class="dx">···</i></div>
<div class="t" style="left:838.5px;top:242.1px">



<i class="dx">··</i>
<i class="dx">··</i>
<i class="dx">··</i>
<i class="dx">··</i>
<i class="dx">··</i>
<i class="dx">··</i>
<i class="dx">··</i>
<i class="dx">··</i>
<i class="dx">··</i>
<i class="dx">··</i>
<i class="dx">··</i>
<i class="dx">··</i>
<i class="dx">··</i>
<i class="dx">··</i>
<i class="dx">··</i>
<i class="dx">··</i>
<i class="di">··</i>
<i class="di">··</i>
<i class="di">··</i>
<i class="di">··</i>
<i class="di">··</i>
<i class="di">··</i>
<i class="di">··</i>
<i class="di">··</i>
<i class="di">··</i>
<i class="di">··</i>
<i class="di">··</i>
<i class="di">··</i>
<i class="di">··</i>
<i class="di">··</i>
<i class="di">··</i>
<i class="di">··</i>
<i class="di">··</i>
<i class="di">··</i>
<i class="di">··</i>
<i class="di">··</i>
<i class="di">··</i>
<i class="di">··</i>
<i class="di">··</i>
<i class="di">··</i>
<i class="di">··</i>
<i class="di">··</i>
<i class="di">··</i>
<i class="di">··</i>
<i class="di">··</i>
<i class="di">··</i>
<i class="di">··</i>
<i class="di">··</i>
<i class="di">··</i>
<i class="di">··</i>
<i class="di">··</i>
<i class="di">··</i>
<i class="di">··</i>
<i class="di">··</i>
<i class="di">··</i>
<i class="di">··</i>
<i class="di">··</i>
<i class="di">··</i>
<i class="di">··</i>
<i class="di">··</i>
<i class="di">··</i>
<i class="di">··</i>
<i class="di">··</i>
<i class="di">··</i>
<i class="di">··</i>
<i class="di">··</i>
<i class="di">··</i>
<i class="di">··</i>
<i class="di">··</i>
<i class="di">··</i>
<i class="di">··</i>
<i class="di">··</i>
<i class="di">··</i>
<i class="di">··</i>
<i class="di">··</i>
<i class="di">··</i>
<i class="di">··</i>
<i class="di">··</i>
<i class="di">··</i>
<i class="di">··</i>
<i class="dx">··</i>
<i class="dx">··</i>
<i class="dx">··</i>
<i class="dx">··</i>
<i class="dx">··</i>
<i class="dx">··</i>
<i class="dx">··</i>
<i class="dx">··</i>
<i class="dx">··</i>
<i class="dx">··</i>
<i class="dx">··</i>
<i class="dx">··</i>
<i class="dx">··</i></div>
<div class="t" style="left:855.5px;top:242.1px">



<i class="dx">··</i>
<i class="dx">··</i>
<i class="dx">··</i>
<i class="dx">··</i>
<i class="dx">··</i>
<i class="dx">··</i>
<i class="dx">··</i>
<i class="dx">··</i>
<i class="dx">··</i>
<i class="dx">··</i>
<i class="dx">··</i>
<i class="dx">··</i>
<i class="dx">··</i>
<i class="dx">··</i>
<i class="dx">··</i>
<i class="dx">··</i>
<i class="dv">··</i>
<i class="dv">··</i>
<i class="dv">··</i>
<i class="dv">··</i>
<i class="dv">··</i>
<i class="dv">··</i>
<i class="dv">··</i>
<i class="dv">··</i>
<i class="dv">··</i>
<i class="dv">··</i>
<i class="dv">··</i>
<i class="dv">··</i>
<i class="dv">··</i>
<i class="dv">··</i>
<i class="dv">··</i>
<i class="dv">··</i>
<i class="dv">··</i>
<i class="dv">··</i>
<i class="dv">··</i>
<i class="dv">··</i>
<i class="dv">··</i>
<i class="dv">··</i>
<i class="dv">··</i>
<i class="dv">··</i>
<i class="dv">··</i>
<i class="dv">··</i>
<i class="dv">··</i>
<i class="dv">··</i>
<i class="dv">··</i>
<i class="dv">··</i>
<i class="dv">··</i>
<i class="dv">··</i>
<i class="dv">··</i>
<i class="dv">··</i>
<i class="dv">··</i>
<i class="dv">··</i>
<i class="dv">··</i>
<i class="dv">··</i>
<i class="dv">··</i>
<i class="dv">··</i>
<i class="dv">··</i>
<i class="dv">··</i>
<i class="dv">··</i>
<i class="dv">··</i>
<i class="dv">··</i>
<i class="dv">··</i>
<i class="dv">··</i>
<i class="dv">··</i>
<i class="dv">··</i>
<i class="dv">··</i>
<i class="dv">··</i>
<i class="dv">··</i>
<i class="dv">··</i>
<i class="dv">··</i>
<i class="dv">··</i>
<i class="dv">··</i>
<i class="dv">··</i>
<i class="dv">··</i>
<i class="dv">··</i>
<i class="dv">··</i>
<i class="dv">··</i>
<i class="dv">··</i>
<i class="dv">··</i>
<i class="dv">··</i>
<i class="dx">··</i>
<i class="dx">··</i>
<i class="dx">··</i>
<i class="dx">··</i>
<i class="dx">··</i>
<i class="dx">··</i>
<i class="dx">··</i>
<i class="dx">··</i>
<i class="dx">··</i>
<i class="dx">··</i>
<i class="dx">··</i>
<i class="dx">··</i>
<i class="dx">··</i></div>
<div class="t" style="left:872.5px;top:242.1px">



<i class="dx">·</i>
<i class="dx">·</i>
<i class="dx">·</i>
<i class="dx">·</i>
<i class="dx">·</i>
<i class="dx">·</i>
<i class="dx">·</i>
<i class="dx">·</i>
<i class="dx">·</i>
<i class="dx">·</i>
<i class="dx">·</i>
<i class="dx">·</i>
<i class="dx">·</i>
<i class="dx">·</i>
<i class="dx">·</i>
<i class="dx">·</i>
<i class="dt">·</i>
<i class="dt">·</i>
<i class="dt">·</i>
<i class="dt">·</i>
<i class="dt">·</i>
<i class="dt">·</i>
<i class="dt">·</i>
<i class="dt">·</i>
<i class="dt">·</i>
<i class="dt">·</i>
<i class="dt">·</i>
<i class="dt">·</i>
<i class="dt">·</i>
<i class="dt">·</i>
<i class="dt">·</i>
<i class="dt">·</i>
<i class="dt">·</i>
<i class="dt">·</i>
<i class="dt">·</i>
<i class="dt">·</i>
<i class="dt">·</i>
<i class="dt">·</i>
<i class="dt">·</i>
<i class="dt">·</i>
<i class="dt">·</i>
<i class="dt">·</i>
<i class="dt">·</i>
<i class="dt">·</i>
<i class="dt">·</i>
<i class="dt">·</i>
<i class="dt">·</i>
<i class="dt">·</i>
<i class="dt">·</i>
<i class="dt">·</i>
<i class="dt">·</i>
<i class="dt">·</i>
<i class="dt">·</i>
<i class="dt">·</i>
<i class="dt">·</i>
<i class="dt">·</i>
<i class="dt">·</i>
<i class="dt">·</i>
<i class="dt">·</i>
<i class="dt">·</i>
<i class="dt">·</i>
<i class="dt">·</i>
<i class="dt">·</i>
<i class="dt">·</i>
<i class="dt">·</i>
<i class="dt">·</i>
<i class="dt">·</i>
<i class="dt">·</i>
<i class="dt">·</i>
<i class="dt">·</i>
<i class="dt">·</i>
<i class="dt">·</i>
<i class="dt">·</i>
<i class="dt">·</i>
<i class="dt">·</i>
<i class="dt">·</i>
<i class="dt">·</i>
<i class="dt">·</i>
<i class="dt">·</i>
<i class="dt">·</i>
<i class="dx">·</i>
<i class="dx">·</i>
<i class="dx">·</i>
<i class="dx">·</i>
<i class="dx">·</i>
<i class="dx">·</i>
<i class="dx">·</i>
<i class="dx">·</i>
<i class="dx">·</i>
<i class="dx">·</i>
<i class="dx">·</i>
<i class="dx">·</i>
<i class="dx">·</i></div>
<div class="t" style="left:881.7px;top:242.1px">



<i class="dx">··</i>
<i class="dx">··</i>
<i class="dx">··</i>
<i class="dx">··</i>
<i class="dx">··</i>
<i class="dx">··</i>
<i class="dx">··</i>
<i class="dx">··</i>
<i class="dx">··</i>
<i class="dx">··</i>
<i class="dx">··</i>
<i class="dx">··</i>
<i class="dx">··</i>
<i class="dx">··</i>
<i class="dx">··</i>
<i class="dx">··</i>
<i class="dp">··</i>
<i class="dp">··</i>
<i class="dp">··</i>
<i class="dp">··</i>
<i class="dp">··</i>
<i class="dp">··</i>
<i class="dp">··</i>
<i class="dp">··</i>
<i class="dp">··</i>
<i class="dp">··</i>
<i class="dp">··</i>
<i class="dp">··</i>
<i class="dp">··</i>
<i class="dp">··</i>
<i class="dp">··</i>
<i class="dp">··</i>
<i class="dp">··</i>
<i class="dp">··</i>
<i class="dp">··</i>
<i class="dp">··</i>
<i class="dp">··</i>
<i class="dp">··</i>
<i class="dp">··</i>
<i class="dp">··</i>
<i class="dp">··</i>
<i class="dp">··</i>
<i class="dp">··</i>
<i class="dp">··</i>
<i class="dp">··</i>
<i class="dp">··</i>
<i class="dp">··</i>
<i class="dp">··</i>
<i class="dp">··</i>
<i class="dp">··</i>
<i class="dp">··</i>
<i class="dp">··</i>
<i class="dp">··</i>
<i class="dp">··</i>
<i class="dp">··</i>
<i class="dp">··</i>
<i class="dp">··</i>
<i class="dp">··</i>
<i class="dp">··</i>
<i class="dp">··</i>
<i class="dp">··</i>
<i class="dp">··</i>
<i class="dp">··</i>
<i class="dp">··</i>
<i class="dp">··</i>
<i class="dp">··</i>
<i class="dp">··</i>
<i class="dp">··</i>
<i class="dp">··</i>
<i class="dp">··</i>
<i class="dp">··</i>
<i class="dp">··</i>
<i class="dp">··</i>
<i class="dp">··</i>
<i class="dp">··</i>
<i class="dp">··</i>
<i class="dp">··</i>
<i class="dp">··</i>
<i class="dp">··</i>
<i class="dp">··</i>
<i class="dx">··</i>
<i class="dx">··</i>
<i class="dx">··</i>
<i class="dx">··</i>
<i class="dx">··</i>
<i class="dx">··</i>
<i class="dx">··</i>
<i class="dx">··</i>
<i class="dx">··</i>
<i class="dx">··</i>
<i class="dx">··</i>
<i class="dx">··</i>
<i class="dx">··</i></div>
<div class="t" style="left:900.5px;top:242.1px">



<i class="dx">···</i>
<i class="dx">···</i>
<i class="dx">···</i>
<i class="dx">···</i>
<i class="dx">···</i>
<i class="dx">···</i>
<i class="dx">···</i>
<i class="dx">···</i>
<i class="dx">···</i>
<i class="dx">···</i>
<i class="pn">C−6</i>

<i class="dx">···</i>
<i class="dx">···</i>
<i class="dx">···</i>
<i class="dx">···</i>
<i class="dn">···</i>
<i class="dn">···</i>
<i class="dn">···</i>
<i class="dn">···</i>
<i class="cn">C−6</i>

<i class="dn">···</i>
<i class="dn">···</i>
<i class="dn">···</i>
<i class="dn">···</i>
<i class="dn">···</i>
<i class="dn">···</i>
<i class="dn">···</i>
<i class="dn">···</i>
<i class="dn">···</i>
<i class="dn">···</i>
<i class="dn">···</i>
<i class="dn">···</i>
<i class="dn">···</i>
<i class="dn">···</i>
<i class="cn">C−6</i>

<i class="dn">···</i>
<i class="dn">···</i>
<i class="dn">···</i>
<i class="dn">···</i>
<i class="dn">···</i>
<i class="dn">···</i>
<i class="dn">···</i>
<i class="dn">···</i>
<i class="dn">···</i>
<i class="dn">···</i>
<i class="dn">···</i>
<i class="dn">···</i>
<i class="dn">···</i>
<i class="dn">···</i>
<i class="cn">C−6</i>

<i class="dn">···</i>
<i class="dn">···</i>
<i class="dn">···</i>
<i class="dn">···</i>
<i class="dn">···</i>
<i class="dn">···</i>
<i class="dn">···</i>
<i class="dn">···</i>
<i class="dn">···</i>
<i class="dn">···</i>
<i class="dn">···</i>
<i class="dn">···</i>
<i class="dn">···</i>
<i class="dn">···</i>
<i class="cn">G−6</i>

<i class="dn">···</i>
<i class="dn">···</i>
<i class="dn">···</i>
<i class="dn">···</i>
<i class="dn">···</i>
<i class="dn">···</i>
<i class="dn">···</i>
<i class="dn">···</i>
<i class="dn">···</i>
<i class="dn">···</i>
<i class="dx">···</i>
<i class="dx">···</i>
<i class="dx">···</i>
<i class="dx">···</i>
<i class="pn">C−6</i>

<i class="dx">···</i>
<i class="dx">···</i>
<i class="dx">···</i>
<i class="dx">···</i>
<i class="dx">···</i>
<i class="dx">···</i>
<i class="dx">···</i></div>
<div class="t" style="left:925.5px;top:242.1px">



<i class="dx">··</i>
<i class="dx">··</i>
<i class="dx">··</i>
<i class="dx">··</i>
<i class="dx">··</i>
<i class="dx">··</i>
<i class="dx">··</i>
<i class="dx">··</i>
<i class="dx">··</i>
<i class="dx">··</i>
<i class="pn">1E</i>
<i class="dx">··</i>
<i class="dx">··</i>
<i class="dx">··</i>
<i class="dx">··</i>
<i class="dx">··</i>
<i class="di">··</i>
<i class="di">··</i>
<i class="di">··</i>
<i class="di">··</i>
<i class="ci">1E</i>
<i class="di">··</i>
<i class="di">··</i>
<i class="di">··</i>
<i class="di">··</i>
<i class="di">··</i>
<i class="di">··</i>
<i class="di">··</i>
<i class="di">··</i>
<i class="di">··</i>
<i class="di">··</i>
<i class="di">··</i>
<i class="di">··</i>
<i class="di">··</i>
<i class="di">··</i>
<i class="di">··</i>
<i class="ci">1E</i>
<i class="di">··</i>
<i class="di">··</i>
<i class="di">··</i>
<i class="di">··</i>
<i class="di">··</i>
<i class="di">··</i>
<i class="di">··</i>
<i class="di">··</i>
<i class="di">··</i>
<i class="di">··</i>
<i class="di">··</i>
<i class="di">··</i>
<i class="di">··</i>
<i class="di">··</i>
<i class="di">··</i>
<i class="ci">1E</i>
<i class="di">··</i>
<i class="di">··</i>
<i class="di">··</i>
<i class="di">··</i>
<i class="di">··</i>
<i class="di">··</i>
<i class="di">··</i>
<i class="di">··</i>
<i class="di">··</i>
<i class="di">··</i>
<i class="di">··</i>
<i class="di">··</i>
<i class="di">··</i>
<i class="di">··</i>
<i class="di">··</i>
<i class="ci">1E</i>
<i class="di">··</i>
<i class="di">··</i>
<i class="di">··</i>
<i class="di">··</i>
<i class="di">··</i>
<i class="di">··</i>
<i class="di">··</i>
<i class="di">··</i>
<i class="di">··</i>
<i class="di">··</i>
<i class="di">··</i>
<i class="dx">··</i>
<i class="dx">··</i>
<i class="dx">··</i>
<i class="dx">··</i>
<i class="pn">1E</i>
<i class="dx">··</i>
<i class="dx">··</i>
<i class="dx">··</i>
<i class="dx">··</i>
<i class="dx">··</i>
<i class="dx">··</i>
<i class="dx">··</i>
<i class="dx">··</i></div>
<div class="t" style="left:942.5px;top:242.1px">



<i class="dx">··</i>
<i class="dx">··</i>
<i class="dx">··</i>
<i class="dx">··</i>
<i class="dx">··</i>
<i class="dx">··</i>
<i class="dx">··</i>
<i class="dx">··</i>
<i class="dx">··</i>
<i class="dx">··</i>
<i class="dx">··</i>
<i class="dx">··</i>
<i class="dx">··</i>
<i class="dx">··</i>
<i class="dx">··</i>
<i class="dx">··</i>
<i class="dv">··</i>
<i class="dv">··</i>
<i class="dv">··</i>
<i class="dv">··</i>
<i class="dv">··</i>
<i class="dv">··</i>
<i class="dv">··</i>
<i class="dv">··</i>
<i class="dv">··</i>
<i class="dv">··</i>
<i class="dv">··</i>
<i class="dv">··</i>
<i class="dv">··</i>
<i class="dv">··</i>
<i class="dv">··</i>
<i class="dv">··</i>
<i class="dv">··</i>
<i class="dv">··</i>
<i class="dv">··</i>
<i class="dv">··</i>
<i class="dv">··</i>
<i class="dv">··</i>
<i class="dv">··</i>
<i class="dv">··</i>
<i class="dv">··</i>
<i class="dv">··</i>
<i class="dv">··</i>
<i class="dv">··</i>
<i class="dv">··</i>
<i class="dv">··</i>
<i class="dv">··</i>
<i class="dv">··</i>
<i class="dv">··</i>
<i class="dv">··</i>
<i class="dv">··</i>
<i class="dv">··</i>
<i class="dv">··</i>
<i class="dv">··</i>
<i class="dv">··</i>
<i class="dv">··</i>
<i class="dv">··</i>
<i class="dv">··</i>
<i class="dv">··</i>
<i class="dv">··</i>
<i class="dv">··</i>
<i class="dv">··</i>
<i class="dv">··</i>
<i class="dv">··</i>
<i class="dv">··</i>
<i class="dv">··</i>
<i class="dv">··</i>
<i class="dv">··</i>
<i class="dv">··</i>
<i class="dv">··</i>
<i class="dv">··</i>
<i class="dv">··</i>
<i class="dv">··</i>
<i class="dv">··</i>
<i class="dv">··</i>
<i class="dv">··</i>
<i class="dv">··</i>
<i class="dv">··</i>
<i class="dv">··</i>
<i class="dv">··</i>
<i class="dx">··</i>
<i class="dx">··</i>
<i class="dx">··</i>
<i class="dx">··</i>
<i class="dx">··</i>
<i class="dx">··</i>
<i class="dx">··</i>
<i class="dx">··</i>
<i class="dx">··</i>
<i class="dx">··</i>
<i class="dx">··</i>
<i class="dx">··</i>
<i class="dx">··</i></div>
<div class="t" style="left:959.5px;top:242.1px">



<i class="dx">·</i>
<i class="dx">·</i>
<i class="dx">·</i>
<i class="dx">·</i>
<i class="dx">·</i>
<i class="dx">·</i>
<i class="dx">·</i>
<i class="dx">·</i>
<i class="dx">·</i>
<i class="dx">·</i>
<i class="dx">·</i>
<i class="dx">·</i>
<i class="dx">·</i>
<i class="dx">·</i>
<i class="dx">·</i>
<i class="dx">·</i>
<i class="dt">·</i>
<i class="dt">·</i>
<i class="dt">·</i>
<i class="dt">·</i>
<i class="dt">·</i>
<i class="dt">·</i>
<i class="dt">·</i>
<i class="dt">·</i>
<i class="dt">·</i>
<i class="dt">·</i>
<i class="dt">·</i>
<i class="dt">·</i>
<i class="dt">·</i>
<i class="dt">·</i>
<i class="dt">·</i>
<i class="dt">·</i>
<i class="dt">·</i>
<i class="dt">·</i>
<i class="dt">·</i>
<i class="dt">·</i>
<i class="dt">·</i>
<i class="dt">·</i>
<i class="dt">·</i>
<i class="dt">·</i>
<i class="dt">·</i>
<i class="dt">·</i>
<i class="dt">·</i>
<i class="dt">·</i>
<i class="dt">·</i>
<i class="dt">·</i>
<i class="dt">·</i>
<i class="dt">·</i>
<i class="dt">·</i>
<i class="dt">·</i>
<i class="dt">·</i>
<i class="dt">·</i>
<i class="dt">·</i>
<i class="dt">·</i>
<i class="dt">·</i>
<i class="dt">·</i>
<i class="dt">·</i>
<i class="dt">·</i>
<i class="dt">·</i>
<i class="dt">·</i>
<i class="dt">·</i>
<i class="dt">·</i>
<i class="dt">·</i>
<i class="dt">·</i>
<i class="dt">·</i>
<i class="dt">·</i>
<i class="dt">·</i>
<i class="dt">·</i>
<i class="dt">·</i>
<i class="dt">·</i>
<i class="dt">·</i>
<i class="dt">·</i>
<i class="dt">·</i>
<i class="dt">·</i>
<i class="dt">·</i>
<i class="dt">·</i>
<i class="dt">·</i>
<i class="dt">·</i>
<i class="dt">·</i>
<i class="dt">·</i>
<i class="dx">·</i>
<i class="dx">·</i>
<i class="dx">·</i>
<i class="dx">·</i>
<i class="dx">·</i>
<i class="dx">·</i>
<i class="dx">·</i>
<i class="dx">·</i>
<i class="dx">·</i>
<i class="dx">·</i>
<i class="dx">·</i>
<i class="dx">·</i>
<i class="dx">·</i></div>
<div class="t" style="left:968.7px;top:242.1px">



<i class="dx">··</i>
<i class="dx">··</i>
<i class="dx">··</i>
<i class="dx">··</i>
<i class="dx">··</i>
<i class="dx">··</i>
<i class="dx">··</i>
<i class="dx">··</i>
<i class="dx">··</i>
<i class="dx">··</i>
<i class="dx">··</i>
<i class="dx">··</i>
<i class="dx">··</i>
<i class="dx">··</i>
<i class="dx">··</i>
<i class="dx">··</i>
<i class="dp">··</i>
<i class="dp">··</i>
<i class="dp">··</i>
<i class="dp">··</i>
<i class="dp">··</i>
<i class="dp">··</i>
<i class="dp">··</i>
<i class="dp">··</i>
<i class="dp">··</i>
<i class="dp">··</i>
<i class="dp">··</i>
<i class="dp">··</i>
<i class="dp">··</i>
<i class="dp">··</i>
<i class="dp">··</i>
<i class="dp">··</i>
<i class="dp">··</i>
<i class="dp">··</i>
<i class="dp">··</i>
<i class="dp">··</i>
<i class="dp">··</i>
<i class="dp">··</i>
<i class="dp">··</i>
<i class="dp">··</i>
<i class="dp">··</i>
<i class="dp">··</i>
<i class="dp">··</i>
<i class="dp">··</i>
<i class="dp">··</i>
<i class="dp">··</i>
<i class="dp">··</i>
<i class="dp">··</i>
<i class="dp">··</i>
<i class="dp">··</i>
<i class="dp">··</i>
<i class="dp">··</i>
<i class="dp">··</i>
<i class="dp">··</i>
<i class="dp">··</i>
<i class="dp">··</i>
<i class="dp">··</i>
<i class="dp">··</i>
<i class="dp">··</i>
<i class="dp">··</i>
<i class="dp">··</i>
<i class="dp">··</i>
<i class="dp">··</i>
<i class="dp">··</i>
<i class="dp">··</i>
<i class="dp">··</i>
<i class="dp">··</i>
<i class="dp">··</i>
<i class="dp">··</i>
<i class="dp">··</i>
<i class="dp">··</i>
<i class="dp">··</i>
<i class="dp">··</i>
<i class="dp">··</i>
<i class="dp">··</i>
<i class="dp">··</i>
<i class="dp">··</i>
<i class="dp">··</i>
<i class="dp">··</i>
<i class="dp">··</i>
<i class="dx">··</i>
<i class="dx">··</i>
<i class="dx">··</i>
<i class="dx">··</i>
<i class="dx">··</i>
<i class="dx">··</i>
<i class="dx">··</i>
<i class="dx">··</i>
<i class="dx">··</i>
<i class="dx">··</i>
<i class="dx">··</i>
<i class="dx">··</i>
<i class="dx">··</i></div>
<div class="t" style="left:987.5px;top:242.1px">



<i class="dx">···</i>
<i class="dx">···</i>
<i class="dx">···</i>
<i class="dx">···</i>
<i class="dx">···</i>
<i class="dx">···</i>
<i class="dx">···</i>
<i class="dx">···</i>
<i class="dx">···</i>
<i class="dx">···</i>
<i class="dx">···</i>
<i class="dx">···</i>
<i class="pn">G−6</i>

<i class="dx">···</i>
<i class="dx">···</i>
<i class="dn">···</i>
<i class="dn">···</i>
<i class="dn">···</i>
<i class="dn">···</i>
<i class="dn">···</i>
<i class="dn">···</i>
<i class="cn">G−6</i>

<i class="dn">···</i>
<i class="dn">···</i>
<i class="dn">···</i>
<i class="dn">···</i>
<i class="dn">···</i>
<i class="dn">···</i>
<i class="dn">···</i>
<i class="dn">···</i>
<i class="dn">···</i>
<i class="dn">···</i>
<i class="dn">···</i>
<i class="dn">···</i>
<i class="dn">···</i>
<i class="dn">···</i>
<i class="cn">D−6</i>

<i class="dn">···</i>
<i class="dn">···</i>
<i class="dn">···</i>
<i class="dn">···</i>
<i class="dn">···</i>
<i class="dn">···</i>
<i class="dn">···</i>
<i class="dn">···</i>
<i class="dn">···</i>
<i class="dn">···</i>
<i class="dn">···</i>
<i class="dn">···</i>
<i class="dn">···</i>
<i class="dn">···</i>
<i class="cn">D−6</i>

<i class="dn">···</i>
<i class="dn">···</i>
<i class="dn">···</i>
<i class="dn">···</i>
<i class="dn">···</i>
<i class="dn">···</i>
<i class="dn">···</i>
<i class="dn">···</i>
<i class="dn">···</i>
<i class="dn">···</i>
<i class="dn">···</i>
<i class="dn">···</i>
<i class="dn">···</i>
<i class="dn">···</i>
<i class="cn">F−6</i>

<i class="dn">···</i>
<i class="dn">···</i>
<i class="dn">···</i>
<i class="dn">···</i>
<i class="dn">···</i>
<i class="dn">···</i>
<i class="dn">···</i>
<i class="dn">···</i>
<i class="dx">···</i>
<i class="dx">···</i>
<i class="dx">···</i>
<i class="dx">···</i>
<i class="dx">···</i>
<i class="dx">···</i>
<i class="pn">G−6</i>

<i class="dx">···</i>
<i class="dx">···</i>
<i class="dx">···</i>
<i class="dx">···</i>
<i class="dx">···</i></div>
<div class="t" style="left:1012.5px;top:242.1px">



<i class="dx">··</i>
<i class="dx">··</i>
<i class="dx">··</i>
<i class="dx">··</i>
<i class="dx">··</i>
<i class="dx">··</i>
<i class="dx">··</i>
<i class="dx">··</i>
<i class="dx">··</i>
<i class="dx">··</i>
<i class="dx">··</i>
<i class="dx">··</i>
<i class="pn">1E</i>
<i class="dx">··</i>
<i class="dx">··</i>
<i class="dx">··</i>
<i class="di">··</i>
<i class="di">··</i>
<i class="di">··</i>
<i class="di">··</i>
<i class="di">··</i>
<i class="di">··</i>
<i class="ci">1E</i>
<i class="di">··</i>
<i class="di">··</i>
<i class="di">··</i>
<i class="di">··</i>
<i class="di">··</i>
<i class="di">··</i>
<i class="di">··</i>
<i class="di">··</i>
<i class="di">··</i>
<i class="di">··</i>
<i class="di">··</i>
<i class="di">··</i>
<i class="di">··</i>
<i class="di">··</i>
<i class="di">··</i>
<i class="ci">1E</i>
<i class="di">··</i>
<i class="di">··</i>
<i class="di">··</i>
<i class="di">··</i>
<i class="di">··</i>
<i class="di">··</i>
<i class="di">··</i>
<i class="di">··</i>
<i class="di">··</i>
<i class="di">··</i>
<i class="di">··</i>
<i class="di">··</i>
<i class="di">··</i>
<i class="di">··</i>
<i class="di">··</i>
<i class="ci">1E</i>
<i class="di">··</i>
<i class="di">··</i>
<i class="di">··</i>
<i class="di">··</i>
<i class="di">··</i>
<i class="di">··</i>
<i class="di">··</i>
<i class="di">··</i>
<i class="di">··</i>
<i class="di">··</i>
<i class="di">··</i>
<i class="di">··</i>
<i class="di">··</i>
<i class="di">··</i>
<i class="di">··</i>
<i class="ci">1E</i>
<i class="di">··</i>
<i class="di">··</i>
<i class="di">··</i>
<i class="di">··</i>
<i class="di">··</i>
<i class="di">··</i>
<i class="di">··</i>
<i class="di">··</i>
<i class="di">··</i>
<i class="dx">··</i>
<i class="dx">··</i>
<i class="dx">··</i>
<i class="dx">··</i>
<i class="dx">··</i>
<i class="dx">··</i>
<i class="pn">1E</i>
<i class="dx">··</i>
<i class="dx">··</i>
<i class="dx">··</i>
<i class="dx">··</i>
<i class="dx">··</i>
<i class="dx">··</i></div>
<div class="t" style="left:1029.5px;top:242.1px">



<i class="dx">··</i>
<i class="dx">··</i>
<i class="dx">··</i>
<i class="dx">··</i>
<i class="dx">··</i>
<i class="dx">··</i>
<i class="dx">··</i>
<i class="dx">··</i>
<i class="dx">··</i>
<i class="dx">··</i>
<i class="dx">··</i>
<i class="dx">··</i>
<i class="dx">··</i>
<i class="dx">··</i>
<i class="dx">··</i>
<i class="dx">··</i>
<i class="dv">··</i>
<i class="dv">··</i>
<i class="dv">··</i>
<i class="dv">··</i>
<i class="dv">··</i>
<i class="dv">··</i>
<i class="dv">··</i>
<i class="dv">··</i>
<i class="dv">··</i>
<i class="dv">··</i>
<i class="dv">··</i>
<i class="dv">··</i>
<i class="dv">··</i>
<i class="dv">··</i>
<i class="dv">··</i>
<i class="dv">··</i>
<i class="dv">··</i>
<i class="dv">··</i>
<i class="dv">··</i>
<i class="dv">··</i>
<i class="dv">··</i>
<i class="dv">··</i>
<i class="dv">··</i>
<i class="dv">··</i>
<i class="dv">··</i>
<i class="dv">··</i>
<i class="dv">··</i>
<i class="dv">··</i>
<i class="dv">··</i>
<i class="dv">··</i>
<i class="dv">··</i>
<i class="dv">··</i>
<i class="dv">··</i>
<i class="dv">··</i>
<i class="dv">··</i>
<i class="dv">··</i>
<i class="dv">··</i>
<i class="dv">··</i>
<i class="dv">··</i>
<i class="dv">··</i>
<i class="dv">··</i>
<i class="dv">··</i>
<i class="dv">··</i>
<i class="dv">··</i>
<i class="dv">··</i>
<i class="dv">··</i>
<i class="dv">··</i>
<i class="dv">··</i>
<i class="dv">··</i>
<i class="dv">··</i>
<i class="dv">··</i>
<i class="dv">··</i>
<i class="dv">··</i>
<i class="dv">··</i>
<i class="dv">··</i>
<i class="dv">··</i>
<i class="dv">··</i>
<i class="dv">··</i>
<i class="dv">··</i>
<i class="dv">··</i>
<i class="dv">··</i>
<i class="dv">··</i>
<i class="dv">··</i>
<i class="dv">··</i>
<i class="dx">··</i>
<i class="dx">··</i>
<i class="dx">··</i>
<i class="dx">··</i>
<i class="dx">··</i>
<i class="dx">··</i>
<i class="dx">··</i>
<i class="dx">··</i>
<i class="dx">··</i>
<i class="dx">··</i>
<i class="dx">··</i>
<i class="dx">··</i>
<i class="dx">··</i></div>
<div class="t" style="left:1046.5px;top:242.1px">



<i class="dx">·</i>
<i class="dx">·</i>
<i class="dx">·</i>
<i class="dx">·</i>
<i class="dx">·</i>
<i class="dx">·</i>
<i class="dx">·</i>
<i class="dx">·</i>
<i class="dx">·</i>
<i class="dx">·</i>
<i class="dx">·</i>
<i class="dx">·</i>
<i class="dx">·</i>
<i class="dx">·</i>
<i class="dx">·</i>
<i class="dx">·</i>
<i class="dt">·</i>
<i class="dt">·</i>
<i class="dt">·</i>
<i class="dt">·</i>
<i class="dt">·</i>
<i class="dt">·</i>
<i class="dt">·</i>
<i class="dt">·</i>
<i class="dt">·</i>
<i class="dt">·</i>
<i class="dt">·</i>
<i class="dt">·</i>
<i class="dt">·</i>
<i class="dt">·</i>
<i class="dt">·</i>
<i class="dt">·</i>
<i class="dt">·</i>
<i class="dt">·</i>
<i class="dt">·</i>
<i class="dt">·</i>
<i class="dt">·</i>
<i class="dt">·</i>
<i class="dt">·</i>
<i class="dt">·</i>
<i class="dt">·</i>
<i class="dt">·</i>
<i class="dt">·</i>
<i class="dt">·</i>
<i class="dt">·</i>
<i class="dt">·</i>
<i class="dt">·</i>
<i class="dt">·</i>
<i class="dt">·</i>
<i class="dt">·</i>
<i class="dt">·</i>
<i class="dt">·</i>
<i class="dt">·</i>
<i class="dt">·</i>
<i class="dt">·</i>
<i class="dt">·</i>
<i class="dt">·</i>
<i class="dt">·</i>
<i class="dt">·</i>
<i class="dt">·</i>
<i class="dt">·</i>
<i class="dt">·</i>
<i class="dt">·</i>
<i class="dt">·</i>
<i class="dt">·</i>
<i class="dt">·</i>
<i class="dt">·</i>
<i class="dt">·</i>
<i class="dt">·</i>
<i class="dt">·</i>
<i class="dt">·</i>
<i class="dt">·</i>
<i class="dt">·</i>
<i class="dt">·</i>
<i class="dt">·</i>
<i class="dt">·</i>
<i class="dt">·</i>
<i class="dt">·</i>
<i class="dt">·</i>
<i class="dt">·</i>
<i class="dx">·</i>
<i class="dx">·</i>
<i class="dx">·</i>
<i class="dx">·</i>
<i class="dx">·</i>
<i class="dx">·</i>
<i class="dx">·</i>
<i class="dx">·</i>
<i class="dx">·</i>
<i class="dx">·</i>
<i class="dx">·</i>
<i class="dx">·</i>
<i class="dx">·</i></div>
<div class="t" style="left:1055.7px;top:242.1px">



<i class="dx">··</i>
<i class="dx">··</i>
<i class="dx">··</i>
<i class="dx">··</i>
<i class="dx">··</i>
<i class="dx">··</i>
<i class="dx">··</i>
<i class="dx">··</i>
<i class="dx">··</i>
<i class="dx">··</i>
<i class="dx">··</i>
<i class="dx">··</i>
<i class="dx">··</i>
<i class="dx">··</i>
<i class="dx">··</i>
<i class="dx">··</i>
<i class="dp">··</i>
<i class="dp">··</i>
<i class="dp">··</i>
<i class="dp">··</i>
<i class="dp">··</i>
<i class="dp">··</i>
<i class="dp">··</i>
<i class="dp">··</i>
<i class="dp">··</i>
<i class="dp">··</i>
<i class="dp">··</i>
<i class="dp">··</i>
<i class="dp">··</i>
<i class="dp">··</i>
<i class="dp">··</i>
<i class="dp">··</i>
<i class="dp">··</i>
<i class="dp">··</i>
<i class="dp">··</i>
<i class="dp">··</i>
<i class="dp">··</i>
<i class="dp">··</i>
<i class="dp">··</i>
<i class="dp">··</i>
<i class="dp">··</i>
<i class="dp">··</i>
<i class="dp">··</i>
<i class="dp">··</i>
<i class="dp">··</i>
<i class="dp">··</i>
<i class="dp">··</i>
<i class="dp">··</i>
<i class="dp">··</i>
<i class="dp">··</i>
<i class="dp">··</i>
<i class="dp">··</i>
<i class="dp">··</i>
<i class="dp">··</i>
<i class="dp">··</i>
<i class="dp">··</i>
<i class="dp">··</i>
<i class="dp">··</i>
<i class="dp">··</i>
<i class="dp">··</i>
<i class="dp">··</i>
<i class="dp">··</i>
<i class="dp">··</i>
<i class="dp">··</i>
<i class="dp">··</i>
<i class="dp">··</i>
<i class="dp">··</i>
<i class="dp">··</i>
<i class="dp">··</i>
<i class="dp">··</i>
<i class="dp">··</i>
<i class="dp">··</i>
<i class="dp">··</i>
<i class="dp">··</i>
<i class="dp">··</i>
<i class="dp">··</i>
<i class="dp">··</i>
<i class="dp">··</i>
<i class="dp">··</i>
<i class="dp">··</i>
<i class="dx">··</i>
<i class="dx">··</i>
<i class="dx">··</i>
<i class="dx">··</i>
<i class="dx">··</i>
<i class="dx">··</i>
<i class="dx">··</i>
<i class="dx">··</i>
<i class="dx">··</i>
<i class="dx">··</i>
<i class="dx">··</i>
<i class="dx">··</i>
<i class="dx">··</i></div>
<div class="t" style="left:1074.5px;top:242.1px">



<i class="dx">···</i>
<i class="dx">···</i>
<i class="dx">···</i>
<i class="dx">···</i>
<i class="dx">···</i>
<i class="dx">···</i>
<i class="dx">···</i>
<i class="dx">···</i>
<i class="dx">···</i>
<i class="dx">···</i>
<i class="dx">···</i>
<i class="dx">···</i>
<i class="dx">···</i>
<i class="dx">···</i>
<i class="pn">F−6</i>

<i class="dn">···</i>
<i class="dn">···</i>
<i class="dn">···</i>
<i class="dn">···</i>
<i class="dn">···</i>
<i class="dn">···</i>
<i class="dn">···</i>
<i class="dn">···</i>
<i class="cn">B−6</i>

<i class="dn">···</i>
<i class="dn">···</i>
<i class="dn">···</i>
<i class="dn">···</i>
<i class="dn">···</i>
<i class="dn">···</i>
<i class="dn">···</i>
<i class="dn">···</i>
<i class="dn">···</i>
<i class="dn">···</i>
<i class="dn">···</i>
<i class="dn">···</i>
<i class="dn">···</i>
<i class="dn">···</i>
<i class="cn">A−6</i>

<i class="dn">···</i>
<i class="dn">···</i>
<i class="dn">···</i>
<i class="dn">···</i>
<i class="dn">···</i>
<i class="dn">···</i>
<i class="dn">···</i>
<i class="dn">···</i>
<i class="dn">···</i>
<i class="dn">···</i>
<i class="dn">···</i>
<i class="dn">···</i>
<i class="dn">···</i>
<i class="dn">···</i>
<i class="cn">A−6</i>

<i class="dn">···</i>
<i class="dn">···</i>
<i class="dn">···</i>
<i class="dn">···</i>
<i class="dn">···</i>
<i class="dn">···</i>
<i class="dn">···</i>
<i class="dn">···</i>
<i class="dn">···</i>
<i class="dn">···</i>
<i class="dn">···</i>
<i class="dn">···</i>
<i class="dn">···</i>
<i class="dn">···</i>
<i class="cn">E−6</i>

<i class="dn">···</i>
<i class="dn">···</i>
<i class="dn">···</i>
<i class="dn">···</i>
<i class="dn">···</i>
<i class="dn">···</i>
<i class="dx">···</i>
<i class="dx">···</i>
<i class="dx">···</i>
<i class="dx">···</i>
<i class="dx">···</i>
<i class="dx">···</i>
<i class="dx">···</i>
<i class="dx">···</i>
<i class="pn">B−6</i>

<i class="dx">···</i>
<i class="dx">···</i>
<i class="dx">···</i></div>
<div class="t" style="left:1099.5px;top:242.1px">



<i class="dx">··</i>
<i class="dx">··</i>
<i class="dx">··</i>
<i class="dx">··</i>
<i class="dx">··</i>
<i class="dx">··</i>
<i class="dx">··</i>
<i class="dx">··</i>
<i class="dx">··</i>
<i class="dx">··</i>
<i class="dx">··</i>
<i class="dx">··</i>
<i class="dx">··</i>
<i class="dx">··</i>
<i class="pn">1E</i>
<i class="dx">··</i>
<i class="di">··</i>
<i class="di">··</i>
<i class="di">··</i>
<i class="di">··</i>
<i class="di">··</i>
<i class="di">··</i>
<i class="di">··</i>
<i class="di">··</i>
<i class="ci">1E</i>
<i class="di">··</i>
<i class="di">··</i>
<i class="di">··</i>
<i class="di">··</i>
<i class="di">··</i>
<i class="di">··</i>
<i class="di">··</i>
<i class="di">··</i>
<i class="di">··</i>
<i class="di">··</i>
<i class="di">··</i>
<i class="di">··</i>
<i class="di">··</i>
<i class="di">··</i>
<i class="di">··</i>
<i class="ci">1E</i>
<i class="di">··</i>
<i class="di">··</i>
<i class="di">··</i>
<i class="di">··</i>
<i class="di">··</i>
<i class="di">··</i>
<i class="di">··</i>
<i class="di">··</i>
<i class="di">··</i>
<i class="di">··</i>
<i class="di">··</i>
<i class="di">··</i>
<i class="di">··</i>
<i class="di">··</i>
<i class="di">··</i>
<i class="ci">1E</i>
<i class="di">··</i>
<i class="di">··</i>
<i class="di">··</i>
<i class="di">··</i>
<i class="di">··</i>
<i class="di">··</i>
<i class="di">··</i>
<i class="di">··</i>
<i class="di">··</i>
<i class="di">··</i>
<i class="di">··</i>
<i class="di">··</i>
<i class="di">··</i>
<i class="di">··</i>
<i class="di">··</i>
<i class="ci">1E</i>
<i class="di">··</i>
<i class="di">··</i>
<i class="di">··</i>
<i class="di">··</i>
<i class="di">··</i>
<i class="di">··</i>
<i class="di">··</i>
<i class="dx">··</i>
<i class="dx">··</i>
<i class="dx">··</i>
<i class="dx">··</i>
<i class="dx">··</i>
<i class="dx">··</i>
<i class="dx">··</i>
<i class="dx">··</i>
<i class="pn">1E</i>
<i class="dx">··</i>
<i class="dx">··</i>
<i class="dx">··</i>
<i class="dx">··</i></div>
<div class="t" style="left:1116.5px;top:242.1px">



<i class="dx">··</i>
<i class="dx">··</i>
<i class="dx">··</i>
<i class="dx">··</i>
<i class="dx">··</i>
<i class="dx">··</i>
<i class="dx">··</i>
<i class="dx">··</i>
<i class="dx">··</i>
<i class="dx">··</i>
<i class="dx">··</i>
<i class="dx">··</i>
<i class="dx">··</i>
<i class="dx">··</i>
<i class="dx">··</i>
<i class="dx">··</i>
<i class="dv">··</i>
<i class="dv">··</i>
<i class="dv">··</i>
<i class="dv">··</i>
<i class="dv">··</i>
<i class="dv">··</i>
<i class="dv">··</i>
<i class="dv">··</i>
<i class="dv">··</i>
<i class="dv">··</i>
<i class="dv">··</i>
<i class="dv">··</i>
<i class="dv">··</i>
<i class="dv">··</i>
<i class="dv">··</i>
<i class="dv">··</i>
<i class="dv">··</i>
<i class="dv">··</i>
<i class="dv">··</i>
<i class="dv">··</i>
<i class="dv">··</i>
<i class="dv">··</i>
<i class="dv">··</i>
<i class="dv">··</i>
<i class="dv">··</i>
<i class="dv">··</i>
<i class="dv">··</i>
<i class="dv">··</i>
<i class="dv">··</i>
<i class="dv">··</i>
<i class="dv">··</i>
<i class="dv">··</i>
<i class="dv">··</i>
<i class="dv">··</i>
<i class="dv">··</i>
<i class="dv">··</i>
<i class="dv">··</i>
<i class="dv">··</i>
<i class="dv">··</i>
<i class="dv">··</i>
<i class="dv">··</i>
<i class="dv">··</i>
<i class="dv">··</i>
<i class="dv">··</i>
<i class="dv">··</i>
<i class="dv">··</i>
<i class="dv">··</i>
<i class="dv">··</i>
<i class="dv">··</i>
<i class="dv">··</i>
<i class="dv">··</i>
<i class="dv">··</i>
<i class="dv">··</i>
<i class="dv">··</i>
<i class="dv">··</i>
<i class="dv">··</i>
<i class="dv">··</i>
<i class="dv">··</i>
<i class="dv">··</i>
<i class="dv">··</i>
<i class="dv">··</i>
<i class="dv">··</i>
<i class="dv">··</i>
<i class="dv">··</i>
<i class="dx">··</i>
<i class="dx">··</i>
<i class="dx">··</i>
<i class="dx">··</i>
<i class="dx">··</i>
<i class="dx">··</i>
<i class="dx">··</i>
<i class="dx">··</i>
<i class="dx">··</i>
<i class="dx">··</i>
<i class="dx">··</i>
<i class="dx">··</i>
<i class="dx">··</i></div>
<div class="t" style="left:1133.5px;top:242.1px">



<i class="dx">·</i>
<i class="dx">·</i>
<i class="dx">·</i>
<i class="dx">·</i>
<i class="dx">·</i>
<i class="dx">·</i>
<i class="dx">·</i>
<i class="dx">·</i>
<i class="dx">·</i>
<i class="dx">·</i>
<i class="dx">·</i>
<i class="dx">·</i>
<i class="dx">·</i>
<i class="dx">·</i>
<i class="dx">·</i>
<i class="dx">·</i>
<i class="dt">·</i>
<i class="dt">·</i>
<i class="dt">·</i>
<i class="dt">·</i>
<i class="dt">·</i>
<i class="dt">·</i>
<i class="dt">·</i>
<i class="dt">·</i>
<i class="dt">·</i>
<i class="dt">·</i>
<i class="dt">·</i>
<i class="dt">·</i>
<i class="dt">·</i>
<i class="dt">·</i>
<i class="dt">·</i>
<i class="dt">·</i>
<i class="dt">·</i>
<i class="dt">·</i>
<i class="dt">·</i>
<i class="dt">·</i>
<i class="dt">·</i>
<i class="dt">·</i>
<i class="dt">·</i>
<i class="dt">·</i>
<i class="dt">·</i>
<i class="dt">·</i>
<i class="dt">·</i>
<i class="dt">·</i>
<i class="dt">·</i>
<i class="dt">·</i>
<i class="dt">·</i>
<i class="dt">·</i>
<i class="dt">·</i>
<i class="dt">·</i>
<i class="dt">·</i>
<i class="dt">·</i>
<i class="dt">·</i>
<i class="dt">·</i>
<i class="dt">·</i>
<i class="dt">·</i>
<i class="dt">·</i>
<i class="dt">·</i>
<i class="dt">·</i>
<i class="dt">·</i>
<i class="dt">·</i>
<i class="dt">·</i>
<i class="dt">·</i>
<i class="dt">·</i>
<i class="dt">·</i>
<i class="dt">·</i>
<i class="dt">·</i>
<i class="dt">·</i>
<i class="dt">·</i>
<i class="dt">·</i>
<i class="dt">·</i>
<i class="dt">·</i>
<i class="dt">·</i>
<i class="dt">·</i>
<i class="dt">·</i>
<i class="dt">·</i>
<i class="dt">·</i>
<i class="dt">·</i>
<i class="dt">·</i>
<i class="dt">·</i>
<i class="dx">·</i>
<i class="dx">·</i>
<i class="dx">·</i>
<i class="dx">·</i>
<i class="dx">·</i>
<i class="dx">·</i>
<i class="dx">·</i>
<i class="dx">·</i>
<i class="dx">·</i>
<i class="dx">·</i>
<i class="dx">·</i>
<i class="dx">·</i>
<i class="dx">·</i></div>
<div class="t" style="left:1142.7px;top:242.1px">



<i class="dx">··</i>
<i class="dx">··</i>
<i class="dx">··</i>
<i class="dx">··</i>
<i class="dx">··</i>
<i class="dx">··</i>
<i class="dx">··</i>
<i class="dx">··</i>
<i class="dx">··</i>
<i class="dx">··</i>
<i class="dx">··</i>
<i class="dx">··</i>
<i class="dx">··</i>
<i class="dx">··</i>
<i class="dx">··</i>
<i class="dx">··</i>
<i class="dp">··</i>
<i class="dp">··</i>
<i class="dp">··</i>
<i class="dp">··</i>
<i class="dp">··</i>
<i class="dp">··</i>
<i class="dp">··</i>
<i class="dp">··</i>
<i class="dp">··</i>
<i class="dp">··</i>
<i class="dp">··</i>
<i class="dp">··</i>
<i class="dp">··</i>
<i class="dp">··</i>
<i class="dp">··</i>
<i class="dp">··</i>
<i class="dp">··</i>
<i class="dp">··</i>
<i class="dp">··</i>
<i class="dp">··</i>
<i class="dp">··</i>
<i class="dp">··</i>
<i class="dp">··</i>
<i class="dp">··</i>
<i class="dp">··</i>
<i class="dp">··</i>
<i class="dp">··</i>
<i class="dp">··</i>
<i class="dp">··</i>
<i class="dp">··</i>
<i class="dp">··</i>
<i class="dp">··</i>
<i class="dp">··</i>
<i class="dp">··</i>
<i class="dp">··</i>
<i class="dp">··</i>
<i class="dp">··</i>
<i class="dp">··</i>
<i class="dp">··</i>
<i class="dp">··</i>
<i class="dp">··</i>
<i class="dp">··</i>
<i class="dp">··</i>
<i class="dp">··</i>
<i class="dp">··</i>
<i class="dp">··</i>
<i class="dp">··</i>
<i class="dp">··</i>
<i class="dp">··</i>
<i class="dp">··</i>
<i class="dp">··</i>
<i class="dp">··</i>
<i class="dp">··</i>
<i class="dp">··</i>
<i class="dp">··</i>
<i class="dp">··</i>
<i class="dp">··</i>
<i class="dp">··</i>
<i class="dp">··</i>
<i class="dp">··</i>
<i class="dp">··</i>
<i class="dp">··</i>
<i class="dp">··</i>
<i class="dp">··</i>
<i class="dx">··</i>
<i class="dx">··</i>
<i class="dx">··</i>
<i class="dx">··</i>
<i class="dx">··</i>
<i class="dx">··</i>
<i class="dx">··</i>
<i class="dx">··</i>
<i class="dx">··</i>
<i class="dx">··</i>
<i class="dx">··</i>
<i class="dx">··</i>
<i class="dx">··</i></div>
<div class="t" style="left:1161.5px;top:242.1px">



<i class="dx">···</i>
<i class="dx">···</i>
<i class="dx">···</i>
<i class="dx">···</i>
<i class="dx">···</i>
<i class="dx">···</i>
<i class="dx">···</i>
<i class="dx">···</i>
<i class="dx">···</i>
<i class="dx">···</i>
<i class="dx">···</i>
<i class="dx">···</i>
<i class="dx">···</i>
<i class="dx">···</i>
<i class="dx">···</i>
<i class="dx">···</i>
<i class="dn">···</i>
<i class="dn">···</i>
<i class="dn">···</i>
<i class="dn">···</i>
<i class="dn">···</i>
<i class="dn">···</i>
<i class="dn">···</i>
<i class="dn">···</i>
<i class="dn">···</i>
<i class="dn">···</i>
<i class="cn">C−7</i>

<i class="dn">···</i>
<i class="dn">···</i>
<i class="dn">···</i>
<i class="dn">···</i>
<i class="dn">···</i>
<i class="dn">···</i>
<i class="dn">···</i>
<i class="dn">···</i>
<i class="dn">···</i>
<i class="dn">···</i>
<i class="dn">···</i>
<i class="dn">···</i>
<i class="dn">···</i>
<i class="dn">···</i>
<i class="cn">G−6</i>

<i class="dn">···</i>
<i class="dn">···</i>
<i class="dn">···</i>
<i class="dn">···</i>
<i class="dn">···</i>
<i class="dn">···</i>
<i class="dn">···</i>
<i class="dn">···</i>
<i class="dn">···</i>
<i class="dn">···</i>
<i class="dn">···</i>
<i class="dn">···</i>
<i class="dn">···</i>
<i class="dn">···</i>
<i class="cn">G−6</i>

<i class="dn">···</i>
<i class="dn">···</i>
<i class="dn">···</i>
<i class="dn">···</i>
<i class="dn">···</i>
<i class="dn">···</i>
<i class="dn">···</i>
<i class="dn">···</i>
<i class="dn">···</i>
<i class="dn">···</i>
<i class="dn">···</i>
<i class="dn">···</i>
<i class="dn">···</i>
<i class="dn">···</i>
<i class="cn">C−6</i>

<i class="dn">···</i>
<i class="dn">···</i>
<i class="dn">···</i>
<i class="dn">···</i>
<i class="dx">···</i>
<i class="dx">···</i>
<i class="dx">···</i>
<i class="dx">···</i>
<i class="dx">···</i>
<i class="dx">···</i>
<i class="dx">···</i>
<i class="dx">···</i>
<i class="dx">···</i>
<i class="dx">···</i>
<i class="pn">C−7</i>

<i class="dx">···</i></div>
<div class="t" style="left:1186.5px;top:242.1px">



<i class="dx">··</i>
<i class="dx">··</i>
<i class="dx">··</i>
<i class="dx">··</i>
<i class="dx">··</i>
<i class="dx">··</i>
<i class="dx">··</i>
<i class="dx">··</i>
<i class="dx">··</i>
<i class="dx">··</i>
<i class="dx">··</i>
<i class="dx">··</i>
<i class="dx">··</i>
<i class="dx">··</i>
<i class="dx">··</i>
<i class="dx">··</i>
<i class="di">··</i>
<i class="di">··</i>
<i class="di">··</i>
<i class="di">··</i>
<i class="di">··</i>
<i class="di">··</i>
<i class="di">··</i>
<i class="di">··</i>
<i class="di">··</i>
<i class="di">··</i>
<i class="ci">1E</i>
<i class="di">··</i>
<i class="di">··</i>
<i class="di">··</i>
<i class="di">··</i>
<i class="di">··</i>
<i class="di">··</i>
<i class="di">··</i>
<i class="di">··</i>
<i class="di">··</i>
<i class="di">··</i>
<i class="di">··</i>
<i class="di">··</i>
<i class="di">··</i>
<i class="di">··</i>
<i class="di">··</i>
<i class="ci">1E</i>
<i class="di">··</i>
<i class="di">··</i>
<i class="di">··</i>
<i class="di">··</i>
<i class="di">··</i>
<i class="di">··</i>
<i class="di">··</i>
<i class="di">··</i>
<i class="di">··</i>
<i class="di">··</i>
<i class="di">··</i>
<i class="di">··</i>
<i class="di">··</i>
<i class="di">··</i>
<i class="di">··</i>
<i class="ci">1E</i>
<i class="di">··</i>
<i class="di">··</i>
<i class="di">··</i>
<i class="di">··</i>
<i class="di">··</i>
<i class="di">··</i>
<i class="di">··</i>
<i class="di">··</i>
<i class="di">··</i>
<i class="di">··</i>
<i class="di">··</i>
<i class="di">··</i>
<i class="di">··</i>
<i class="di">··</i>
<i class="di">··</i>
<i class="ci">1E</i>
<i class="di">··</i>
<i class="di">··</i>
<i class="di">··</i>
<i class="di">··</i>
<i class="di">··</i>
<i class="dx">··</i>
<i class="dx">··</i>
<i class="dx">··</i>
<i class="dx">··</i>
<i class="dx">··</i>
<i class="dx">··</i>
<i class="dx">··</i>
<i class="dx">··</i>
<i class="dx">··</i>
<i class="dx">··</i>
<i class="pn">1E</i>
<i class="dx">··</i>
<i class="dx">··</i></div>
<div class="t" style="left:1203.5px;top:242.1px">



<i class="dx">··</i>
<i class="dx">··</i>
<i class="dx">··</i>
<i class="dx">··</i>
<i class="dx">··</i>
<i class="dx">··</i>
<i class="dx">··</i>
<i class="dx">··</i>
<i class="dx">··</i>
<i class="dx">··</i>
<i class="dx">··</i>
<i class="dx">··</i>
<i class="dx">··</i>
<i class="dx">··</i>
<i class="dx">··</i>
<i class="dx">··</i>
<i class="dv">··</i>
<i class="dv">··</i>
<i class="dv">··</i>
<i class="dv">··</i>
<i class="dv">··</i>
<i class="dv">··</i>
<i class="dv">··</i>
<i class="dv">··</i>
<i class="dv">··</i>
<i class="dv">··</i>
<i class="dv">··</i>
<i class="dv">··</i>
<i class="dv">··</i>
<i class="dv">··</i>
<i class="dv">··</i>
<i class="dv">··</i>
<i class="dv">··</i>
<i class="dv">··</i>
<i class="dv">··</i>
<i class="dv">··</i>
<i class="dv">··</i>
<i class="dv">··</i>
<i class="dv">··</i>
<i class="dv">··</i>
<i class="dv">··</i>
<i class="dv">··</i>
<i class="dv">··</i>
<i class="dv">··</i>
<i class="dv">··</i>
<i class="dv">··</i>
<i class="dv">··</i>
<i class="dv">··</i>
<i class="dv">··</i>
<i class="dv">··</i>
<i class="dv">··</i>
<i class="dv">··</i>
<i class="dv">··</i>
<i class="dv">··</i>
<i class="dv">··</i>
<i class="dv">··</i>
<i class="dv">··</i>
<i class="dv">··</i>
<i class="dv">··</i>
<i class="dv">··</i>
<i class="dv">··</i>
<i class="dv">··</i>
<i class="dv">··</i>
<i class="dv">··</i>
<i class="dv">··</i>
<i class="dv">··</i>
<i class="dv">··</i>
<i class="dv">··</i>
<i class="dv">··</i>
<i class="dv">··</i>
<i class="dv">··</i>
<i class="dv">··</i>
<i class="dv">··</i>
<i class="dv">··</i>
<i class="dv">··</i>
<i class="dv">··</i>
<i class="dv">··</i>
<i class="dv">··</i>
<i class="dv">··</i>
<i class="dv">··</i>
<i class="dx">··</i>
<i class="dx">··</i>
<i class="dx">··</i>
<i class="dx">··</i>
<i class="dx">··</i>
<i class="dx">··</i>
<i class="dx">··</i>
<i class="dx">··</i>
<i class="dx">··</i>
<i class="dx">··</i>
<i class="dx">··</i>
<i class="dx">··</i>
<i class="dx">··</i></div>
<div class="t" style="left:1220.5px;top:242.1px">



<i class="dx">·</i>
<i class="dx">·</i>
<i class="dx">·</i>
<i class="dx">·</i>
<i class="dx">·</i>
<i class="dx">·</i>
<i class="dx">·</i>
<i class="dx">·</i>
<i class="dx">·</i>
<i class="dx">·</i>
<i class="dx">·</i>
<i class="dx">·</i>
<i class="dx">·</i>
<i class="dx">·</i>
<i class="dx">·</i>
<i class="dx">·</i>
<i class="dt">·</i>
<i class="dt">·</i>
<i class="dt">·</i>
<i class="dt">·</i>
<i class="dt">·</i>
<i class="dt">·</i>
<i class="dt">·</i>
<i class="dt">·</i>
<i class="dt">·</i>
<i class="dt">·</i>
<i class="dt">·</i>
<i class="dt">·</i>
<i class="dt">·</i>
<i class="dt">·</i>
<i class="dt">·</i>
<i class="dt">·</i>
<i class="dt">·</i>
<i class="dt">·</i>
<i class="dt">·</i>
<i class="dt">·</i>
<i class="dt">·</i>
<i class="dt">·</i>
<i class="dt">·</i>
<i class="dt">·</i>
<i class="dt">·</i>
<i class="dt">·</i>
<i class="dt">·</i>
<i class="dt">·</i>
<i class="dt">·</i>
<i class="dt">·</i>
<i class="dt">·</i>
<i class="dt">·</i>
<i class="dt">·</i>
<i class="dt">·</i>
<i class="dt">·</i>
<i class="dt">·</i>
<i class="dt">·</i>
<i class="dt">·</i>
<i class="dt">·</i>
<i class="dt">·</i>
<i class="dt">·</i>
<i class="dt">·</i>
<i class="dt">·</i>
<i class="dt">·</i>
<i class="dt">·</i>
<i class="dt">·</i>
<i class="dt">·</i>
<i class="dt">·</i>
<i class="dt">·</i>
<i class="dt">·</i>
<i class="dt">·</i>
<i class="dt">·</i>
<i class="dt">·</i>
<i class="dt">·</i>
<i class="dt">·</i>
<i class="dt">·</i>
<i class="dt">·</i>
<i class="dt">·</i>
<i class="dt">·</i>
<i class="dt">·</i>
<i class="dt">·</i>
<i class="dt">·</i>
<i class="dt">·</i>
<i class="dt">·</i>
<i class="dx">·</i>
<i class="dx">·</i>
<i class="dx">·</i>
<i class="dx">·</i>
<i class="dx">·</i>
<i class="dx">·</i>
<i class="dx">·</i>
<i class="dx">·</i>
<i class="dx">·</i>
<i class="dx">·</i>
<i class="dx">·</i>
<i class="dx">·</i>
<i class="dx">·</i></div>
<div class="t" style="left:1229.7px;top:242.1px">



<i class="dx">··</i>
<i class="dx">··</i>
<i class="dx">··</i>
<i class="dx">··</i>
<i class="dx">··</i>
<i class="dx">··</i>
<i class="dx">··</i>
<i class="dx">··</i>
<i class="dx">··</i>
<i class="dx">··</i>
<i class="dx">··</i>
<i class="dx">··</i>
<i class="dx">··</i>
<i class="dx">··</i>
<i class="dx">··</i>
<i class="dx">··</i>
<i class="dp">··</i>
<i class="dp">··</i>
<i class="dp">··</i>
<i class="dp">··</i>
<i class="dp">··</i>
<i class="dp">··</i>
<i class="dp">··</i>
<i class="dp">··</i>
<i class="dp">··</i>
<i class="dp">··</i>
<i class="dp">··</i>
<i class="dp">··</i>
<i class="dp">··</i>
<i class="dp">··</i>
<i class="dp">··</i>
<i class="dp">··</i>
<i class="dp">··</i>
<i class="dp">··</i>
<i class="dp">··</i>
<i class="dp">··</i>
<i class="dp">··</i>
<i class="dp">··</i>
<i class="dp">··</i>
<i class="dp">··</i>
<i class="dp">··</i>
<i class="dp">··</i>
<i class="dp">··</i>
<i class="dp">··</i>
<i class="dp">··</i>
<i class="dp">··</i>
<i class="dp">··</i>
<i class="dp">··</i>
<i class="dp">··</i>
<i class="dp">··</i>
<i class="dp">··</i>
<i class="dp">··</i>
<i class="dp">··</i>
<i class="dp">··</i>
<i class="dp">··</i>
<i class="dp">··</i>
<i class="dp">··</i>
<i class="dp">··</i>
<i class="dp">··</i>
<i class="dp">··</i>
<i class="dp">··</i>
<i class="dp">··</i>
<i class="dp">··</i>
<i class="dp">··</i>
<i class="dp">··</i>
<i class="dp">··</i>
<i class="dp">··</i>
<i class="dp">··</i>
<i class="dp">··</i>
<i class="dp">··</i>
<i class="dp">··</i>
<i class="dp">··</i>
<i class="dp">··</i>
<i class="dp">··</i>
<i class="dp">··</i>
<i class="dp">··</i>
<i class="dp">··</i>
<i class="dp">··</i>
<i class="dp">··</i>
<i class="dp">··</i>
<i class="dx">··</i>
<i class="dx">··</i>
<i class="dx">··</i>
<i class="dx">··</i>
<i class="dx">··</i>
<i class="dx">··</i>
<i class="dx">··</i>
<i class="dx">··</i>
<i class="dx">··</i>
<i class="dx">··</i>
<i class="dx">··</i>
<i class="dx">··</i>
<i class="dx">··</i></div>
<div class="t" style="left:1248.5px;top:242.1px">



<i class="dx">···</i>
<i class="dx">···</i>
<i class="dx">···</i>
<i class="dx">···</i>
<i class="dx">···</i>
<i class="dx">···</i>
<i class="dx">···</i>
<i class="dx">···</i>
<i class="dx">···</i>
<i class="dx">···</i>
<i class="dx">···</i>
<i class="dx">···</i>
<i class="dx">···</i>
<i class="dx">···</i>
<i class="dx">···</i>
<i class="dx">···</i>
<i class="dn">···</i>
<i class="dn">···</i>
<i class="dn">···</i>
<i class="dn">···</i>
<i class="dn">···</i>
<i class="dn">···</i>
<i class="dn">···</i>
<i class="dn">···</i>
<i class="dn">···</i>
<i class="dn">···</i>
<i class="dn">···</i>
<i class="dn">···</i>
<i class="dn">···</i>
<i class="dn">···</i>
<i class="cn">G−6</i>

<i class="dn">···</i>
<i class="dn">···</i>
<i class="dn">···</i>
<i class="dn">···</i>
<i class="dn">···</i>
<i class="dn">···</i>
<i class="dn">···</i>
<i class="dn">···</i>
<i class="dn">···</i>
<i class="dn">···</i>
<i class="dn">···</i>
<i class="dn">···</i>
<i class="dn">···</i>
<i class="dn">···</i>
<i class="cn">G−5</i>

<i class="dn">···</i>
<i class="dn">···</i>
<i class="dn">···</i>
<i class="dn">···</i>
<i class="dn">···</i>
<i class="dn">···</i>
<i class="dn">···</i>
<i class="dn">···</i>
<i class="dn">···</i>
<i class="dn">···</i>
<i class="dn">···</i>
<i class="dn">···</i>
<i class="dn">···</i>
<i class="dn">···</i>
<i class="cn">C−6</i>

<i class="dn">···</i>
<i class="dn">···</i>
<i class="dn">···</i>
<i class="dn">···</i>
<i class="dn">···</i>
<i class="dn">···</i>
<i class="dn">···</i>
<i class="dn">···</i>
<i class="dn">···</i>
<i class="dn">···</i>
<i class="dn">···</i>
<i class="dn">···</i>
<i class="cn">C−5</i>

<i class="dn">···</i>
<i class="dn">···</i>
<i class="dx">···</i>
<i class="dx">···</i>
<i class="dx">···</i>
<i class="dx">···</i>
<i class="dx">···</i>
<i class="dx">···</i>
<i class="dx">···</i>
<i class="dx">···</i>
<i class="dx">···</i>
<i class="dx">···</i>
<i class="dx">···</i>
<i class="dx">···</i>
<i class="dx">···</i></div>
<div class="t" style="left:1273.5px;top:242.1px">



<i class="dx">··</i>
<i class="dx">··</i>
<i class="dx">··</i>
<i class="dx">··</i>
<i class="dx">··</i>
<i class="dx">··</i>
<i class="dx">··</i>
<i class="dx">··</i>
<i class="dx">··</i>
<i class="dx">··</i>
<i class="dx">··</i>
<i class="dx">··</i>
<i class="dx">··</i>
<i class="dx">··</i>
<i class="dx">··</i>
<i class="dx">··</i>
<i class="di">··</i>
<i class="di">··</i>
<i class="di">··</i>
<i class="di">··</i>
<i class="di">··</i>
<i class="di">··</i>
<i class="di">··</i>
<i class="di">··</i>
<i class="di">··</i>
<i class="di">··</i>
<i class="di">··</i>
<i class="di">··</i>
<i class="di">··</i>
<i class="di">··</i>
<i class="ci">1E</i>
<i class="di">··</i>
<i class="di">··</i>
<i class="di">··</i>
<i class="di">··</i>
<i class="di">··</i>
<i class="di">··</i>
<i class="di">··</i>
<i class="di">··</i>
<i class="di">··</i>
<i class="di">··</i>
<i class="di">··</i>
<i class="di">··</i>
<i class="di">··</i>
<i class="di">··</i>
<i class="di">··</i>
<i class="ci">1E</i>
<i class="di">··</i>
<i class="di">··</i>
<i class="di">··</i>
<i class="di">··</i>
<i class="di">··</i>
<i class="di">··</i>
<i class="di">··</i>
<i class="di">··</i>
<i class="di">··</i>
<i class="di">··</i>
<i class="di">··</i>
<i class="di">··</i>
<i class="di">··</i>
<i class="di">··</i>
<i class="di">··</i>
<i class="ci">1E</i>
<i class="di">··</i>
<i class="di">··</i>
<i class="di">··</i>
<i class="di">··</i>
<i class="di">··</i>
<i class="di">··</i>
<i class="di">··</i>
<i class="di">··</i>
<i class="di">··</i>
<i class="di">··</i>
<i class="di">··</i>
<i class="di">··</i>
<i class="di">··</i>
<i class="ci">1E</i>
<i class="di">··</i>
<i class="di">··</i>
<i class="di">··</i>
<i class="dx">··</i>
<i class="dx">··</i>
<i class="dx">··</i>
<i class="dx">··</i>
<i class="dx">··</i>
<i class="dx">··</i>
<i class="dx">··</i>
<i class="dx">··</i>
<i class="dx">··</i>
<i class="dx">··</i>
<i class="dx">··</i>
<i class="dx">··</i>
<i class="dx">··</i></div>
<div class="t" style="left:1290.5px;top:242.1px">



<i class="dx">··</i>
<i class="dx">··</i>
<i class="dx">··</i>
<i class="dx">··</i>
<i class="dx">··</i>
<i class="dx">··</i>
<i class="dx">··</i>
<i class="dx">··</i>
<i class="dx">··</i>
<i class="dx">··</i>
<i class="dx">··</i>
<i class="dx">··</i>
<i class="dx">··</i>
<i class="dx">··</i>
<i class="dx">··</i>
<i class="dx">··</i>
<i class="dv">··</i>
<i class="dv">··</i>
<i class="dv">··</i>
<i class="dv">··</i>
<i class="dv">··</i>
<i class="dv">··</i>
<i class="dv">··</i>
<i class="dv">··</i>
<i class="dv">··</i>
<i class="dv">··</i>
<i class="dv">··</i>
<i class="dv">··</i>
<i class="dv">··</i>
<i class="dv">··</i>
<i class="dv">··</i>
<i class="dv">··</i>
<i class="dv">··</i>
<i class="dv">··</i>
<i class="dv">··</i>
<i class="dv">··</i>
<i class="dv">··</i>
<i class="dv">··</i>
<i class="dv">··</i>
<i class="dv">··</i>
<i class="dv">··</i>
<i class="dv">··</i>
<i class="dv">··</i>
<i class="dv">··</i>
<i class="dv">··</i>
<i class="dv">··</i>
<i class="dv">··</i>
<i class="dv">··</i>
<i class="dv">··</i>
<i class="dv">··</i>
<i class="dv">··</i>
<i class="dv">··</i>
<i class="dv">··</i>
<i class="dv">··</i>
<i class="dv">··</i>
<i class="dv">··</i>
<i class="dv">··</i>
<i class="dv">··</i>
<i class="dv">··</i>
<i class="dv">··</i>
<i class="dv">··</i>
<i class="dv">··</i>
<i class="dv">··</i>
<i class="dv">··</i>
<i class="dv">··</i>
<i class="dv">··</i>
<i class="dv">··</i>
<i class="dv">··</i>
<i class="dv">··</i>
<i class="dv">··</i>
<i class="dv">··</i>
<i class="dv">··</i>
<i class="dv">··</i>
<i class="dv">··</i>
<i class="dv">··</i>
<i class="dv">··</i>
<i class="dv">··</i>
<i class="dv">··</i>
<i class="dv">··</i>
<i class="dv">··</i>
<i class="dx">··</i>
<i class="dx">··</i>
<i class="dx">··</i>
<i class="dx">··</i>
<i class="dx">··</i>
<i class="dx">··</i>
<i class="dx">··</i>
<i class="dx">··</i>
<i class="dx">··</i>
<i class="dx">··</i>
<i class="dx">··</i>
<i class="dx">··</i>
<i class="dx">··</i></div>
<div class="t" style="left:1307.5px;top:242.1px">



<i class="dx">·</i>
<i class="dx">·</i>
<i class="dx">·</i>
<i class="dx">·</i>
<i class="dx">·</i>
<i class="dx">·</i>
<i class="dx">·</i>
<i class="dx">·</i>
<i class="dx">·</i>
<i class="dx">·</i>
<i class="dx">·</i>
<i class="dx">·</i>
<i class="dx">·</i>
<i class="dx">·</i>
<i class="dx">·</i>
<i class="dx">·</i>
<i class="dt">·</i>
<i class="dt">·</i>
<i class="dt">·</i>
<i class="dt">·</i>
<i class="dt">·</i>
<i class="dt">·</i>
<i class="dt">·</i>
<i class="dt">·</i>
<i class="dt">·</i>
<i class="dt">·</i>
<i class="dt">·</i>
<i class="dt">·</i>
<i class="dt">·</i>
<i class="dt">·</i>
<i class="dt">·</i>
<i class="dt">·</i>
<i class="dt">·</i>
<i class="dt">·</i>
<i class="dt">·</i>
<i class="dt">·</i>
<i class="dt">·</i>
<i class="dt">·</i>
<i class="dt">·</i>
<i class="dt">·</i>
<i class="dt">·</i>
<i class="dt">·</i>
<i class="dt">·</i>
<i class="dt">·</i>
<i class="dt">·</i>
<i class="dt">·</i>
<i class="dt">·</i>
<i class="dt">·</i>
<i class="dt">·</i>
<i class="dt">·</i>
<i class="dt">·</i>
<i class="dt">·</i>
<i class="dt">·</i>
<i class="dt">·</i>
<i class="dt">·</i>
<i class="dt">·</i>
<i class="dt">·</i>
<i class="dt">·</i>
<i class="dt">·</i>
<i class="dt">·</i>
<i class="dt">·</i>
<i class="dt">·</i>
<i class="dt">·</i>
<i class="dt">·</i>
<i class="dt">·</i>
<i class="dt">·</i>
<i class="dt">·</i>
<i class="dt">·</i>
<i class="dt">·</i>
<i class="dt">·</i>
<i class="dt">·</i>
<i class="dt">·</i>
<i class="dt">·</i>
<i class="dt">·</i>
<i class="dt">·</i>
<i class="dt">·</i>
<i class="dt">·</i>
<i class="dt">·</i>
<i class="dt">·</i>
<i class="dt">·</i>
<i class="dx">·</i>
<i class="dx">·</i>
<i class="dx">·</i>
<i class="dx">·</i>
<i class="dx">·</i>
<i class="dx">·</i>
<i class="dx">·</i>
<i class="dx">·</i>
<i class="dx">·</i>
<i class="dx">·</i>
<i class="dx">·</i>
<i class="dx">·</i>
<i class="dx">·</i></div>
<div class="t" style="left:1316.7px;top:242.1px">



<i class="dx">··</i>
<i class="dx">··</i>
<i class="dx">··</i>
<i class="dx">··</i>
<i class="dx">··</i>
<i class="dx">··</i>
<i class="dx">··</i>
<i class="dx">··</i>
<i class="dx">··</i>
<i class="dx">··</i>
<i class="dx">··</i>
<i class="dx">··</i>
<i class="dx">··</i>
<i class="dx">··</i>
<i class="dx">··</i>
<i class="dx">··</i>
<i class="dp">··</i>
<i class="dp">··</i>
<i class="dp">··</i>
<i class="dp">··</i>
<i class="dp">··</i>
<i class="dp">··</i>
<i class="dp">··</i>
<i class="dp">··</i>
<i class="dp">··</i>
<i class="dp">··</i>
<i class="dp">··</i>
<i class="dp">··</i>
<i class="dp">··</i>
<i class="dp">··</i>
<i class="dp">··</i>
<i class="dp">··</i>
<i class="dp">··</i>
<i class="dp">··</i>
<i class="dp">··</i>
<i class="dp">··</i>
<i class="dp">··</i>
<i class="dp">··</i>
<i class="dp">··</i>
<i class="dp">··</i>
<i class="dp">··</i>
<i class="dp">··</i>
<i class="dp">··</i>
<i class="dp">··</i>
<i class="dp">··</i>
<i class="dp">··</i>
<i class="dp">··</i>
<i class="dp">··</i>
<i class="dp">··</i>
<i class="dp">··</i>
<i class="dp">··</i>
<i class="dp">··</i>
<i class="dp">··</i>
<i class="dp">··</i>
<i class="dp">··</i>
<i class="dp">··</i>
<i class="dp">··</i>
<i class="dp">··</i>
<i class="dp">··</i>
<i class="dp">··</i>
<i class="dp">··</i>
<i class="dp">··</i>
<i class="dp">··</i>
<i class="dp">··</i>
<i class="dp">··</i>
<i class="dp">··</i>
<i class="dp">··</i>
<i class="dp">··</i>
<i class="dp">··</i>
<i class="dp">··</i>
<i class="dp">··</i>
<i class="dp">··</i>
<i class="dp">··</i>
<i class="dp">··</i>
<i class="dp">··</i>
<i class="dp">··</i>
<i class="dp">··</i>
<i class="dp">··</i>
<i class="dp">··</i>
<i class="dp">··</i>
<i class="dx">··</i>
<i class="dx">··</i>
<i class="dx">··</i>
<i class="dx">··</i>
<i class="dx">··</i>
<i class="dx">··</i>
<i class="dx">··</i>
<i class="dx">··</i>
<i class="dx">··</i>
<i class="dx">··</i>
<i class="dx">··</i>
<i class="dx">··</i>
<i class="dx">··</i></div>
<div class="ko" style="left:293px;top:403.0px;width:21px;height:6px"></div>
<div class="ko kx" style="left:902px;top:363.0px;width:21px;height:6px"></div>
<div class="ko" style="left:902px;top:443.0px;width:21px;height:6px"></div>
<div class="ko" style="left:902px;top:571.0px;width:21px;height:6px"></div>
<div class="ko" style="left:902px;top:699.0px;width:21px;height:6px"></div>
<div class="ko" style="left:902px;top:827.0px;width:21px;height:6px"></div>
<div class="ko kx" style="left:902px;top:955.0px;width:21px;height:6px"></div>
<div class="ko kx" style="left:989px;top:379.0px;width:21px;height:6px"></div>
<div class="ko" style="left:989px;top:459.0px;width:21px;height:6px"></div>
<div class="ko" style="left:989px;top:587.0px;width:21px;height:6px"></div>
<div class="ko" style="left:989px;top:715.0px;width:21px;height:6px"></div>
<div class="ko" style="left:989px;top:843.0px;width:21px;height:6px"></div>
<div class="ko kx" style="left:989px;top:971.0px;width:21px;height:6px"></div>
<div class="ko kx" style="left:1076px;top:395.0px;width:21px;height:6px"></div>
<div class="ko" style="left:1076px;top:475.0px;width:21px;height:6px"></div>
<div class="ko" style="left:1076px;top:603.0px;width:21px;height:6px"></div>
<div class="ko" style="left:1076px;top:731.0px;width:21px;height:6px"></div>
<div class="ko" style="left:1076px;top:859.0px;width:21px;height:6px"></div>
<div class="ko kx" style="left:1076px;top:987.0px;width:21px;height:6px"></div>
<div class="ko" style="left:1163px;top:491.0px;width:21px;height:6px"></div>
<div class="ko" style="left:1163px;top:619.0px;width:21px;height:6px"></div>
<div class="ko" style="left:1163px;top:747.0px;width:21px;height:6px"></div>
<div class="ko" style="left:1163px;top:875.0px;width:21px;height:6px"></div>
<div class="ko kx" style="left:1163px;top:1003.0px;width:21px;height:6px"></div>
<div class="ko" style="left:1250px;top:523.0px;width:21px;height:6px"></div>
<div class="ko" style="left:1250px;top:651.0px;width:21px;height:6px"></div>
<div class="ko" style="left:1250px;top:779.0px;width:21px;height:6px"></div>
<div class="ko" style="left:1250px;top:891.0px;width:21px;height:6px"></div>
<div class="a" style="left:28px;top:229px;width:2.2px;height:787px;background:#4a72a0"></div>
<div class="a" style="left:115px;top:229px;width:2.2px;height:787px;background:#4a72a0"></div>
<div class="a" style="left:202px;top:229px;width:2.2px;height:787px;background:#4a72a0"></div>
<div class="a" style="left:289px;top:229px;width:2.2px;height:787px;background:#4a72a0"></div>
<div class="a" style="left:376px;top:229px;width:2.2px;height:787px;background:#4a72a0"></div>
<div class="a" style="left:463px;top:229px;width:2.2px;height:787px;background:#4a72a0"></div>
<div class="a" style="left:550px;top:229px;width:2.2px;height:787px;background:#4a72a0"></div>
<div class="a" style="left:637px;top:229px;width:2.2px;height:787px;background:#4a72a0"></div>
<div class="a" style="left:724px;top:229px;width:2.2px;height:787px;background:#4a72a0"></div>
<div class="a" style="left:811px;top:229px;width:2.2px;height:787px;background:#4a72a0"></div>
<div class="a" style="left:898px;top:229px;width:2.2px;height:787px;background:#4a72a0"></div>
<div class="a" style="left:985px;top:229px;width:2.2px;height:787px;background:#4a72a0"></div>
<div class="a" style="left:1072px;top:229px;width:2.2px;height:787px;background:#4a72a0"></div>
<div class="a" style="left:1159px;top:229px;width:2.2px;height:787px;background:#4a72a0"></div>
<div class="a" style="left:1246px;top:229px;width:2.2px;height:787px;background:#4a72a0"></div>
</div>
</div>
</body></html>
